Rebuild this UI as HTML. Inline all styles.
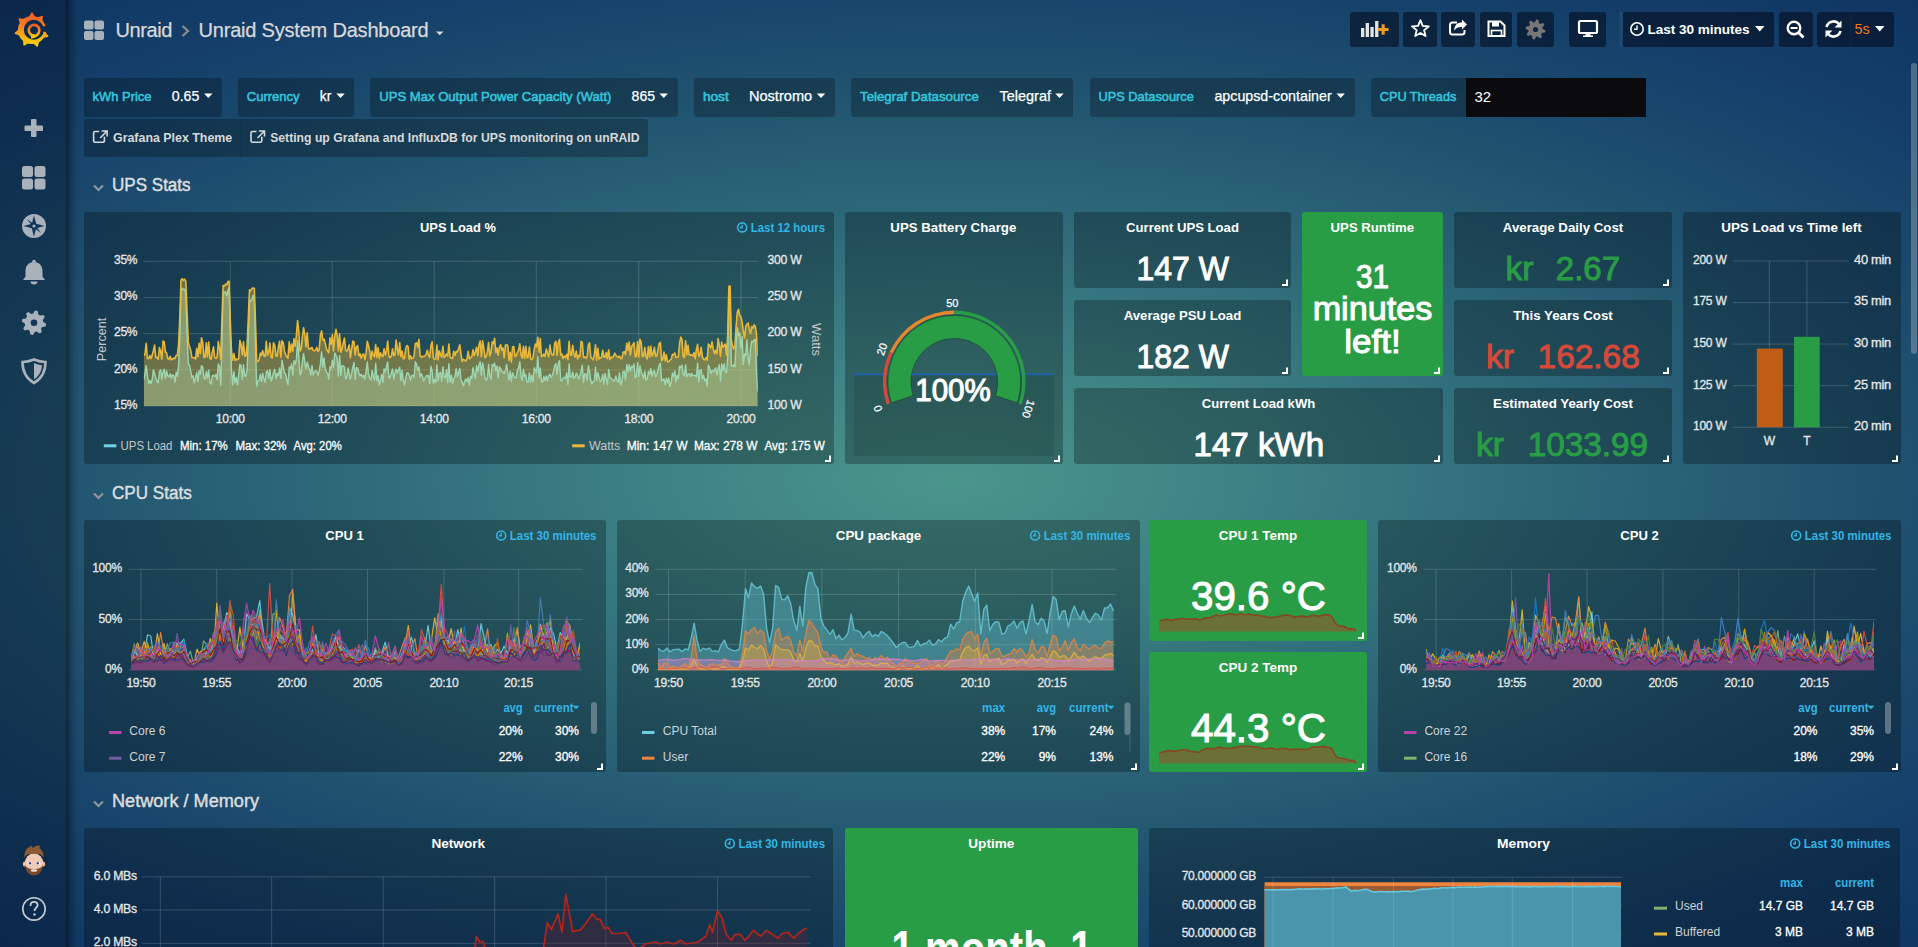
<!DOCTYPE html><html><head><meta charset="utf-8"><style>*{margin:0;padding:0}html,body{width:1918px;height:947px;overflow:hidden}
body{background:radial-gradient(ellipse 1500px 640px at 950px 480px,#4a958c 0%,#3f8485 18%,#2e6a7a 40%,#20526f 62%,#15406a 82%,#0f3563 100%);}
svg{position:absolute;left:0;top:0;font-family:"Liberation Sans",sans-serif}</style></head><body><svg width="1918" height="947" viewBox="0 0 1918 947"><defs><linearGradient id="sbsh" x1="0" x2="1"><stop offset="0" stop-color="#000" stop-opacity="0.5"/><stop offset="0.25" stop-color="#000" stop-opacity="0.28"/><stop offset="0.65" stop-color="#000" stop-opacity="0.07"/><stop offset="1" stop-color="#000" stop-opacity="0"/></linearGradient></defs><rect x="0" y="0" width="66" height="947" rx="0" fill="rgba(0,8,20,0.30)" /><rect x="66" y="0" width="14" height="947" rx="0" fill="url(#sbsh)" /><defs><linearGradient id="glg" x1="0" y1="0" x2="0" y2="1"><stop offset="0" stop-color="#f15a24"/><stop offset="0.5" stop-color="#f7931e"/><stop offset="1" stop-color="#fbd00a"/></linearGradient></defs><g fill="url(#glg)" stroke="url(#glg)" stroke-width="1.6" stroke-linejoin="round"><circle cx="32.0" cy="30.0" r="13.3"/><path d="M29.2,17.8 L32.0,13.2 L34.8,17.8 Z M37.1,18.6 L42.1,16.6 L41.6,22.0 Z M44.3,32.0 L47.6,36.3 L42.2,37.2 Z M38.4,40.7 L37.2,46.0 L33.1,42.5 Z M28.8,42.1 L24.1,44.8 L23.8,39.4 Z M20.6,35.1 L15.5,33.2 L19.5,29.6 Z M21.0,24.1 L19.3,19.0 L24.7,19.9 Z"/></g><circle cx="33.8" cy="29.7" r="10.0" fill="#0c2a4e"/><path d="M41.0,26.5 L47.5,26.0 L46.5,32.0 L41.5,31.5 Z" fill="#0c2a4e" stroke="none" stroke-width="1" /><path d="M35.5,35.3 A5.3,5.3 0 1 1 39.2,31.5 A8.2,8.2 0 0 1 31.0,37.3" fill="none" stroke="url(#glg)" stroke-width="2.6"/><rect x="31" y="119" width="5.5" height="18" rx="1" fill="#a9b1ba" /><rect x="24.5" y="125.5" width="18.5" height="5.5" rx="1" fill="#a9b1ba" /><rect x="22" y="166" width="11" height="11" rx="2.5" fill="#a9b1ba" /><rect x="34.5" y="166" width="11.0" height="11" rx="2.5" fill="#a9b1ba" /><rect x="22" y="178.5" width="11" height="11.0" rx="2.5" fill="#a9b1ba" /><rect x="34.5" y="178.5" width="11.0" height="11.0" rx="2.5" fill="#a9b1ba" /><circle cx="34" cy="226" r="12" fill="#a9b1ba"/><path d="M34,215.5 L36.2,223.8 L44.5,226 L36.2,228.2 L34,236.5 L31.8,228.2 L23.5,226 L31.8,223.8 Z" fill="#12365a" stroke="none" stroke-width="1" /><path d="M27,219 L35,225 L41,233 L33,227 Z" fill="#12365a" stroke="none" stroke-width="1" /><circle cx="34" cy="226" r="1.6" fill="#a9b1ba"/><path d="M34,262 c-5.5,0 -8.5,4 -8.5,9.5 v5 l-2.5,3.5 h22 l-2.5,-3.5 v-5 c0,-5.5 -3,-9.5 -8.5,-9.5 Z" fill="#a9b1ba" stroke="none" stroke-width="1" /><circle cx="34" cy="261.5" r="1.8" fill="#a9b1ba"/><path d="M30.5,281.5 h7 a3.5,3 0 0 1 -7,0 Z" fill="#a9b1ba" stroke="none" stroke-width="1" /><polygon points="46.2,323.8 45.6,326.4 42.2,327.0 41.1,328.6 41.8,332.1 39.6,333.5 36.8,331.5 34.8,331.9 32.9,334.9 30.3,334.3 29.7,330.9 28.1,329.8 24.6,330.5 23.2,328.3 25.2,325.5 24.8,323.5 21.8,321.6 22.4,319.0 25.8,318.4 26.9,316.8 26.2,313.3 28.4,311.9 31.2,313.9 33.2,313.5 35.1,310.5 37.7,311.1 38.3,314.5 39.9,315.6 43.4,314.9 44.8,317.1 42.8,319.9 43.2,321.9" fill="#a9b1ba"/><circle cx="34" cy="322.7" r="3.3" fill="#12375a"/><path d="M34,359.5 C29,361.5 26,362 22.5,362 C22.5,372 27,379 34,383 C41,379 45.5,372 45.5,362 C42,362 39,361.5 34,359.5 Z" fill="none" stroke="#a9b1ba" stroke-width="2.6" /><path d="M34,363 C37,364.5 39.5,365 42,365.2 C41.8,371.5 38.5,376.5 34,379.5 Z" fill="#a9b1ba" stroke="none" stroke-width="1" /><circle cx="33.8" cy="860.5" r="13.5" fill="#0d2542" fill-opacity="0.6"/><ellipse cx="24.6" cy="864" rx="1.8" ry="2.6" fill="#e9bda3"/><ellipse cx="43.4" cy="864" rx="1.8" ry="2.6" fill="#e9bda3"/><ellipse cx="34" cy="863.5" rx="9.2" ry="10.2" fill="#f0cbb4"/><path d="M24.5,858 C24,852 26,848.5 29,847.5 L31,845.5 L33,848 C35,846 37.5,845 40,846 L39.5,848.5 C42.5,850 44,853.5 43.5,858 C42,854.5 39,853.5 34,853.5 C29,853.5 26,854.5 24.5,858 Z" fill="#8e5a34" stroke="none" stroke-width="1" /><path d="M25,864 C25.5,872 29.5,875.5 34,875.5 C38.5,875.5 42.5,872 43,864 C42,867.5 40,869 34,869 C28,869 26,867.5 25,864 Z" fill="#7b4a2b" stroke="none" stroke-width="1" /><ellipse cx="34" cy="870.5" rx="3.2" ry="1.2" fill="#f5e6dc"/><ellipse cx="29.8" cy="863.3" rx="2.2" ry="1.5" fill="#fff"/><ellipse cx="38" cy="863.3" rx="2.2" ry="1.5" fill="#fff"/><circle cx="30" cy="863.3" r="1.2" fill="#3b3f8a"/><circle cx="37.8" cy="863.3" r="1.2" fill="#3b3f8a"/><circle cx="34" cy="908.9" r="11.2" fill="none" stroke="#c8ccd0" stroke-width="1.6"/><path d="M30.5,906 C30.5,902.8 32,901.8 34,901.8 C36.2,901.8 37.6,903.2 37.6,905.2 C37.6,907.5 34.5,908 34.5,911" fill="none" stroke="#c8ccd0" stroke-width="1.8" /><circle cx="34.5" cy="914.5" r="1.2" fill="#c8ccd0"/><rect x="84" y="20.5" width="9.5" height="9.0" rx="2" fill="#a9b1ba" /><rect x="94.5" y="20.5" width="9.5" height="9.0" rx="2" fill="#a9b1ba" /><rect x="84" y="31" width="9.5" height="9" rx="2" fill="#a9b1ba" /><rect x="94.5" y="31" width="9.5" height="9" rx="2" fill="#a9b1ba" /><text x="115.5" y="36.8" font-size="20" fill="#d8d9da" font-weight="normal" text-anchor="start" letter-spacing="-0.4" stroke="#d8d9da" stroke-width="0.25" >Unraid</text><path d="M182.5,26 L188,31 L182.5,36" fill="none" stroke="#8e8e8e" stroke-width="2.2" /><text x="198.5" y="36.8" font-size="20" fill="#d8d9da" font-weight="normal" text-anchor="start" letter-spacing="-0.2" stroke="#d8d9da" stroke-width="0.25" >Unraid System Dashboard</text><path d="M436,31.5 h7.5 l-3.75,3.8 Z" fill="#d8d9da" stroke="none" stroke-width="1" /><rect x="1350" y="12" width="49" height="35" rx="3" fill="rgba(3,12,30,0.58)" /><rect x="1403" y="12" width="34" height="35" rx="3" fill="rgba(3,12,30,0.58)" /><rect x="1441" y="12" width="34" height="35" rx="3" fill="rgba(3,12,30,0.58)" /><rect x="1480" y="12" width="32" height="35" rx="3" fill="rgba(3,12,30,0.58)" /><rect x="1517" y="12" width="37" height="35" rx="3" fill="rgba(3,12,30,0.58)" /><rect x="1569" y="12" width="37" height="35" rx="3" fill="rgba(3,12,30,0.58)" /><rect x="1623" y="12" width="151" height="35" rx="3" fill="rgba(3,12,30,0.58)" /><rect x="1779" y="12" width="34" height="35" rx="3" fill="rgba(3,12,30,0.58)" /><rect x="1817" y="12" width="77" height="35" rx="3" fill="rgba(3,12,30,0.58)" /><rect x="1619.5" y="12" width="3.0" height="35" rx="0" fill="rgba(255,255,255,0.06)" /><rect x="1850" y="12" width="1" height="35" rx="0" fill="rgba(255,255,255,0.04)" /><rect x="1361.0" y="28" width="3.2999999999999545" height="9" rx="0" fill="#e4e4e4" /><rect x="1365.7" y="23" width="3.2999999999999545" height="14" rx="0" fill="#e4e4e4" /><rect x="1370.4" y="27" width="3.2999999999999545" height="10" rx="0" fill="#e4e4e4" /><rect x="1375.1" y="21" width="3.2999999999999545" height="16" rx="0" fill="#e4e4e4" /><rect x="1377.8" y="28" width="10.700000000000045" height="3" rx="0" fill="#f39c1a" /><rect x="1381.6" y="24.3" width="3.1000000000001364" height="10.400000000000002" rx="0" fill="#f39c1a" /><polygon points="1420.4,20.2 1422.7,25.8 1428.8,26.3 1424.1,30.2 1425.6,36.1 1420.4,32.9 1415.2,36.1 1416.7,30.2 1412.0,26.3 1418.1,25.8" fill="none" stroke="#fff" stroke-width="1.8" stroke-linejoin="round"/><path d="M1457,22.5 h-4.5 a2.5,2.5 0 0 0 -2.5,2.5 v7 a2.5,2.5 0 0 0 2.5,2.5 h9.5 a2.5,2.5 0 0 0 2.5,-2.5 v-2" fill="none" stroke="#fff" stroke-width="2" /><path d="M1467,24.5 L1462,19.5 V22.5 C1457,22.5 1454.5,25 1454,31 C1456,27.5 1458.5,27 1462,27 V29.5 Z" fill="#fff" stroke="none" stroke-width="1" /><path d="M1488.5,21.5 h12 l4,4 v10.5 h-16 Z" fill="none" stroke="#fff" stroke-width="2" /><rect x="1492" y="22" width="7" height="4.5" rx="0" fill="#fff" /><rect x="1491.5" y="30.5" width="10.0" height="5.5" rx="0" fill="none" stroke="#fff" stroke-width="1.6"/><polygon points="1545.5,30.3 1545.0,32.6 1542.0,32.8 1541.1,34.2 1542.0,37.1 1540.0,38.4 1537.8,36.4 1536.1,36.8 1534.7,39.5 1532.4,39.0 1532.2,36.0 1530.8,35.1 1527.9,36.0 1526.6,34.0 1528.6,31.8 1528.2,30.1 1525.5,28.7 1526.0,26.4 1529.0,26.2 1529.9,24.8 1529.0,21.9 1531.0,20.6 1533.2,22.6 1534.9,22.2 1536.3,19.5 1538.6,20.0 1538.8,23.0 1540.2,23.9 1543.1,23.0 1544.4,25.0 1542.4,27.2 1542.8,28.9" fill="#777"/><circle cx="1535.5" cy="29.5" r="2.6" fill="#0e2340"/><rect x="1579" y="21" width="18" height="12" rx="1.5" fill="none" stroke="#fff" stroke-width="2.2"/><rect x="1585.5" y="33" width="5.0" height="3" rx="0" fill="#fff" /><rect x="1583" y="35.5" width="10" height="1.5" rx="0" fill="#fff" /><circle cx="1637" cy="29" r="6.2" fill="none" stroke="#fff" stroke-width="1.6"/><path d="M1637,25.5 V29.3 H1634.06" fill="none" stroke="#fff" stroke-width="1.4" /><text x="1647.5" y="33.9" font-size="13.6" fill="#fff" font-weight="bold" text-anchor="start" letter-spacing="-0.05" >Last 30 minutes</text><path d="M1755,26 h9.5 l-4.75,5.5 Z" fill="#fff" stroke="none" stroke-width="1" /><circle cx="1794" cy="28" r="6.3" fill="none" stroke="#fff" stroke-width="2.4"/><rect x="1790.5" y="27" width="7.0" height="2" rx="0" fill="#fff" /><path d="M1798.5,32.5 L1803.5,37.5" fill="none" stroke="#fff" stroke-width="2.8" /><path d="M1826.5,27 A7.2,7.2 0 0 1 1839,24" fill="none" stroke="#fff" stroke-width="2.6" /><path d="M1841.5,20.5 V27.5 H1834.5 Z" fill="#fff" stroke="none" stroke-width="1" /><path d="M1840.5,31 A7.2,7.2 0 0 1 1828,34" fill="none" stroke="#fff" stroke-width="2.6" /><path d="M1825.5,37.5 V30.5 H1832.5 Z" fill="#fff" stroke="none" stroke-width="1" /><text x="1854.5" y="34.0" font-size="14.5" fill="#eb7b18" font-weight="normal" text-anchor="start" >5s</text><path d="M1875,26 h9.5 l-4.75,5.5 Z" fill="#fff" stroke="none" stroke-width="1" /><rect x="84" y="78" width="138" height="39" rx="3" fill="rgba(0,0,0,0.25)" /><text x="92.5" y="100.9" font-size="13.6" fill="#35c6dc" stroke="#35c6dc" stroke-width="0.55" textLength="59" lengthAdjust="spacingAndGlyphs">kWh Price</text><text x="171.8" y="100.9" font-size="15" fill="#fff" font-weight="normal" text-anchor="start" stroke="#fff" stroke-width="0.25" textLength="27.5" lengthAdjust="spacingAndGlyphs" >0.65</text><rect x="238" y="78" width="116" height="39" rx="3" fill="rgba(0,0,0,0.25)" /><text x="246.8" y="100.9" font-size="13.6" fill="#35c6dc" stroke="#35c6dc" stroke-width="0.55" textLength="52.8" lengthAdjust="spacingAndGlyphs">Currency</text><text x="319.8" y="100.9" font-size="15" fill="#fff" font-weight="normal" text-anchor="start" stroke="#fff" stroke-width="0.25" textLength="11.5" lengthAdjust="spacingAndGlyphs" >kr</text><rect x="370" y="78" width="308" height="39" rx="3" fill="rgba(0,0,0,0.25)" /><text x="379.3" y="100.9" font-size="13.6" fill="#35c6dc" stroke="#35c6dc" stroke-width="0.55" textLength="232.1" lengthAdjust="spacingAndGlyphs">UPS Max Output Power Capacity (Watt)</text><text x="631.6" y="100.9" font-size="15" fill="#fff" font-weight="normal" text-anchor="start" stroke="#fff" stroke-width="0.25" textLength="23.4" lengthAdjust="spacingAndGlyphs" >865</text><rect x="694" y="78" width="141" height="39" rx="3" fill="rgba(0,0,0,0.25)" /><text x="702.9" y="100.9" font-size="13.6" fill="#35c6dc" stroke="#35c6dc" stroke-width="0.55" textLength="25.8" lengthAdjust="spacingAndGlyphs">host</text><text x="748.9" y="100.9" font-size="15" fill="#fff" font-weight="normal" text-anchor="start" stroke="#fff" stroke-width="0.25" textLength="63.3" lengthAdjust="spacingAndGlyphs" >Nostromo</text><rect x="851" y="78" width="222" height="39" rx="3" fill="rgba(0,0,0,0.25)" /><text x="860" y="100.9" font-size="13.6" fill="#35c6dc" stroke="#35c6dc" stroke-width="0.55" textLength="118.8" lengthAdjust="spacingAndGlyphs">Telegraf Datasource</text><text x="999.5" y="100.9" font-size="15" fill="#fff" font-weight="normal" text-anchor="start" stroke="#fff" stroke-width="0.25" textLength="51.5" lengthAdjust="spacingAndGlyphs" >Telegraf</text><rect x="1090" y="78" width="265" height="39" rx="3" fill="rgba(0,0,0,0.25)" /><text x="1098.5" y="100.9" font-size="13.6" fill="#35c6dc" stroke="#35c6dc" stroke-width="0.55" textLength="95.3" lengthAdjust="spacingAndGlyphs">UPS Datasource</text><text x="1214.4" y="100.9" font-size="15" fill="#fff" font-weight="normal" text-anchor="start" stroke="#fff" stroke-width="0.25" textLength="117.3" lengthAdjust="spacingAndGlyphs" >apcupsd-container</text><path d="M204.10000000000002,93.6 h8.4 l-4.2,4.4 Z" fill="#fff" stroke="none" stroke-width="1" /><path d="M336.3,93.6 h8.4 l-4.2,4.4 Z" fill="#fff" stroke="none" stroke-width="1" /><path d="M659.5,93.6 h8.4 l-4.2,4.4 Z" fill="#fff" stroke="none" stroke-width="1" /><path d="M816.8,93.6 h8.4 l-4.2,4.4 Z" fill="#fff" stroke="none" stroke-width="1" /><path d="M1055.3,93.6 h8.4 l-4.2,4.4 Z" fill="#fff" stroke="none" stroke-width="1" /><path d="M1336.5,93.6 h8.4 l-4.2,4.4 Z" fill="#fff" stroke="none" stroke-width="1" /><rect x="1371" y="78" width="275" height="39" rx="3" fill="rgba(0,0,0,0.25)" /><text x="1379.8" y="100.9" font-size="13.6" fill="#35c6dc" stroke="#35c6dc" stroke-width="0.55" textLength="76.5" lengthAdjust="spacingAndGlyphs">CPU Threads</text><rect x="1466" y="78" width="180" height="39" rx="0" fill="#0b0b0f" /><rect x="1640" y="78" width="6" height="39" rx="3" fill="#0b0b0f" /><text x="1474.5" y="102.2" font-size="15" fill="#fff" font-weight="normal" text-anchor="start" textLength="16.6" lengthAdjust="spacingAndGlyphs" >32</text><rect x="84" y="119" width="564" height="38" rx="3" fill="rgba(0,0,0,0.25)" /><rect x="240.5" y="119" width="1.0" height="38" rx="0" fill="rgba(0,0,0,0.12)" /><path d="M99.1,131.5 h-4 a1.5,1.5 0 0 0 -1.5,1.5 v7.8 a1.5,1.5 0 0 0 1.5,1.5 h7.8 a1.5,1.5 0 0 0 1.5,-1.5 v-4" fill="none" stroke="#d8d9da" stroke-width="1.6" /><path d="M101.6,131 h5.5 v5.5 M106.8,131.3 L100.1,138" fill="none" stroke="#d8d9da" stroke-width="1.6" /><text x="113" y="142.3" font-size="12.4" fill="#d8d9da" font-weight="bold" textLength="119.2" lengthAdjust="spacingAndGlyphs">Grafana Plex Theme</text><path d="M256.5,131.5 h-4 a1.5,1.5 0 0 0 -1.5,1.5 v7.8 a1.5,1.5 0 0 0 1.5,1.5 h7.8 a1.5,1.5 0 0 0 1.5,-1.5 v-4" fill="none" stroke="#d8d9da" stroke-width="1.6" /><path d="M259,131 h5.5 v5.5 M264.2,131.3 L257.5,138" fill="none" stroke="#d8d9da" stroke-width="1.6" /><text x="270.2" y="142.3" font-size="12.4" fill="#d8d9da" font-weight="bold" textLength="369.3" lengthAdjust="spacingAndGlyphs">Setting up Grafana and InfluxDB for UPS monitoring on unRAID</text><path d="M94,185.5 L98.5,190 L103,185.5" fill="none" stroke="#8f959b" stroke-width="2.2" /><text x="112" y="191.3" font-size="18" fill="#dcdddf" stroke="#dcdddf" stroke-width="0.45" textLength="78.6" lengthAdjust="spacingAndGlyphs">UPS Stats</text><path d="M94,493.5 L98.5,498 L103,493.5" fill="none" stroke="#8f959b" stroke-width="2.2" /><text x="112" y="499.3" font-size="18" fill="#dcdddf" stroke="#dcdddf" stroke-width="0.45" textLength="79.7" lengthAdjust="spacingAndGlyphs">CPU Stats</text><path d="M94,801.5 L98.5,806 L103,801.5" fill="none" stroke="#8f959b" stroke-width="2.2" /><text x="112" y="807.3" font-size="18" fill="#dcdddf" stroke="#dcdddf" stroke-width="0.45" textLength="147" lengthAdjust="spacingAndGlyphs">Network / Memory</text><rect x="84" y="212" width="750" height="252" rx="3" fill="rgba(0,0,0,0.27)" /><text x="458" y="231.9" font-size="13.3" fill="#fff" font-weight="bold" text-anchor="middle" textLength="76" lengthAdjust="spacingAndGlyphs">UPS Load %</text><text x="825" y="231.8" font-size="12.2" fill="#33b5e5" font-weight="bold" text-anchor="end" textLength="74.2" lengthAdjust="spacingAndGlyphs">Last 12 hours</text><circle cx="742.1999999999999" cy="227.4" r="4.5" fill="none" stroke="#33b5e5" stroke-width="1.6"/><path d="M742.1999999999999,224.75 V227.70000000000002 H739.9739999999999" fill="none" stroke="#33b5e5" stroke-width="1.4" /><line x1="143.8" y1="261.3" x2="757.7" y2="261.3" stroke="rgba(255,255,255,0.16)" stroke-width="1" /><line x1="143.8" y1="297.475" x2="757.7" y2="297.475" stroke="rgba(255,255,255,0.16)" stroke-width="1" /><line x1="143.8" y1="333.65" x2="757.7" y2="333.65" stroke="rgba(255,255,255,0.16)" stroke-width="1" /><line x1="143.8" y1="369.825" x2="757.7" y2="369.825" stroke="rgba(255,255,255,0.16)" stroke-width="1" /><line x1="143.8" y1="406.0" x2="757.7" y2="406.0" stroke="rgba(255,255,255,0.16)" stroke-width="1" /><line x1="230.3" y1="261.3" x2="230.3" y2="406.0" stroke="rgba(255,255,255,0.16)" stroke-width="1" /><line x1="332.2" y1="261.3" x2="332.2" y2="406.0" stroke="rgba(255,255,255,0.16)" stroke-width="1" /><line x1="434.2" y1="261.3" x2="434.2" y2="406.0" stroke="rgba(255,255,255,0.16)" stroke-width="1" /><line x1="536.3" y1="261.3" x2="536.3" y2="406.0" stroke="rgba(255,255,255,0.16)" stroke-width="1" /><line x1="638.8" y1="261.3" x2="638.8" y2="406.0" stroke="rgba(255,255,255,0.16)" stroke-width="1" /><line x1="741.0" y1="261.3" x2="741.0" y2="406.0" stroke="rgba(255,255,255,0.16)" stroke-width="1" /><text x="137.3" y="264.1" font-size="12" fill="#e6e7e8" font-weight="normal" text-anchor="end" letter-spacing="-0.25" stroke="#e6e7e8" stroke-width="0.3" >35%</text><text x="137.3" y="300.3" font-size="12" fill="#e6e7e8" font-weight="normal" text-anchor="end" letter-spacing="-0.25" stroke="#e6e7e8" stroke-width="0.3" >30%</text><text x="137.3" y="336.4" font-size="12" fill="#e6e7e8" font-weight="normal" text-anchor="end" letter-spacing="-0.25" stroke="#e6e7e8" stroke-width="0.3" >25%</text><text x="137.3" y="372.6" font-size="12" fill="#e6e7e8" font-weight="normal" text-anchor="end" letter-spacing="-0.25" stroke="#e6e7e8" stroke-width="0.3" >20%</text><text x="137.3" y="408.8" font-size="12" fill="#e6e7e8" font-weight="normal" text-anchor="end" letter-spacing="-0.25" stroke="#e6e7e8" stroke-width="0.3" >15%</text><text x="767.5" y="264.1" font-size="12" fill="#e6e7e8" font-weight="normal" text-anchor="start" letter-spacing="-0.25" stroke="#e6e7e8" stroke-width="0.3" textLength="34" lengthAdjust="spacingAndGlyphs" >300 W</text><text x="767.5" y="300.3" font-size="12" fill="#e6e7e8" font-weight="normal" text-anchor="start" letter-spacing="-0.25" stroke="#e6e7e8" stroke-width="0.3" textLength="34" lengthAdjust="spacingAndGlyphs" >250 W</text><text x="767.5" y="336.4" font-size="12" fill="#e6e7e8" font-weight="normal" text-anchor="start" letter-spacing="-0.25" stroke="#e6e7e8" stroke-width="0.3" textLength="34" lengthAdjust="spacingAndGlyphs" >200 W</text><text x="767.5" y="372.6" font-size="12" fill="#e6e7e8" font-weight="normal" text-anchor="start" letter-spacing="-0.25" stroke="#e6e7e8" stroke-width="0.3" textLength="34" lengthAdjust="spacingAndGlyphs" >150 W</text><text x="767.5" y="408.8" font-size="12" fill="#e6e7e8" font-weight="normal" text-anchor="start" letter-spacing="-0.25" stroke="#e6e7e8" stroke-width="0.3" textLength="34" lengthAdjust="spacingAndGlyphs" >100 W</text><text x="230.3" y="423.0" font-size="12" fill="#e6e7e8" font-weight="normal" text-anchor="middle" letter-spacing="-0.25" stroke="#e6e7e8" stroke-width="0.3" textLength="29" lengthAdjust="spacingAndGlyphs" >10:00</text><text x="332.2" y="423.0" font-size="12" fill="#e6e7e8" font-weight="normal" text-anchor="middle" letter-spacing="-0.25" stroke="#e6e7e8" stroke-width="0.3" textLength="29" lengthAdjust="spacingAndGlyphs" >12:00</text><text x="434.2" y="423.0" font-size="12" fill="#e6e7e8" font-weight="normal" text-anchor="middle" letter-spacing="-0.25" stroke="#e6e7e8" stroke-width="0.3" textLength="29" lengthAdjust="spacingAndGlyphs" >14:00</text><text x="536.3" y="423.0" font-size="12" fill="#e6e7e8" font-weight="normal" text-anchor="middle" letter-spacing="-0.25" stroke="#e6e7e8" stroke-width="0.3" textLength="29" lengthAdjust="spacingAndGlyphs" >16:00</text><text x="638.8" y="423.0" font-size="12" fill="#e6e7e8" font-weight="normal" text-anchor="middle" letter-spacing="-0.25" stroke="#e6e7e8" stroke-width="0.3" textLength="29" lengthAdjust="spacingAndGlyphs" >18:00</text><text x="741.0" y="423.0" font-size="12" fill="#e6e7e8" font-weight="normal" text-anchor="middle" letter-spacing="-0.25" stroke="#e6e7e8" stroke-width="0.3" textLength="29" lengthAdjust="spacingAndGlyphs" >20:00</text><text x="0.0" y="0.0" font-size="12.5" fill="#c4c7ca" font-weight="normal" text-anchor="middle" textLength="43.4" lengthAdjust="spacingAndGlyphs" transform="translate(105.5,339.5) rotate(-90)">Percent</text><text x="0.0" y="0.0" font-size="12.5" fill="#c4c7ca" font-weight="normal" text-anchor="middle" textLength="33" lengthAdjust="spacingAndGlyphs" transform="translate(811.8,339.5) rotate(90)">Watts</text><clipPath id="c_ups"><rect x="143.8" y="250" width="614" height="156"/></clipPath><g clip-path="url(#c_ups)"><path d="M143.8,355.7 L145.0,354.0 L146.2,343.2 L147.4,358.5 L148.6,358.7 L149.8,355.6 L151.0,358.5 L152.2,355.1 L153.4,350.4 L154.6,345.1 L155.8,357.4 L157.0,357.3 L158.2,359.3 L159.4,347.5 L160.6,351.0 L161.8,359.3 L163.0,341.1 L164.2,341.7 L165.4,351.9 L166.6,353.1 L167.8,358.5 L169.0,359.3 L170.2,356.3 L171.4,359.9 L172.6,359.0 L173.8,358.1 L175.0,358.4 L176.2,355.4 L177.4,355.1 L178.6,344.1 L179.8,317.3 L181.0,280.3 L182.2,278.7 L183.4,280.5 L184.6,279.2 L185.8,281.2 L187.0,310.2 L188.3,341.9 L189.5,346.6 L190.7,350.2 L191.9,357.4 L193.1,357.7 L194.3,357.6 L195.5,359.1 L196.7,348.4 L197.9,356.8 L199.1,343.3 L200.3,353.7 L201.5,337.9 L202.7,342.5 L203.9,357.6 L205.1,357.2 L206.3,342.8 L207.5,357.0 L208.7,342.0 L209.9,358.4 L211.1,359.5 L212.3,352.2 L213.5,346.9 L214.7,357.3 L215.9,358.5 L217.1,357.3 L218.3,341.5 L219.5,348.5 L220.7,359.2 L221.9,319.7 L223.1,285.5 L224.3,285.9 L225.5,284.3 L226.7,284.6 L227.9,281.5 L229.1,281.4 L230.3,320.5 L231.5,351.0 L232.7,360.2 L233.9,353.6 L235.1,360.4 L236.3,359.0 L237.5,359.7 L238.7,358.4 L239.9,340.5 L241.1,344.7 L242.3,355.0 L243.5,341.7 L244.7,356.3 L245.9,356.0 L247.1,344.3 L248.3,318.2 L249.5,289.8 L250.7,290.8 L251.9,288.5 L253.1,288.0 L254.3,288.3 L255.5,322.2 L256.7,360.3 L257.9,361.6 L259.1,360.2 L260.3,353.1 L261.5,355.3 L262.7,350.6 L263.9,355.9 L265.1,356.6 L266.3,341.3 L267.5,355.4 L268.7,352.3 L269.9,343.1 L271.1,357.4 L272.3,358.0 L273.5,342.8 L274.7,345.2 L276.0,356.1 L277.2,356.1 L278.4,347.1 L279.6,341.2 L280.8,357.4 L282.0,340.9 L283.2,342.4 L284.4,350.9 L285.6,354.6 L286.8,356.8 L288.0,358.2 L289.2,341.9 L290.4,352.3 L291.6,344.0 L292.8,351.2 L294.0,338.9 L295.2,346.2 L296.4,335.6 L297.6,320.6 L298.8,331.5 L300.0,351.0 L301.2,349.2 L302.4,336.4 L303.6,327.9 L304.8,334.9 L306.0,346.8 L307.2,332.7 L308.4,348.4 L309.6,349.5 L310.8,348.1 L312.0,347.6 L313.2,350.5 L314.4,350.8 L315.6,350.2 L316.8,347.4 L318.0,351.6 L319.2,349.9 L320.4,335.3 L321.6,330.9 L322.8,340.3 L324.0,339.0 L325.2,343.0 L326.4,348.8 L327.6,351.0 L328.8,352.7 L330.0,337.8 L331.2,344.4 L332.4,334.7 L333.6,350.9 L334.8,336.4 L336.0,329.3 L337.2,335.6 L338.4,350.9 L339.6,333.8 L340.8,352.3 L342.0,349.0 L343.2,343.2 L344.4,338.1 L345.6,350.0 L346.8,351.4 L348.0,349.0 L349.2,344.9 L350.4,358.0 L351.6,349.5 L352.8,341.1 L354.0,341.8 L355.2,355.2 L356.4,346.8 L357.6,345.7 L358.8,355.7 L360.0,353.8 L361.2,358.2 L362.4,354.8 L363.7,354.0 L364.9,359.6 L366.1,352.8 L367.3,341.3 L368.5,345.6 L369.7,351.2 L370.9,359.5 L372.1,351.0 L373.3,355.1 L374.5,356.9 L375.7,344.6 L376.9,357.5 L378.1,347.7 L379.3,358.6 L380.5,352.8 L381.7,355.7 L382.9,356.7 L384.1,348.7 L385.3,354.9 L386.5,350.9 L387.7,341.0 L388.9,356.3 L390.1,357.7 L391.3,356.1 L392.5,348.9 L393.7,355.6 L394.9,355.1 L396.1,340.1 L397.3,348.6 L398.5,354.8 L399.7,342.6 L400.9,356.8 L402.1,351.1 L403.3,358.8 L404.5,358.4 L405.7,348.8 L406.9,345.6 L408.1,346.6 L409.3,359.4 L410.5,355.7 L411.7,358.6 L412.9,358.5 L414.1,355.5 L415.3,343.6 L416.5,342.8 L417.7,347.1 L418.9,339.4 L420.1,355.8 L421.3,357.3 L422.5,356.2 L423.7,356.5 L424.9,355.9 L426.1,354.4 L427.3,350.3 L428.5,355.3 L429.7,357.2 L430.9,346.0 L432.1,341.8 L433.3,357.7 L434.5,359.3 L435.7,359.3 L436.9,345.0 L438.1,359.9 L439.3,350.8 L440.5,354.7 L441.7,357.2 L442.9,346.2 L444.1,357.6 L445.3,356.2 L446.5,353.9 L447.7,356.2 L448.9,344.0 L450.1,357.1 L451.4,358.1 L452.6,358.4 L453.8,351.2 L455.0,355.4 L456.2,351.4 L457.4,351.9 L458.6,348.5 L459.8,344.8 L461.0,354.3 L462.2,361.5 L463.4,359.3 L464.6,360.1 L465.8,361.0 L467.0,358.8 L468.2,351.3 L469.4,358.9 L470.6,357.5 L471.8,356.8 L473.0,349.7 L474.2,355.5 L475.4,352.2 L476.6,347.2 L477.8,355.6 L479.0,345.0 L480.2,341.1 L481.4,356.6 L482.6,340.9 L483.8,348.2 L485.0,357.7 L486.2,356.4 L487.4,352.1 L488.6,342.5 L489.8,356.0 L491.0,352.6 L492.2,341.8 L493.4,343.8 L494.6,338.4 L495.8,352.8 L497.0,348.0 L498.2,355.3 L499.4,347.6 L500.6,344.7 L501.8,350.3 L503.0,347.9 L504.2,357.6 L505.4,345.1 L506.6,344.5 L507.8,345.8 L509.0,360.7 L510.2,352.4 L511.4,362.2 L512.6,346.7 L513.8,346.6 L515.0,356.7 L516.2,355.8 L517.4,352.4 L518.6,350.1 L519.8,343.9 L521.0,354.4 L522.2,358.2 L523.4,346.3 L524.6,358.5 L525.8,346.3 L527.0,357.7 L528.2,357.0 L529.4,347.1 L530.6,358.9 L531.8,359.7 L533.0,357.6 L534.2,349.9 L535.4,344.0 L536.6,346.8 L537.8,337.3 L539.1,352.1 L540.3,338.5 L541.5,356.4 L542.7,356.2 L543.9,354.0 L545.1,356.4 L546.3,349.0 L547.5,353.0 L548.7,356.7 L549.9,345.1 L551.1,352.8 L552.3,355.0 L553.5,354.9 L554.7,343.4 L555.9,341.4 L557.1,355.5 L558.3,342.6 L559.5,339.6 L560.7,355.1 L561.9,354.1 L563.1,358.5 L564.3,356.2 L565.5,357.6 L566.7,354.2 L567.9,359.6 L569.1,341.2 L570.3,354.9 L571.5,355.3 L572.7,345.3 L573.9,354.2 L575.1,357.2 L576.3,351.0 L577.5,359.0 L578.7,355.2 L579.9,356.8 L581.1,341.4 L582.3,342.4 L583.5,357.5 L584.7,356.8 L585.9,358.5 L587.1,356.5 L588.3,345.4 L589.5,342.8 L590.7,356.7 L591.9,358.5 L593.1,359.8 L594.3,354.9 L595.5,344.9 L596.7,360.2 L597.9,348.4 L599.1,359.0 L600.3,357.7 L601.5,357.5 L602.7,350.2 L603.9,357.2 L605.1,357.0 L606.3,352.5 L607.5,358.8 L608.7,349.9 L609.9,359.7 L611.1,357.1 L612.3,357.6 L613.5,356.4 L614.7,353.2 L615.9,355.2 L617.1,356.8 L618.3,357.3 L619.5,356.0 L620.7,358.7 L621.9,358.5 L623.1,352.5 L624.3,351.6 L625.5,354.4 L626.8,343.2 L628.0,350.5 L629.2,342.1 L630.4,355.2 L631.6,346.5 L632.8,345.0 L634.0,342.6 L635.2,356.6 L636.4,356.4 L637.6,341.6 L638.8,356.9 L640.0,339.2 L641.2,342.5 L642.4,356.6 L643.6,355.9 L644.8,347.5 L646.0,356.9 L647.2,358.8 L648.4,346.5 L649.6,357.2 L650.8,346.0 L652.0,356.1 L653.2,353.9 L654.4,347.3 L655.6,356.3 L656.8,356.2 L658.0,349.7 L659.2,343.3 L660.4,342.5 L661.6,360.7 L662.8,359.5 L664.0,352.1 L665.2,360.9 L666.4,354.8 L667.6,361.9 L668.8,361.6 L670.0,360.2 L671.2,359.4 L672.4,354.4 L673.6,355.0 L674.8,353.0 L676.0,357.3 L677.2,357.4 L678.4,356.8 L679.6,342.9 L680.8,337.1 L682.0,339.4 L683.2,356.5 L684.4,357.7 L685.6,340.8 L686.8,354.9 L688.0,345.4 L689.2,355.0 L690.4,354.9 L691.6,354.7 L692.8,355.9 L694.0,352.6 L695.2,358.7 L696.4,349.7 L697.6,344.4 L698.8,356.3 L700.0,354.6 L701.2,347.4 L702.4,357.1 L703.6,359.3 L704.8,359.9 L706.0,357.7 L707.2,360.1 L708.4,344.0 L709.6,345.8 L710.8,347.9 L712.0,341.9 L713.2,349.0 L714.5,353.6 L715.7,350.2 L716.9,353.8 L718.1,338.6 L719.3,344.9 L720.5,356.5 L721.7,342.1 L722.9,347.3 L724.1,345.6 L725.3,344.1 L726.5,355.1 L727.7,334.7 L728.9,286.2 L730.1,286.1 L731.3,339.9 L732.5,345.4 L733.7,349.1 L734.9,345.9 L736.1,326.5 L737.3,312.4 L738.5,309.4 L739.7,315.7 L740.9,316.6 L742.1,322.0 L743.3,330.8 L744.5,338.2 L745.7,326.7 L746.9,324.2 L748.1,323.0 L749.3,329.7 L750.5,333.5 L751.7,326.5 L752.9,328.4 L754.1,324.8 L755.3,326.2 L756.5,333.9 L757.7,356.3 L757.7,406.0 L143.8,406.0 Z" fill="rgba(234,184,57,0.40)" stroke="none" stroke-width="1" /><path d="M143.8,379.5 L145.0,373.4 L146.2,365.7 L147.4,375.4 L148.6,383.4 L149.8,380.4 L151.0,383.6 L152.2,379.3 L153.4,369.8 L154.6,372.9 L155.8,378.0 L157.0,381.6 L158.2,382.6 L159.4,371.9 L160.6,369.8 L161.8,379.0 L163.0,371.9 L164.2,369.3 L165.4,378.3 L166.6,370.8 L167.8,375.9 L169.0,376.7 L170.2,373.8 L171.4,378.0 L172.6,374.8 L173.8,375.7 L175.0,382.2 L176.2,372.3 L177.4,376.2 L178.6,365.1 L179.8,337.7 L181.0,289.5 L182.2,288.3 L183.4,289.7 L184.6,289.2 L185.8,292.7 L187.0,331.8 L188.3,363.8 L189.5,364.9 L190.7,370.8 L191.9,377.7 L193.1,375.8 L194.3,382.8 L195.5,378.0 L196.7,372.4 L197.9,381.5 L199.1,370.8 L200.3,374.4 L201.5,365.7 L202.7,366.9 L203.9,377.3 L205.1,379.4 L206.3,371.7 L207.5,378.1 L208.7,370.2 L209.9,382.5 L211.1,384.0 L212.3,375.9 L213.5,375.3 L214.7,376.6 L215.9,374.2 L217.1,379.6 L218.3,363.9 L219.5,366.7 L220.7,385.5 L221.9,344.8 L223.1,291.9 L224.3,292.2 L225.5,291.9 L226.7,295.7 L227.9,290.8 L229.1,287.5 L230.3,337.0 L231.5,370.5 L232.7,384.7 L233.9,371.7 L235.1,382.8 L236.3,377.5 L237.5,384.9 L238.7,374.0 L239.9,364.4 L241.1,365.7 L242.3,379.3 L243.5,364.7 L244.7,376.3 L245.9,375.9 L247.1,370.0 L248.3,337.8 L249.5,299.6 L250.7,301.0 L251.9,299.6 L253.1,295.3 L254.3,299.8 L255.5,346.3 L256.7,386.2 L257.9,380.9 L259.1,380.6 L260.3,374.3 L261.5,381.6 L262.7,373.2 L263.9,378.7 L265.1,382.3 L266.3,372.0 L267.5,370.6 L268.7,378.3 L269.9,369.6 L271.1,381.1 L272.3,377.8 L273.5,372.2 L274.7,369.3 L276.0,378.7 L277.2,373.2 L278.4,375.8 L279.6,367.9 L280.8,378.4 L282.0,360.3 L283.2,366.5 L284.4,373.1 L285.6,373.6 L286.8,380.1 L288.0,384.6 L289.2,366.9 L290.4,368.6 L291.6,364.0 L292.8,375.0 L294.0,360.6 L295.2,364.0 L296.4,359.4 L297.6,340.6 L298.8,356.1 L300.0,375.0 L301.2,372.6 L302.4,361.3 L303.6,353.6 L304.8,362.2 L306.0,369.0 L307.2,362.1 L308.4,366.4 L309.6,369.3 L310.8,374.9 L312.0,365.4 L313.2,375.0 L314.4,372.0 L315.6,370.6 L316.8,370.9 L318.0,375.0 L319.2,371.7 L320.4,363.9 L321.6,351.8 L322.8,367.1 L324.0,357.9 L325.2,368.0 L326.4,372.1 L327.6,373.2 L328.8,379.1 L330.0,366.7 L331.2,368.7 L332.4,360.3 L333.6,367.5 L334.8,352.9 L336.0,355.6 L337.2,358.2 L338.4,376.1 L339.6,355.6 L340.8,375.3 L342.0,365.8 L343.2,365.8 L344.4,366.9 L345.6,378.8 L346.8,377.1 L348.0,368.2 L349.2,373.5 L350.4,379.2 L351.6,373.6 L352.8,367.4 L354.0,362.5 L355.2,379.5 L356.4,367.8 L357.6,367.9 L358.8,372.2 L360.0,375.7 L361.2,374.3 L362.4,377.2 L363.7,375.1 L364.9,379.2 L366.1,371.0 L367.3,362.0 L368.5,374.3 L369.7,378.3 L370.9,380.1 L372.1,370.4 L373.3,376.4 L374.5,380.2 L375.7,363.2 L376.9,380.8 L378.1,375.6 L379.3,384.8 L380.5,380.1 L381.7,374.1 L382.9,382.2 L384.1,368.9 L385.3,371.7 L386.5,367.0 L387.7,362.0 L388.9,378.1 L390.1,377.3 L391.3,373.2 L392.5,368.9 L393.7,379.0 L394.9,373.1 L396.1,369.1 L397.3,373.1 L398.5,370.1 L399.7,367.3 L400.9,380.5 L402.1,370.3 L403.3,380.3 L404.5,385.1 L405.7,377.9 L406.9,373.0 L408.1,372.9 L409.3,375.3 L410.5,380.3 L411.7,375.6 L412.9,375.3 L414.1,377.4 L415.3,361.8 L416.5,363.8 L417.7,370.1 L418.9,367.0 L420.1,377.2 L421.3,373.6 L422.5,376.7 L423.7,381.0 L424.9,378.3 L426.1,375.7 L427.3,376.0 L428.5,375.4 L429.7,383.6 L430.9,366.2 L432.1,370.7 L433.3,383.3 L434.5,379.3 L435.7,382.5 L436.9,364.7 L438.1,380.9 L439.3,373.4 L440.5,372.4 L441.7,381.5 L442.9,366.9 L444.1,376.9 L445.3,378.0 L446.5,369.6 L447.7,382.7 L448.9,363.6 L450.1,382.2 L451.4,375.2 L452.6,383.4 L453.8,378.5 L455.0,376.3 L456.2,368.6 L457.4,377.0 L458.6,372.3 L459.8,368.5 L461.0,379.9 L462.2,382.1 L463.4,385.9 L464.6,381.7 L465.8,378.9 L467.0,381.6 L468.2,377.4 L469.4,385.1 L470.6,376.1 L471.8,378.6 L473.0,367.6 L474.2,373.9 L475.4,378.8 L476.6,365.6 L477.8,371.6 L479.0,364.9 L480.2,361.8 L481.4,375.5 L482.6,363.0 L483.8,369.2 L485.0,377.7 L486.2,380.2 L487.4,378.4 L488.6,364.4 L489.8,375.9 L491.0,379.3 L492.2,364.4 L493.4,366.1 L494.6,363.1 L495.8,370.6 L497.0,365.9 L498.2,377.7 L499.4,366.8 L500.6,368.5 L501.8,371.7 L503.0,371.8 L504.2,373.6 L505.4,370.2 L506.6,364.4 L507.8,372.8 L509.0,380.0 L510.2,371.1 L511.4,381.1 L512.6,372.7 L513.8,375.6 L515.0,377.9 L516.2,377.8 L517.4,369.8 L518.6,368.2 L519.8,361.6 L521.0,375.9 L522.2,380.2 L523.4,369.2 L524.6,376.6 L525.8,374.8 L527.0,382.0 L528.2,382.1 L529.4,372.6 L530.6,382.2 L531.8,375.2 L533.0,382.1 L534.2,367.8 L535.4,370.3 L536.6,372.9 L537.8,356.7 L539.1,377.8 L540.3,367.9 L541.5,381.7 L542.7,382.2 L543.9,376.5 L545.1,380.7 L546.3,375.9 L547.5,380.8 L548.7,375.6 L549.9,374.3 L551.1,377.5 L552.3,375.3 L553.5,371.4 L554.7,365.5 L555.9,363.5 L557.1,374.1 L558.3,363.2 L559.5,360.6 L560.7,380.3 L561.9,380.9 L563.1,378.0 L564.3,377.3 L565.5,378.3 L566.7,372.9 L567.9,384.4 L569.1,363.8 L570.3,376.8 L571.5,377.2 L572.7,371.9 L573.9,378.3 L575.1,377.2 L576.3,373.0 L577.5,375.2 L578.7,379.1 L579.9,375.3 L581.1,371.0 L582.3,365.3 L583.5,382.4 L584.7,373.6 L585.9,374.1 L587.1,380.3 L588.3,365.6 L589.5,370.5 L590.7,380.0 L591.9,384.0 L593.1,381.5 L594.3,381.5 L595.5,367.2 L596.7,380.3 L597.9,372.7 L599.1,377.6 L600.3,381.8 L601.5,380.5 L602.7,374.4 L603.9,384.0 L605.1,373.5 L606.3,379.3 L607.5,384.5 L608.7,369.4 L609.9,377.0 L611.1,378.8 L612.3,379.4 L613.5,381.5 L614.7,380.3 L615.9,376.0 L617.1,380.7 L618.3,382.3 L619.5,372.6 L620.7,385.2 L621.9,381.1 L623.1,371.7 L624.3,371.0 L625.5,380.1 L626.8,364.4 L628.0,371.7 L629.2,364.7 L630.4,371.0 L631.6,366.1 L632.8,367.6 L634.0,363.9 L635.2,377.7 L636.4,376.8 L637.6,362.6 L638.8,376.5 L640.0,365.9 L641.2,372.4 L642.4,374.2 L643.6,378.7 L644.8,371.3 L646.0,380.3 L647.2,379.1 L648.4,371.5 L649.6,374.3 L650.8,368.4 L652.0,376.4 L653.2,371.6 L654.4,370.6 L655.6,376.8 L656.8,374.3 L658.0,369.7 L659.2,365.0 L660.4,363.0 L661.6,381.0 L662.8,379.9 L664.0,378.9 L665.2,384.9 L666.4,378.2 L667.6,382.9 L668.8,378.0 L670.0,386.5 L671.2,382.1 L672.4,373.0 L673.6,376.5 L674.8,370.6 L676.0,382.2 L677.2,375.2 L678.4,378.6 L679.6,366.1 L680.8,367.4 L682.0,365.2 L683.2,374.0 L684.4,376.0 L685.6,364.9 L686.8,376.8 L688.0,374.1 L689.2,373.7 L690.4,376.5 L691.6,373.2 L692.8,375.6 L694.0,375.6 L695.2,375.3 L696.4,376.7 L697.6,363.1 L698.8,382.1 L700.0,370.2 L701.2,369.5 L702.4,378.7 L703.6,375.3 L704.8,380.8 L706.0,378.7 L707.2,386.2 L708.4,364.9 L709.6,367.8 L710.8,373.7 L712.0,370.5 L713.2,372.0 L714.5,369.5 L715.7,367.8 L716.9,375.2 L718.1,369.2 L719.3,364.7 L720.5,380.9 L721.7,364.0 L722.9,370.4 L724.1,363.7 L725.3,371.9 L726.5,372.7 L727.7,356.6 L728.9,298.4 L730.1,294.3 L731.3,365.5 L732.5,366.5 L733.7,364.7 L734.9,366.9 L736.1,342.7 L737.3,327.7 L738.5,335.5 L739.7,333.0 L740.9,348.1 L742.1,336.6 L743.3,364.4 L744.5,354.0 L745.7,355.6 L746.9,339.7 L748.1,356.9 L749.3,364.8 L750.5,348.7 L751.7,341.2 L752.9,342.0 L754.1,339.7 L755.3,339.3 L756.5,373.4 L757.7,391.5 L757.7,406.0 L143.8,406.0 Z" fill="rgba(183,219,171,0.40)" stroke="none" stroke-width="1" /><path d="M143.8,379.5 L145.0,373.4 L146.2,365.7 L147.4,375.4 L148.6,383.4 L149.8,380.4 L151.0,383.6 L152.2,379.3 L153.4,369.8 L154.6,372.9 L155.8,378.0 L157.0,381.6 L158.2,382.6 L159.4,371.9 L160.6,369.8 L161.8,379.0 L163.0,371.9 L164.2,369.3 L165.4,378.3 L166.6,370.8 L167.8,375.9 L169.0,376.7 L170.2,373.8 L171.4,378.0 L172.6,374.8 L173.8,375.7 L175.0,382.2 L176.2,372.3 L177.4,376.2 L178.6,365.1 L179.8,337.7 L181.0,289.5 L182.2,288.3 L183.4,289.7 L184.6,289.2 L185.8,292.7 L187.0,331.8 L188.3,363.8 L189.5,364.9 L190.7,370.8 L191.9,377.7 L193.1,375.8 L194.3,382.8 L195.5,378.0 L196.7,372.4 L197.9,381.5 L199.1,370.8 L200.3,374.4 L201.5,365.7 L202.7,366.9 L203.9,377.3 L205.1,379.4 L206.3,371.7 L207.5,378.1 L208.7,370.2 L209.9,382.5 L211.1,384.0 L212.3,375.9 L213.5,375.3 L214.7,376.6 L215.9,374.2 L217.1,379.6 L218.3,363.9 L219.5,366.7 L220.7,385.5 L221.9,344.8 L223.1,291.9 L224.3,292.2 L225.5,291.9 L226.7,295.7 L227.9,290.8 L229.1,287.5 L230.3,337.0 L231.5,370.5 L232.7,384.7 L233.9,371.7 L235.1,382.8 L236.3,377.5 L237.5,384.9 L238.7,374.0 L239.9,364.4 L241.1,365.7 L242.3,379.3 L243.5,364.7 L244.7,376.3 L245.9,375.9 L247.1,370.0 L248.3,337.8 L249.5,299.6 L250.7,301.0 L251.9,299.6 L253.1,295.3 L254.3,299.8 L255.5,346.3 L256.7,386.2 L257.9,380.9 L259.1,380.6 L260.3,374.3 L261.5,381.6 L262.7,373.2 L263.9,378.7 L265.1,382.3 L266.3,372.0 L267.5,370.6 L268.7,378.3 L269.9,369.6 L271.1,381.1 L272.3,377.8 L273.5,372.2 L274.7,369.3 L276.0,378.7 L277.2,373.2 L278.4,375.8 L279.6,367.9 L280.8,378.4 L282.0,360.3 L283.2,366.5 L284.4,373.1 L285.6,373.6 L286.8,380.1 L288.0,384.6 L289.2,366.9 L290.4,368.6 L291.6,364.0 L292.8,375.0 L294.0,360.6 L295.2,364.0 L296.4,359.4 L297.6,340.6 L298.8,356.1 L300.0,375.0 L301.2,372.6 L302.4,361.3 L303.6,353.6 L304.8,362.2 L306.0,369.0 L307.2,362.1 L308.4,366.4 L309.6,369.3 L310.8,374.9 L312.0,365.4 L313.2,375.0 L314.4,372.0 L315.6,370.6 L316.8,370.9 L318.0,375.0 L319.2,371.7 L320.4,363.9 L321.6,351.8 L322.8,367.1 L324.0,357.9 L325.2,368.0 L326.4,372.1 L327.6,373.2 L328.8,379.1 L330.0,366.7 L331.2,368.7 L332.4,360.3 L333.6,367.5 L334.8,352.9 L336.0,355.6 L337.2,358.2 L338.4,376.1 L339.6,355.6 L340.8,375.3 L342.0,365.8 L343.2,365.8 L344.4,366.9 L345.6,378.8 L346.8,377.1 L348.0,368.2 L349.2,373.5 L350.4,379.2 L351.6,373.6 L352.8,367.4 L354.0,362.5 L355.2,379.5 L356.4,367.8 L357.6,367.9 L358.8,372.2 L360.0,375.7 L361.2,374.3 L362.4,377.2 L363.7,375.1 L364.9,379.2 L366.1,371.0 L367.3,362.0 L368.5,374.3 L369.7,378.3 L370.9,380.1 L372.1,370.4 L373.3,376.4 L374.5,380.2 L375.7,363.2 L376.9,380.8 L378.1,375.6 L379.3,384.8 L380.5,380.1 L381.7,374.1 L382.9,382.2 L384.1,368.9 L385.3,371.7 L386.5,367.0 L387.7,362.0 L388.9,378.1 L390.1,377.3 L391.3,373.2 L392.5,368.9 L393.7,379.0 L394.9,373.1 L396.1,369.1 L397.3,373.1 L398.5,370.1 L399.7,367.3 L400.9,380.5 L402.1,370.3 L403.3,380.3 L404.5,385.1 L405.7,377.9 L406.9,373.0 L408.1,372.9 L409.3,375.3 L410.5,380.3 L411.7,375.6 L412.9,375.3 L414.1,377.4 L415.3,361.8 L416.5,363.8 L417.7,370.1 L418.9,367.0 L420.1,377.2 L421.3,373.6 L422.5,376.7 L423.7,381.0 L424.9,378.3 L426.1,375.7 L427.3,376.0 L428.5,375.4 L429.7,383.6 L430.9,366.2 L432.1,370.7 L433.3,383.3 L434.5,379.3 L435.7,382.5 L436.9,364.7 L438.1,380.9 L439.3,373.4 L440.5,372.4 L441.7,381.5 L442.9,366.9 L444.1,376.9 L445.3,378.0 L446.5,369.6 L447.7,382.7 L448.9,363.6 L450.1,382.2 L451.4,375.2 L452.6,383.4 L453.8,378.5 L455.0,376.3 L456.2,368.6 L457.4,377.0 L458.6,372.3 L459.8,368.5 L461.0,379.9 L462.2,382.1 L463.4,385.9 L464.6,381.7 L465.8,378.9 L467.0,381.6 L468.2,377.4 L469.4,385.1 L470.6,376.1 L471.8,378.6 L473.0,367.6 L474.2,373.9 L475.4,378.8 L476.6,365.6 L477.8,371.6 L479.0,364.9 L480.2,361.8 L481.4,375.5 L482.6,363.0 L483.8,369.2 L485.0,377.7 L486.2,380.2 L487.4,378.4 L488.6,364.4 L489.8,375.9 L491.0,379.3 L492.2,364.4 L493.4,366.1 L494.6,363.1 L495.8,370.6 L497.0,365.9 L498.2,377.7 L499.4,366.8 L500.6,368.5 L501.8,371.7 L503.0,371.8 L504.2,373.6 L505.4,370.2 L506.6,364.4 L507.8,372.8 L509.0,380.0 L510.2,371.1 L511.4,381.1 L512.6,372.7 L513.8,375.6 L515.0,377.9 L516.2,377.8 L517.4,369.8 L518.6,368.2 L519.8,361.6 L521.0,375.9 L522.2,380.2 L523.4,369.2 L524.6,376.6 L525.8,374.8 L527.0,382.0 L528.2,382.1 L529.4,372.6 L530.6,382.2 L531.8,375.2 L533.0,382.1 L534.2,367.8 L535.4,370.3 L536.6,372.9 L537.8,356.7 L539.1,377.8 L540.3,367.9 L541.5,381.7 L542.7,382.2 L543.9,376.5 L545.1,380.7 L546.3,375.9 L547.5,380.8 L548.7,375.6 L549.9,374.3 L551.1,377.5 L552.3,375.3 L553.5,371.4 L554.7,365.5 L555.9,363.5 L557.1,374.1 L558.3,363.2 L559.5,360.6 L560.7,380.3 L561.9,380.9 L563.1,378.0 L564.3,377.3 L565.5,378.3 L566.7,372.9 L567.9,384.4 L569.1,363.8 L570.3,376.8 L571.5,377.2 L572.7,371.9 L573.9,378.3 L575.1,377.2 L576.3,373.0 L577.5,375.2 L578.7,379.1 L579.9,375.3 L581.1,371.0 L582.3,365.3 L583.5,382.4 L584.7,373.6 L585.9,374.1 L587.1,380.3 L588.3,365.6 L589.5,370.5 L590.7,380.0 L591.9,384.0 L593.1,381.5 L594.3,381.5 L595.5,367.2 L596.7,380.3 L597.9,372.7 L599.1,377.6 L600.3,381.8 L601.5,380.5 L602.7,374.4 L603.9,384.0 L605.1,373.5 L606.3,379.3 L607.5,384.5 L608.7,369.4 L609.9,377.0 L611.1,378.8 L612.3,379.4 L613.5,381.5 L614.7,380.3 L615.9,376.0 L617.1,380.7 L618.3,382.3 L619.5,372.6 L620.7,385.2 L621.9,381.1 L623.1,371.7 L624.3,371.0 L625.5,380.1 L626.8,364.4 L628.0,371.7 L629.2,364.7 L630.4,371.0 L631.6,366.1 L632.8,367.6 L634.0,363.9 L635.2,377.7 L636.4,376.8 L637.6,362.6 L638.8,376.5 L640.0,365.9 L641.2,372.4 L642.4,374.2 L643.6,378.7 L644.8,371.3 L646.0,380.3 L647.2,379.1 L648.4,371.5 L649.6,374.3 L650.8,368.4 L652.0,376.4 L653.2,371.6 L654.4,370.6 L655.6,376.8 L656.8,374.3 L658.0,369.7 L659.2,365.0 L660.4,363.0 L661.6,381.0 L662.8,379.9 L664.0,378.9 L665.2,384.9 L666.4,378.2 L667.6,382.9 L668.8,378.0 L670.0,386.5 L671.2,382.1 L672.4,373.0 L673.6,376.5 L674.8,370.6 L676.0,382.2 L677.2,375.2 L678.4,378.6 L679.6,366.1 L680.8,367.4 L682.0,365.2 L683.2,374.0 L684.4,376.0 L685.6,364.9 L686.8,376.8 L688.0,374.1 L689.2,373.7 L690.4,376.5 L691.6,373.2 L692.8,375.6 L694.0,375.6 L695.2,375.3 L696.4,376.7 L697.6,363.1 L698.8,382.1 L700.0,370.2 L701.2,369.5 L702.4,378.7 L703.6,375.3 L704.8,380.8 L706.0,378.7 L707.2,386.2 L708.4,364.9 L709.6,367.8 L710.8,373.7 L712.0,370.5 L713.2,372.0 L714.5,369.5 L715.7,367.8 L716.9,375.2 L718.1,369.2 L719.3,364.7 L720.5,380.9 L721.7,364.0 L722.9,370.4 L724.1,363.7 L725.3,371.9 L726.5,372.7 L727.7,356.6 L728.9,298.4 L730.1,294.3 L731.3,365.5 L732.5,366.5 L733.7,364.7 L734.9,366.9 L736.1,342.7 L737.3,327.7 L738.5,335.5 L739.7,333.0 L740.9,348.1 L742.1,336.6 L743.3,364.4 L744.5,354.0 L745.7,355.6 L746.9,339.7 L748.1,356.9 L749.3,364.8 L750.5,348.7 L751.7,341.2 L752.9,342.0 L754.1,339.7 L755.3,339.3 L756.5,373.4 L757.7,391.5" fill="none" stroke="#9fd6b2" stroke-width="1.4" stroke-linejoin="round"/><path d="M143.8,355.7 L145.0,354.0 L146.2,343.2 L147.4,358.5 L148.6,358.7 L149.8,355.6 L151.0,358.5 L152.2,355.1 L153.4,350.4 L154.6,345.1 L155.8,357.4 L157.0,357.3 L158.2,359.3 L159.4,347.5 L160.6,351.0 L161.8,359.3 L163.0,341.1 L164.2,341.7 L165.4,351.9 L166.6,353.1 L167.8,358.5 L169.0,359.3 L170.2,356.3 L171.4,359.9 L172.6,359.0 L173.8,358.1 L175.0,358.4 L176.2,355.4 L177.4,355.1 L178.6,344.1 L179.8,317.3 L181.0,280.3 L182.2,278.7 L183.4,280.5 L184.6,279.2 L185.8,281.2 L187.0,310.2 L188.3,341.9 L189.5,346.6 L190.7,350.2 L191.9,357.4 L193.1,357.7 L194.3,357.6 L195.5,359.1 L196.7,348.4 L197.9,356.8 L199.1,343.3 L200.3,353.7 L201.5,337.9 L202.7,342.5 L203.9,357.6 L205.1,357.2 L206.3,342.8 L207.5,357.0 L208.7,342.0 L209.9,358.4 L211.1,359.5 L212.3,352.2 L213.5,346.9 L214.7,357.3 L215.9,358.5 L217.1,357.3 L218.3,341.5 L219.5,348.5 L220.7,359.2 L221.9,319.7 L223.1,285.5 L224.3,285.9 L225.5,284.3 L226.7,284.6 L227.9,281.5 L229.1,281.4 L230.3,320.5 L231.5,351.0 L232.7,360.2 L233.9,353.6 L235.1,360.4 L236.3,359.0 L237.5,359.7 L238.7,358.4 L239.9,340.5 L241.1,344.7 L242.3,355.0 L243.5,341.7 L244.7,356.3 L245.9,356.0 L247.1,344.3 L248.3,318.2 L249.5,289.8 L250.7,290.8 L251.9,288.5 L253.1,288.0 L254.3,288.3 L255.5,322.2 L256.7,360.3 L257.9,361.6 L259.1,360.2 L260.3,353.1 L261.5,355.3 L262.7,350.6 L263.9,355.9 L265.1,356.6 L266.3,341.3 L267.5,355.4 L268.7,352.3 L269.9,343.1 L271.1,357.4 L272.3,358.0 L273.5,342.8 L274.7,345.2 L276.0,356.1 L277.2,356.1 L278.4,347.1 L279.6,341.2 L280.8,357.4 L282.0,340.9 L283.2,342.4 L284.4,350.9 L285.6,354.6 L286.8,356.8 L288.0,358.2 L289.2,341.9 L290.4,352.3 L291.6,344.0 L292.8,351.2 L294.0,338.9 L295.2,346.2 L296.4,335.6 L297.6,320.6 L298.8,331.5 L300.0,351.0 L301.2,349.2 L302.4,336.4 L303.6,327.9 L304.8,334.9 L306.0,346.8 L307.2,332.7 L308.4,348.4 L309.6,349.5 L310.8,348.1 L312.0,347.6 L313.2,350.5 L314.4,350.8 L315.6,350.2 L316.8,347.4 L318.0,351.6 L319.2,349.9 L320.4,335.3 L321.6,330.9 L322.8,340.3 L324.0,339.0 L325.2,343.0 L326.4,348.8 L327.6,351.0 L328.8,352.7 L330.0,337.8 L331.2,344.4 L332.4,334.7 L333.6,350.9 L334.8,336.4 L336.0,329.3 L337.2,335.6 L338.4,350.9 L339.6,333.8 L340.8,352.3 L342.0,349.0 L343.2,343.2 L344.4,338.1 L345.6,350.0 L346.8,351.4 L348.0,349.0 L349.2,344.9 L350.4,358.0 L351.6,349.5 L352.8,341.1 L354.0,341.8 L355.2,355.2 L356.4,346.8 L357.6,345.7 L358.8,355.7 L360.0,353.8 L361.2,358.2 L362.4,354.8 L363.7,354.0 L364.9,359.6 L366.1,352.8 L367.3,341.3 L368.5,345.6 L369.7,351.2 L370.9,359.5 L372.1,351.0 L373.3,355.1 L374.5,356.9 L375.7,344.6 L376.9,357.5 L378.1,347.7 L379.3,358.6 L380.5,352.8 L381.7,355.7 L382.9,356.7 L384.1,348.7 L385.3,354.9 L386.5,350.9 L387.7,341.0 L388.9,356.3 L390.1,357.7 L391.3,356.1 L392.5,348.9 L393.7,355.6 L394.9,355.1 L396.1,340.1 L397.3,348.6 L398.5,354.8 L399.7,342.6 L400.9,356.8 L402.1,351.1 L403.3,358.8 L404.5,358.4 L405.7,348.8 L406.9,345.6 L408.1,346.6 L409.3,359.4 L410.5,355.7 L411.7,358.6 L412.9,358.5 L414.1,355.5 L415.3,343.6 L416.5,342.8 L417.7,347.1 L418.9,339.4 L420.1,355.8 L421.3,357.3 L422.5,356.2 L423.7,356.5 L424.9,355.9 L426.1,354.4 L427.3,350.3 L428.5,355.3 L429.7,357.2 L430.9,346.0 L432.1,341.8 L433.3,357.7 L434.5,359.3 L435.7,359.3 L436.9,345.0 L438.1,359.9 L439.3,350.8 L440.5,354.7 L441.7,357.2 L442.9,346.2 L444.1,357.6 L445.3,356.2 L446.5,353.9 L447.7,356.2 L448.9,344.0 L450.1,357.1 L451.4,358.1 L452.6,358.4 L453.8,351.2 L455.0,355.4 L456.2,351.4 L457.4,351.9 L458.6,348.5 L459.8,344.8 L461.0,354.3 L462.2,361.5 L463.4,359.3 L464.6,360.1 L465.8,361.0 L467.0,358.8 L468.2,351.3 L469.4,358.9 L470.6,357.5 L471.8,356.8 L473.0,349.7 L474.2,355.5 L475.4,352.2 L476.6,347.2 L477.8,355.6 L479.0,345.0 L480.2,341.1 L481.4,356.6 L482.6,340.9 L483.8,348.2 L485.0,357.7 L486.2,356.4 L487.4,352.1 L488.6,342.5 L489.8,356.0 L491.0,352.6 L492.2,341.8 L493.4,343.8 L494.6,338.4 L495.8,352.8 L497.0,348.0 L498.2,355.3 L499.4,347.6 L500.6,344.7 L501.8,350.3 L503.0,347.9 L504.2,357.6 L505.4,345.1 L506.6,344.5 L507.8,345.8 L509.0,360.7 L510.2,352.4 L511.4,362.2 L512.6,346.7 L513.8,346.6 L515.0,356.7 L516.2,355.8 L517.4,352.4 L518.6,350.1 L519.8,343.9 L521.0,354.4 L522.2,358.2 L523.4,346.3 L524.6,358.5 L525.8,346.3 L527.0,357.7 L528.2,357.0 L529.4,347.1 L530.6,358.9 L531.8,359.7 L533.0,357.6 L534.2,349.9 L535.4,344.0 L536.6,346.8 L537.8,337.3 L539.1,352.1 L540.3,338.5 L541.5,356.4 L542.7,356.2 L543.9,354.0 L545.1,356.4 L546.3,349.0 L547.5,353.0 L548.7,356.7 L549.9,345.1 L551.1,352.8 L552.3,355.0 L553.5,354.9 L554.7,343.4 L555.9,341.4 L557.1,355.5 L558.3,342.6 L559.5,339.6 L560.7,355.1 L561.9,354.1 L563.1,358.5 L564.3,356.2 L565.5,357.6 L566.7,354.2 L567.9,359.6 L569.1,341.2 L570.3,354.9 L571.5,355.3 L572.7,345.3 L573.9,354.2 L575.1,357.2 L576.3,351.0 L577.5,359.0 L578.7,355.2 L579.9,356.8 L581.1,341.4 L582.3,342.4 L583.5,357.5 L584.7,356.8 L585.9,358.5 L587.1,356.5 L588.3,345.4 L589.5,342.8 L590.7,356.7 L591.9,358.5 L593.1,359.8 L594.3,354.9 L595.5,344.9 L596.7,360.2 L597.9,348.4 L599.1,359.0 L600.3,357.7 L601.5,357.5 L602.7,350.2 L603.9,357.2 L605.1,357.0 L606.3,352.5 L607.5,358.8 L608.7,349.9 L609.9,359.7 L611.1,357.1 L612.3,357.6 L613.5,356.4 L614.7,353.2 L615.9,355.2 L617.1,356.8 L618.3,357.3 L619.5,356.0 L620.7,358.7 L621.9,358.5 L623.1,352.5 L624.3,351.6 L625.5,354.4 L626.8,343.2 L628.0,350.5 L629.2,342.1 L630.4,355.2 L631.6,346.5 L632.8,345.0 L634.0,342.6 L635.2,356.6 L636.4,356.4 L637.6,341.6 L638.8,356.9 L640.0,339.2 L641.2,342.5 L642.4,356.6 L643.6,355.9 L644.8,347.5 L646.0,356.9 L647.2,358.8 L648.4,346.5 L649.6,357.2 L650.8,346.0 L652.0,356.1 L653.2,353.9 L654.4,347.3 L655.6,356.3 L656.8,356.2 L658.0,349.7 L659.2,343.3 L660.4,342.5 L661.6,360.7 L662.8,359.5 L664.0,352.1 L665.2,360.9 L666.4,354.8 L667.6,361.9 L668.8,361.6 L670.0,360.2 L671.2,359.4 L672.4,354.4 L673.6,355.0 L674.8,353.0 L676.0,357.3 L677.2,357.4 L678.4,356.8 L679.6,342.9 L680.8,337.1 L682.0,339.4 L683.2,356.5 L684.4,357.7 L685.6,340.8 L686.8,354.9 L688.0,345.4 L689.2,355.0 L690.4,354.9 L691.6,354.7 L692.8,355.9 L694.0,352.6 L695.2,358.7 L696.4,349.7 L697.6,344.4 L698.8,356.3 L700.0,354.6 L701.2,347.4 L702.4,357.1 L703.6,359.3 L704.8,359.9 L706.0,357.7 L707.2,360.1 L708.4,344.0 L709.6,345.8 L710.8,347.9 L712.0,341.9 L713.2,349.0 L714.5,353.6 L715.7,350.2 L716.9,353.8 L718.1,338.6 L719.3,344.9 L720.5,356.5 L721.7,342.1 L722.9,347.3 L724.1,345.6 L725.3,344.1 L726.5,355.1 L727.7,334.7 L728.9,286.2 L730.1,286.1 L731.3,339.9 L732.5,345.4 L733.7,349.1 L734.9,345.9 L736.1,326.5 L737.3,312.4 L738.5,309.4 L739.7,315.7 L740.9,316.6 L742.1,322.0 L743.3,330.8 L744.5,338.2 L745.7,326.7 L746.9,324.2 L748.1,323.0 L749.3,329.7 L750.5,333.5 L751.7,326.5 L752.9,328.4 L754.1,324.8 L755.3,326.2 L756.5,333.9 L757.7,356.3" fill="none" stroke="#eab839" stroke-width="1.6" stroke-linejoin="round"/></g><rect x="103.8" y="444.3" width="12.600000000000009" height="3.0" rx="0" fill="#6ed0e0" /><text x="120.6" y="450.2" font-size="12" fill="#c4c7ca" font-weight="normal" text-anchor="start" textLength="51.8" lengthAdjust="spacingAndGlyphs" >UPS Load</text><text x="180.0" y="450.2" font-size="12" fill="#fff" font-weight="normal" text-anchor="start" stroke="#fff" stroke-width="0.3" textLength="47.8" lengthAdjust="spacingAndGlyphs" >Min: 17%</text><text x="235.4" y="450.2" font-size="12" fill="#fff" font-weight="normal" text-anchor="start" stroke="#fff" stroke-width="0.3" textLength="51.2" lengthAdjust="spacingAndGlyphs" >Max: 32%</text><text x="293.6" y="450.2" font-size="12" fill="#fff" font-weight="normal" text-anchor="start" stroke="#fff" stroke-width="0.3" textLength="48.1" lengthAdjust="spacingAndGlyphs" >Avg: 20%</text><rect x="572.2" y="444.3" width="12.5" height="3.0" rx="0" fill="#eab839" /><text x="589.0" y="450.2" font-size="12" fill="#c4c7ca" font-weight="normal" text-anchor="start" textLength="31.3" lengthAdjust="spacingAndGlyphs" >Watts</text><text x="626.7" y="450.2" font-size="12" fill="#fff" font-weight="normal" text-anchor="start" stroke="#fff" stroke-width="0.3" textLength="60.8" lengthAdjust="spacingAndGlyphs" >Min: 147 W</text><text x="693.9" y="450.2" font-size="12" fill="#fff" font-weight="normal" text-anchor="start" stroke="#fff" stroke-width="0.3" textLength="63.5" lengthAdjust="spacingAndGlyphs" >Max: 278 W</text><text x="764.4" y="450.2" font-size="12" fill="#fff" font-weight="normal" text-anchor="start" stroke="#fff" stroke-width="0.3" textLength="60.5" lengthAdjust="spacingAndGlyphs" >Avg: 175 W</text><path d="M825,461 H830 V455.5" fill="none" stroke="#fff" stroke-width="2" /><rect x="845" y="212" width="218" height="252" rx="3" fill="rgba(0,0,0,0.27)" /><text x="953.3" y="231.9" font-size="13.3" fill="#fff" font-weight="bold" text-anchor="middle" textLength="125.9" lengthAdjust="spacingAndGlyphs">UPS Battery Charge</text><rect x="854" y="374.3" width="200" height="81.69999999999999" rx="0" fill="rgba(0,0,0,0.10)" /><line x1="854" y1="374.3" x2="1054" y2="374.3" stroke="#1f62a8" stroke-width="2" /><path d="M891.43,402.84 A66.3,66.3 0 1 1 1017.17,402.84 L995.46,395.57 A43.4,43.4 0 1 0 913.14,395.57 Z" fill="#299c46" stroke="rgba(0,0,0,0.25)" stroke-width="1" /><path d="M886.78,404.39 A71.2,71.2 0 0 1 889.72,351.82 L892.80,353.25 A67.8,67.8 0 0 0 890.00,403.31 Z" fill="#d44a3a" stroke="none" stroke-width="1" /><path d="M889.72,351.82 A71.2,71.2 0 0 1 954.30,310.60 L954.30,314.00 A67.8,67.8 0 0 0 892.80,353.25 Z" fill="#e5862d" stroke="none" stroke-width="1" /><path d="M954.30,310.60 A71.2,71.2 0 0 1 1021.82,404.39 L1018.60,403.31 A67.8,67.8 0 0 0 954.30,314.00 Z" fill="#299c46" stroke="none" stroke-width="1" /><text x="952.3" y="307.2" font-size="11" fill="#fff" font-weight="normal" text-anchor="middle" stroke="#fff" stroke-width="0.25" >50</text><text x="0.0" y="0.0" font-size="11" fill="#fff" font-weight="normal" text-anchor="middle" stroke="#fff" stroke-width="0.25" transform="translate(885.5,350.5) rotate(-70)">20</text><text x="0.0" y="0.0" font-size="11" fill="#fff" font-weight="normal" text-anchor="middle" stroke="#fff" stroke-width="0.25" transform="translate(881.5,407.3) rotate(-108)">0</text><text x="0.0" y="0.0" font-size="11" fill="#fff" font-weight="normal" text-anchor="middle" stroke="#fff" stroke-width="0.25" transform="translate(1024.8,407.8) rotate(108)">100</text><text x="953.0" y="400.5" font-size="31" fill="#fff" font-weight="normal" text-anchor="middle" stroke="#fff" stroke-width="1.1" textLength="75.5" lengthAdjust="spacingAndGlyphs" >100%</text><path d="M1054,461 H1059 V455.5" fill="none" stroke="#fff" stroke-width="2" /><rect x="1074" y="212" width="217" height="76" rx="3" fill="rgba(0,0,0,0.27)" /><text x="1182.5" y="231.9" font-size="13.3" fill="#fff" font-weight="bold" text-anchor="middle" textLength="112.8" lengthAdjust="spacingAndGlyphs">Current UPS Load</text><path d="M1282,285 H1287 V279.5" fill="none" stroke="#fff" stroke-width="2" /><text x="1136.6" y="280.0" font-size="33" fill="#fff" font-weight="normal" text-anchor="start" stroke="#fff" stroke-width="1.0" textLength="92.3" lengthAdjust="spacingAndGlyphs" >147 W</text><rect x="1074" y="300" width="217" height="76" rx="3" fill="rgba(0,0,0,0.27)" /><text x="1182.5" y="319.9" font-size="13.3" fill="#fff" font-weight="bold" text-anchor="middle" textLength="117.5" lengthAdjust="spacingAndGlyphs">Average PSU Load</text><path d="M1282,373 H1287 V367.5" fill="none" stroke="#fff" stroke-width="2" /><text x="1136.6" y="368.0" font-size="33" fill="#fff" font-weight="normal" text-anchor="start" stroke="#fff" stroke-width="1.0" textLength="92.3" lengthAdjust="spacingAndGlyphs" >182 W</text><rect x="1074" y="388" width="369" height="76" rx="3" fill="rgba(0,0,0,0.27)" /><text x="1258.5" y="407.9" font-size="13.3" fill="#fff" font-weight="bold" text-anchor="middle" textLength="113.5" lengthAdjust="spacingAndGlyphs">Current Load kWh</text><path d="M1434,461 H1439 V455.5" fill="none" stroke="#fff" stroke-width="2" /><text x="1193.6" y="456.0" font-size="33" fill="#fff" font-weight="normal" text-anchor="start" stroke="#fff" stroke-width="1.0" textLength="130.5" lengthAdjust="spacingAndGlyphs" >147 kWh</text><rect x="1302" y="212" width="141" height="164" rx="3" fill="#299c46" /><text x="1372.3" y="231.9" font-size="13.3" fill="#fff" font-weight="bold" text-anchor="middle" textLength="83.4" lengthAdjust="spacingAndGlyphs">UPS Runtime</text><text x="1372.5" y="287.5" font-size="33" fill="#fff" font-weight="normal" text-anchor="middle" stroke="#fff" stroke-width="1.0" textLength="33" lengthAdjust="spacingAndGlyphs" >31</text><text x="1372.5" y="320.3" font-size="33" fill="#fff" font-weight="normal" text-anchor="middle" stroke="#fff" stroke-width="1.0" textLength="119.7" lengthAdjust="spacingAndGlyphs" >minutes</text><text x="1372.5" y="353.2" font-size="33" fill="#fff" font-weight="normal" text-anchor="middle" stroke="#fff" stroke-width="1.0" textLength="56.5" lengthAdjust="spacingAndGlyphs" >left!</text><path d="M1434,373 H1439 V367.5" fill="none" stroke="#fff" stroke-width="2" /><rect x="1454" y="212" width="218" height="76" rx="3" fill="rgba(0,0,0,0.27)" /><text x="1563.0" y="231.9" font-size="13.3" fill="#fff" font-weight="bold" text-anchor="middle" textLength="120.4" lengthAdjust="spacingAndGlyphs">Average Daily Cost</text><path d="M1663,285 H1668 V279.5" fill="none" stroke="#fff" stroke-width="2" /><text x="1505.4" y="280.0" font-size="33" fill="#299c46" font-weight="normal" text-anchor="start" stroke="#299c46" stroke-width="1.0" textLength="28" lengthAdjust="spacingAndGlyphs" >kr</text><text x="1555.8" y="280.0" font-size="33" fill="#299c46" font-weight="normal" text-anchor="start" stroke="#299c46" stroke-width="1.0" textLength="64.2" lengthAdjust="spacingAndGlyphs" >2.67</text><rect x="1454" y="300" width="218" height="76" rx="3" fill="rgba(0,0,0,0.27)" /><text x="1563.0" y="319.9" font-size="13.3" fill="#fff" font-weight="bold" text-anchor="middle" textLength="99.6" lengthAdjust="spacingAndGlyphs">This Years Cost</text><path d="M1663,373 H1668 V367.5" fill="none" stroke="#fff" stroke-width="2" /><text x="1485.9" y="368.0" font-size="33" fill="#d44a3a" font-weight="normal" text-anchor="start" stroke="#d44a3a" stroke-width="1.0" textLength="28" lengthAdjust="spacingAndGlyphs" >kr</text><text x="1537.6" y="368.0" font-size="33" fill="#d44a3a" font-weight="normal" text-anchor="start" stroke="#d44a3a" stroke-width="1.0" textLength="102.1" lengthAdjust="spacingAndGlyphs" >162.68</text><rect x="1454" y="388" width="218" height="76" rx="3" fill="rgba(0,0,0,0.27)" /><text x="1563.0" y="407.9" font-size="13.3" fill="#fff" font-weight="bold" text-anchor="middle" textLength="139.9" lengthAdjust="spacingAndGlyphs">Estimated Yearly Cost</text><path d="M1663,461 H1668 V455.5" fill="none" stroke="#fff" stroke-width="2" /><text x="1476.0" y="456.0" font-size="33" fill="#299c46" font-weight="normal" text-anchor="start" stroke="#299c46" stroke-width="1.0" textLength="28" lengthAdjust="spacingAndGlyphs" >kr</text><text x="1527.8" y="456.0" font-size="33" fill="#299c46" font-weight="normal" text-anchor="start" stroke="#299c46" stroke-width="1.0" textLength="120.2" lengthAdjust="spacingAndGlyphs" >1033.99</text><rect x="1683" y="212" width="218" height="252" rx="3" fill="rgba(0,0,0,0.27)" /><text x="1791.5" y="231.9" font-size="13.3" fill="#fff" font-weight="bold" text-anchor="middle" textLength="140.5" lengthAdjust="spacingAndGlyphs">UPS Load vs Time left</text><line x1="1733" y1="261" x2="1848.6" y2="261" stroke="rgba(255,255,255,0.16)" stroke-width="1" /><line x1="1733" y1="302.6" x2="1848.6" y2="302.6" stroke="rgba(255,255,255,0.16)" stroke-width="1" /><line x1="1733" y1="344.1" x2="1848.6" y2="344.1" stroke="rgba(255,255,255,0.16)" stroke-width="1" /><line x1="1733" y1="385.7" x2="1848.6" y2="385.7" stroke="rgba(255,255,255,0.16)" stroke-width="1" /><line x1="1733" y1="427.3" x2="1848.6" y2="427.3" stroke="rgba(255,255,255,0.16)" stroke-width="1" /><line x1="1769.4" y1="261" x2="1769.4" y2="427.3" stroke="rgba(255,255,255,0.16)" stroke-width="1" /><line x1="1806.9" y1="261" x2="1806.9" y2="427.3" stroke="rgba(255,255,255,0.16)" stroke-width="1" /><text x="1726.5" y="263.8" font-size="12" fill="#e6e7e8" font-weight="normal" text-anchor="end" letter-spacing="-0.25" stroke="#e6e7e8" stroke-width="0.3" textLength="33.5" lengthAdjust="spacingAndGlyphs" >200 W</text><text x="1726.5" y="305.4" font-size="12" fill="#e6e7e8" font-weight="normal" text-anchor="end" letter-spacing="-0.25" stroke="#e6e7e8" stroke-width="0.3" textLength="33.5" lengthAdjust="spacingAndGlyphs" >175 W</text><text x="1726.5" y="346.9" font-size="12" fill="#e6e7e8" font-weight="normal" text-anchor="end" letter-spacing="-0.25" stroke="#e6e7e8" stroke-width="0.3" textLength="33.5" lengthAdjust="spacingAndGlyphs" >150 W</text><text x="1726.5" y="388.5" font-size="12" fill="#e6e7e8" font-weight="normal" text-anchor="end" letter-spacing="-0.25" stroke="#e6e7e8" stroke-width="0.3" textLength="33.5" lengthAdjust="spacingAndGlyphs" >125 W</text><text x="1726.5" y="430.1" font-size="12" fill="#e6e7e8" font-weight="normal" text-anchor="end" letter-spacing="-0.25" stroke="#e6e7e8" stroke-width="0.3" textLength="33.5" lengthAdjust="spacingAndGlyphs" >100 W</text><text x="1854.0" y="263.8" font-size="12" fill="#e6e7e8" font-weight="normal" text-anchor="start" letter-spacing="-0.25" stroke="#e6e7e8" stroke-width="0.3" textLength="37" lengthAdjust="spacingAndGlyphs" >40 min</text><text x="1854.0" y="305.4" font-size="12" fill="#e6e7e8" font-weight="normal" text-anchor="start" letter-spacing="-0.25" stroke="#e6e7e8" stroke-width="0.3" textLength="37" lengthAdjust="spacingAndGlyphs" >35 min</text><text x="1854.0" y="346.9" font-size="12" fill="#e6e7e8" font-weight="normal" text-anchor="start" letter-spacing="-0.25" stroke="#e6e7e8" stroke-width="0.3" textLength="37" lengthAdjust="spacingAndGlyphs" >30 min</text><text x="1854.0" y="388.5" font-size="12" fill="#e6e7e8" font-weight="normal" text-anchor="start" letter-spacing="-0.25" stroke="#e6e7e8" stroke-width="0.3" textLength="37" lengthAdjust="spacingAndGlyphs" >25 min</text><text x="1854.0" y="430.1" font-size="12" fill="#e6e7e8" font-weight="normal" text-anchor="start" letter-spacing="-0.25" stroke="#e6e7e8" stroke-width="0.3" textLength="37" lengthAdjust="spacingAndGlyphs" >20 min</text><rect x="1756.8" y="348.6" width="26.0" height="78.69999999999999" rx="0" fill="#c15c17" /><rect x="1794" y="336.8" width="25.700000000000045" height="90.5" rx="0" fill="#299c46" /><text x="1769.4" y="444.8" font-size="12" fill="#e6e7e8" font-weight="normal" text-anchor="middle" stroke="#e6e7e8" stroke-width="0.3" >W</text><text x="1806.9" y="444.8" font-size="12" fill="#e6e7e8" font-weight="normal" text-anchor="middle" stroke="#e6e7e8" stroke-width="0.3" >T</text><path d="M1892,461 H1897 V455.5" fill="none" stroke="#fff" stroke-width="2" /><rect x="84" y="520" width="522" height="252" rx="3" fill="rgba(0,0,0,0.27)" /><text x="344.5" y="539.9" font-size="13.3" fill="#fff" font-weight="bold" text-anchor="middle" textLength="38.5" lengthAdjust="spacingAndGlyphs">CPU 1</text><text x="596.5" y="539.9" font-size="12.2" fill="#33b5e5" font-weight="bold" text-anchor="end" textLength="86.7" lengthAdjust="spacingAndGlyphs">Last 30 minutes</text><circle cx="501.2" cy="535.5" r="4.5" fill="none" stroke="#33b5e5" stroke-width="1.6"/><path d="M501.2,532.85 V535.8 H498.974" fill="none" stroke="#33b5e5" stroke-width="1.4" /><line x1="128.5" y1="569.3" x2="582.5" y2="569.3" stroke="rgba(255,255,255,0.16)" stroke-width="1" /><line x1="128.5" y1="619.6" x2="582.5" y2="619.6" stroke="rgba(255,255,255,0.16)" stroke-width="1" /><line x1="128.5" y1="669.8" x2="582.5" y2="669.8" stroke="rgba(255,255,255,0.16)" stroke-width="1" /><line x1="140.9" y1="569.3" x2="140.9" y2="669.8" stroke="rgba(255,255,255,0.16)" stroke-width="1" /><line x1="216.8" y1="569.3" x2="216.8" y2="669.8" stroke="rgba(255,255,255,0.16)" stroke-width="1" /><line x1="291.9" y1="569.3" x2="291.9" y2="669.8" stroke="rgba(255,255,255,0.16)" stroke-width="1" /><line x1="367.5" y1="569.3" x2="367.5" y2="669.8" stroke="rgba(255,255,255,0.16)" stroke-width="1" /><line x1="443.9" y1="569.3" x2="443.9" y2="669.8" stroke="rgba(255,255,255,0.16)" stroke-width="1" /><line x1="518.6" y1="569.3" x2="518.6" y2="669.8" stroke="rgba(255,255,255,0.16)" stroke-width="1" /><text x="121.9" y="572.3" font-size="12" fill="#e6e7e8" font-weight="normal" text-anchor="end" letter-spacing="-0.25" stroke="#e6e7e8" stroke-width="0.3" >100%</text><text x="121.9" y="622.6" font-size="12" fill="#e6e7e8" font-weight="normal" text-anchor="end" letter-spacing="-0.25" stroke="#e6e7e8" stroke-width="0.3" >50%</text><text x="121.9" y="672.8" font-size="12" fill="#e6e7e8" font-weight="normal" text-anchor="end" letter-spacing="-0.25" stroke="#e6e7e8" stroke-width="0.3" >0%</text><text x="140.9" y="687.0" font-size="12" fill="#e6e7e8" font-weight="normal" text-anchor="middle" letter-spacing="-0.25" stroke="#e6e7e8" stroke-width="0.3" textLength="29" lengthAdjust="spacingAndGlyphs" >19:50</text><text x="216.8" y="687.0" font-size="12" fill="#e6e7e8" font-weight="normal" text-anchor="middle" letter-spacing="-0.25" stroke="#e6e7e8" stroke-width="0.3" textLength="29" lengthAdjust="spacingAndGlyphs" >19:55</text><text x="291.9" y="687.0" font-size="12" fill="#e6e7e8" font-weight="normal" text-anchor="middle" letter-spacing="-0.25" stroke="#e6e7e8" stroke-width="0.3" textLength="29" lengthAdjust="spacingAndGlyphs" >20:00</text><text x="367.5" y="687.0" font-size="12" fill="#e6e7e8" font-weight="normal" text-anchor="middle" letter-spacing="-0.25" stroke="#e6e7e8" stroke-width="0.3" textLength="29" lengthAdjust="spacingAndGlyphs" >20:05</text><text x="443.9" y="687.0" font-size="12" fill="#e6e7e8" font-weight="normal" text-anchor="middle" letter-spacing="-0.25" stroke="#e6e7e8" stroke-width="0.3" textLength="29" lengthAdjust="spacingAndGlyphs" >20:10</text><text x="518.6" y="687.0" font-size="12" fill="#e6e7e8" font-weight="normal" text-anchor="middle" letter-spacing="-0.25" stroke="#e6e7e8" stroke-width="0.3" textLength="29" lengthAdjust="spacingAndGlyphs" >20:15</text><clipPath id="cc5"><rect x="131" y="560" width="449" height="110.5"/></clipPath><g clip-path="url(#cc5)"><path d="M131.0,662.7l3.3-1.7l3.3-0.6l3.3-0.1l3.3-1.1l3.3-2.6l3.3,0.9l3.3,2.6l3.3-2.1l3.3-0.9l3.3,2.4l3.3-0.9l3.3-0.4l3.3,0l3.3-3.3l3.3,0.6l3.3,2.8l3.3,5l3.3,2.8l3.3-0.1l3.3-2.3l3.3-2.5l3.3-3l3.3,1l3.3-1l3.3-4.4l3.3-9.2l3.3-1.6l3.3,2.8l3.3-4l3.3,2.9l3.3,8.6l3.3,2.7l3.3,2.2l3.3,0.2l3.4-11.4l3.3-9.9l3.3-2.9l3.3,13.1l3.3-6.4l3.3,9.9l3.3,2.6l3.3,6.1l3.3-5l3.3-9l3.3,0.2l3.3,1.6l3.3,1.1l3.3-4.8l3.3-5.6l3.3,7.7l3.3,6.2l3.3,8.2l3.3,0.7l3.3-1.4l3.3-4.2l3.3,2.3l3.3,3.3l3.3,0.8l3.3-0.7l3.3-1.3l3.3-2.6l3.3-6.2l3.3,1.3l3.3,6.3l3.3,3.1l3.3-2.3l3.3,0.3l3.3,3.9l3.3,1l3.3-3.6l3.3,1.4l3.3,0.1l3.3,0.1l3.3-4.1l3.3,1.1l3.3,0.5l3.3,1.3l3.3,0.6l3.3-0.3l3.3,0.1l3.3,2.1l3.3-0.9l3.3-6.7l3.3-0.4l3.3,0.8l3.3,4.3l3.3-0.7l3.3-1.7l3.3-3.8l3.3,3.1l3.3,1.8l3.3-5.7l3.3-9.2l3.3-4.9l3.3,8.6l3.3,5.3l3.3-0.2l3.3-2.6l3.3,0l3.3,2.5l3.3-0.7l3.4,7.5l3.3-2l3.3-3.6l3.3,2.4l3.3-2.2l3.3,0.1l3.3,3.6l3.3,0.3l3.3,2.5l3.3,1.9l3.3-0.6l3.3-0.8l3.3-0.8l3.3-6.6l3.3-2.5l3.3,2.9l3.3,3l3.3-5l3.3-3.6l3.3,0.7l3.3,6.6l3.3-4.7l3.3-6.4l3.3,2.7l3.3,1l3.3,0.1l3.3,7.2l3.3,2l3.3,0.7l3.3-5.2l3.3-9.5l3.3,0.2l3.3,12.4l3.3,3.2l3.3-0.2V670.5H131.0Z" fill="#623a62" stroke="none" stroke-width="1" fill-opacity="0.95"/><path d="M131.0,658.9l3.3-6.6l3.3-9.4l3.3,9.3l3.3-10.6l3.3,13.1l3.3-7.9l3.3,11.4l3.3-24.5l3.3,20.6l3.3-10.8l3.3,14.2l3.3-9.5l3.3,5.8l3.3-4.1l3.3,2.8l3.3-2.4l3.3,7.3l3.3,2.6l3.3,4.7l3.3-15.7l3.3,8l3.3-7.4l3.3,4.2l3.3-15.7l3.3,15.3l3.3-50.6l3.3,33.2l3.3-3.5l3.3-15.6l3.3,7.5l3.3,12.2l3.3,16.4l3.3-25.8l3.3,21.5l3.4-2.9l3.3-10.3l3.3-11.7l3.3,9.9l3.3-1.1l3.3,3.9l3.3,16.2l3.3-12.6l3.3,0.5l3.3-0.4l3.3-6.1l3.3,5.5l3.3,8.8l3.3-7.7l3.3-47.7l3.3,36.7l3.3-0.1l3.3,28.1l3.3,2.5l3.3-9.5l3.3-7.4l3.3,9.9l3.3,5.2l3.3-8.7l3.3,3.9l3.3-0.8l3.3-8.9l3.3-3.5l3.3,6.2l3.3,3.4l3.3,7.1l3.3-0.2l3.3-0.2l3.3,1.2l3.3,4.1l3.3-6l3.3,3.6l3.3,1.2l3.3-2.2l3.3-5.7l3.3,2.6l3.3-1.9l3.3,5.5l3.3-2.4l3.3-1.4l3.3,2.4l3.3,4.2l3.3-7.2l3.3-8.4l3.3-21l3.3,26.1l3.3,6l3.3-2.1l3.3-9l3.3,3.6l3.3,3.6l3.3-13.9l3.3-21.9l3.3,18.6l3.3-17.7l3.3,22.2l3.3,2.8l3.3-15.3l3.3,20.7l3.3,1.1l3.3-22.3l3.3,24.6l3.4,3.9l3.3-9.7l3.3,1.9l3.3,0.8l3.3,3.8l3.3-6.3l3.3,1l3.3,8.1l3.3-9.9l3.3-3.4l3.3,12.3l3.3,4.6l3.3-1.4l3.3-8.7l3.3-10.5l3.3,13.2l3.3-0.5l3.3-2.8l3.3-10.8l3.3-13.3l3.3,25.2l3.3-9.3l3.3,5.1l3.3-5.2l3.3-7.9l3.3-14.1l3.3,32.4l3.3,3.3l3.3-0.2l3.3-2.8l3.3-13.8l3.3,2.7l3.3,11l3.3,6.6l3.3-13V670.5H131.0Z" fill="#eab839" stroke="none" stroke-width="1" fill-opacity="0.05"/><path d="M131.0,658.7l3.3-15.1l3.3,13.5l3.3-1.9l3.3,0.9l3.3-1.7l3.3-2.5l3.3,7l3.3-2.2l3.3-7.3l3.3,8.3l3.3-14l3.3,10l3.3-9.3l3.3-1.6l3.3,4.2l3.3-6.6l3.3,17.6l3.3-6.9l3.3,13.6l3.3-6.2l3.3,1.1l3.3-18.7l3.3,4.1l3.3,7l3.3-9.3l3.3-11.9l3.3,12.2l3.3-2.3l3.3-9.6l3.3-22.3l3.3,41.5l3.3,2.6l3.3,2.9l3.3-0.3l3.4-11.6l3.3-28.4l3.3,17.1l3.3,7.1l3.3-30l3.3,18.7l3.3,24.6l3.3,1.9l3.3-40.8l3.3-1l3.3,22l3.3,12.3l3.3-6.7l3.3-0.1l3.3-6.4l3.3,8.9l3.3,6.7l3.3,9l3.3,0.1l3.3-2.1l3.3-6.4l3.3,3.3l3.3,2.2l3.3-12.1l3.3,14.6l3.3,1.2l3.3-11.9l3.3-0.3l3.3-1.5l3.3,9.4l3.3-5.4l3.3,1.7l3.3,6.6l3.3,4.9l3.3-0.7l3.3-5.6l3.3,0.2l3.3,5.4l3.3-1.8l3.3-12.8l3.3,11.6l3.3,0.6l3.3-4l3.3,5.1l3.3-0.3l3.3-10.1l3.3,9.2l3.3-2l3.3-17.6l3.3,3.8l3.3,13.8l3.3-3.4l3.3-0.4l3.3-0.8l3.3-16l3.3,19.3l3.3,2.9l3.3-9.8l3.3-36.2l3.3,26l3.3,3.1l3.3,9.7l3.3,1.1l3.3-11l3.3-0.8l3.3,9.9l3.3-2.5l3.4,8.1l3.3-6.4l3.3,0.8l3.3-2.5l3.3,5.7l3.3-0.5l3.3-3.3l3.3-1.7l3.3,12.5l3.3-2.1l3.3,2l3.3,1.1l3.3-3.5l3.3-4.9l3.3-5.1l3.3,1l3.3,1.3l3.3-4.3l3.3-12.4l3.3,1.5l3.3,12.3l3.3-6.3l3.3-5l3.3,5.6l3.3-20.4l3.3,14.1l3.3,17.7l3.3-2.1l3.3,3l3.3-6.5l3.3-28.7l3.3,13.8l3.3,23.1l3.3,3.2l3.3-1.4V670.5H131.0Z" fill="#7eb26d" stroke="none" stroke-width="1" fill-opacity="0.05"/><path d="M131.0,661.9l3.3-10.6l3.3,3.8l3.3-2.6l3.3,1l3.3-18.7l3.3,1.2l3.3,23.5l3.3-9.7l3.3,0.2l3.3,6l3.3-2.4l3.3-4.5l3.3,3l3.3-9l3.3,0.1l3.3-3.9l3.3,15.3l3.3,10.6l3.3-4.3l3.3-3.2l3.3-4.5l3.3-2.8l3.3-6.2l3.3,6.8l3.3-3.7l3.3-6.1l3.3-7.7l3.3-5.5l3.3-15.3l3.3,4.7l3.3,21.5l3.3,8.1l3.3,6.3l3.3-2.8l3.4-36.7l3.3,6.2l3.3-1.9l3.3-1l3.3-16.5l3.3,35.9l3.3,5.3l3.3,7.2l3.3-5l3.3-7.8l3.3,2.9l3.3-3.1l3.3,12l3.3-40.2l3.3,7.2l3.3,18.7l3.3,16.6l3.3,2.9l3.3,6l3.3-2.4l3.3-6.1l3.3-16l3.3,21l3.3,5.4l3.3-7.2l3.3-3.1l3.3-0.8l3.3-13.3l3.3,9.7l3.3,0.4l3.3,2.8l3.3,4.4l3.3,2.8l3.3,1.2l3.3-8.1l3.3,3.8l3.3,2.7l3.3,1.3l3.3,1.9l3.3-9.5l3.3,7l3.3-4.8l3.3-10.1l3.3,14.7l3.3-1.2l3.3-1.7l3.3,4.7l3.3-2.9l3.3-4.6l3.3-6.2l3.3-7.7l3.3,18.5l3.3,3.8l3.3-4l3.3-7.6l3.3-22.6l3.3,26.3l3.3-0.9l3.3-17.5l3.3-16.4l3.3,23.8l3.3-0.4l3.3,4l3.3,2.5l3.3-17.1l3.3,15.3l3.3,6.7l3.4,6.1l3.3-13l3.3,2.9l3.3,6.8l3.3-30.9l3.3,14.9l3.3,13.4l3.3-7.5l3.3,9.4l3.3-4.4l3.3,4.1l3.3-7.3l3.3,7.2l3.3-8.1l3.3-4.3l3.3-11.3l3.3,21.7l3.3-11.2l3.3-2l3.3-3.4l3.3,17.6l3.3-8.1l3.3-20.1l3.3,11.4l3.3,0.7l3.3-8.2l3.3,6l3.3,15.1l3.3-16.6l3.3,5.1l3.3,1.3l3.3-12.5l3.3,29.2l3.3,0.7l3.3-1.8V670.5H131.0Z" fill="#6ed0e0" stroke="none" stroke-width="1" fill-opacity="0.05"/><path d="M131.0,661.8l3.3-10.9l3.3-4.1l3.3,9.2l3.3-1.9l3.3-8.3l3.3,6.4l3.3,3.1l3.3-1.3l3.3-21.3l3.3,22l3.3-1.4l3.3,3.2l3.3-0.7l3.3-11.3l3.3,4l3.3-2l3.3,12.6l3.3,2.9l3.3-1.5l3.3,1.2l3.3-3.1l3.3-9.2l3.3,2.8l3.3,1.9l3.3-21l3.3-2.2l3.3,6.8l3.3-12.5l3.3,9.3l3.3-0.9l3.3,3.7l3.3,15.9l3.3-0.1l3.3-3.7l3.4-9.3l3.3-15.9l3.3,0.5l3.3-2.7l3.3-7.4l3.3,25.2l3.3,13.5l3.3,3.1l3.3-12.2l3.3-2.1l3.3-24.7l3.3,9.7l3.3,9.8l3.3-41.2l3.3-6.3l3.3,51.4l3.3,11.2l3.3,1.7l3.3-1.6l3.3,4.4l3.3-13.6l3.3,13.6l3.3,0.3l3.3-7.8l3.3,6.1l3.3-2.6l3.3,1l3.3-10.2l3.3-6.2l3.3,13.1l3.3,5.4l3.3-5.4l3.3,5.2l3.3,5.2l3.3-0.8l3.3-0.3l3.3-14.1l3.3,11.1l3.3,4.5l3.3-6.4l3.3-3.4l3.3,4.5l3.3-9l3.3,12.5l3.3,1.8l3.3-1.3l3.3-2l3.3-10.2l3.3-9.2l3.3-3.4l3.3,11.7l3.3-8l3.3,21.1l3.3-1.4l3.3-10.7l3.3,4.5l3.3-2.7l3.3,0.2l3.3-28.9l3.3,3.5l3.3,16.1l3.3-3.4l3.3,2.4l3.3,6.2l3.3-3.5l3.3,2.4l3.3,4.9l3.4,2.4l3.3,2.9l3.3-11l3.3,10.9l3.3-8.4l3.3,1l3.3-18.3l3.3,28.7l3.3,1.8l3.3,2.3l3.3-1.7l3.3-0.2l3.3-5l3.3-13l3.3,5.1l3.3-19.1l3.3,23.8l3.3-1.1l3.3-19.3l3.3,17.2l3.3,2.2l3.3-9.7l3.3-13.1l3.3,9.8l3.3-1.6l3.3,1.9l3.3,13.9l3.3,6.4l3.3-6.4l3.3-0.4l3.3-29.8l3.3,4.3l3.3,27.6l3.3,1.3l3.3,0.9V670.5H131.0Z" fill="#ef843c" stroke="none" stroke-width="1" fill-opacity="0.05"/><path d="M131.0,664.1l3.3-6.7l3.3,0.2l3.3,1.7l3.3-1.3l3.3-5.7l3.3-4.6l3.3,4.4l3.3,6.2l3.3-1.4l3.3,0.7l3.3-0.1l3.3,1.9l3.3-7.5l3.3-2l3.3-0l3.3-9.6l3.3,18.6l3.3,7.4l3.3-0.7l3.3-1.9l3.3-2.3l3.3-4.3l3.3-14.2l3.3,9.3l3.3,1.6l3.3-14.6l3.3,7.9l3.3-11.9l3.3-8.7l3.3,4.4l3.3,10.9l3.3,13.3l3.3,1l3.3-3.4l3.4-5.7l3.3-9.9l3.3-10l3.3,8.1l3.3-15.8l3.3,14.8l3.3,4l3.3-3.4l3.3,10.5l3.3,0.5l3.3-4.1l3.3,8.4l3.3-8.4l3.3-11.7l3.3-4.6l3.3,1l3.3,23.9l3.3,8.7l3.3-11.4l3.3,11.8l3.3-22.8l3.3,19.8l3.3,1.6l3.3,3.5l3.3,0.1l3.3-1.8l3.3-10.6l3.3,4.9l3.3-5.3l3.3,9.6l3.3-11l3.3,12.4l3.3,0.4l3.3-1.2l3.3,5.3l3.3-15.4l3.3,11l3.3-12.4l3.3,13.7l3.3-4.1l3.3,2.9l3.3-0.6l3.3-1.4l3.3,3.7l3.3-3.4l3.3,1.8l3.3,0.9l3.3-10.9l3.3-2.2l3.3,3.2l3.3-8.9l3.3,9.2l3.3,6.3l3.3-12.6l3.3,9.5l3.3,3.3l3.3,1.7l3.3-11.5l3.3-16.7l3.3,1.9l3.3,15l3.3,2.5l3.3,3.9l3.3-3.6l3.3-8.3l3.3,5.1l3.3-21.8l3.4,29.4l3.3-11.2l3.3,1.8l3.3,10l3.3-3.5l3.3-1.1l3.3,7.7l3.3-3.5l3.3,4.2l3.3,1l3.3-3l3.3,3.8l3.3-0.8l3.3-4.7l3.3-4.8l3.3,5.6l3.3-7.1l3.3,3.2l3.3-11.8l3.3-2.7l3.3,9.6l3.3-6l3.3-7.7l3.3,1.9l3.3,11.4l3.3-16.8l3.3,8.9l3.3,13.8l3.3,1.8l3.3-10.8l3.3-4l3.3-6.9l3.3,13.4l3.3,13.2l3.3-4V670.5H131.0Z" fill="#1f78c1" stroke="none" stroke-width="1" fill-opacity="0.05"/><path d="M131.0,657.9l3.3-1.6l3.3-0.3l3.3-4.6l3.3,0.8l3.3-2.7l3.3,8l3.3,0.1l3.3-10.3l3.3,3.8l3.3,5.3l3.3,1.1l3.3-8.3l3.3,1.1l3.3-3.2l3.3,5.7l3.3-1.7l3.3,10.6l3.3,2.4l3.3-1.7l3.3-1.8l3.3-7l3.3-0.2l3.3-2.5l3.3-8l3.3,1.6l3.3-5.5l3.3,2.1l3.3-19.5l3.3,11.6l3.3-33.1l3.3,37.9l3.3,17.6l3.3,0.3l3.3-4.8l3.4-16.1l3.3-3.9l3.3-14l3.3,8.8l3.3-5.5l3.3,26.7l3.3-2.6l3.3-61l3.3,60l3.3-10.8l3.3-3.9l3.3,3.5l3.3,4.4l3.3,1l3.3-6.1l3.3,3.3l3.3,5.3l3.3,9l3.3,8.4l3.3-2l3.3-29.5l3.3,24.1l3.3,5.1l3.3,5l3.3-4.9l3.3-7.2l3.3-14.3l3.3,2.1l3.3,2.6l3.3,10l3.3,7.6l3.3-4.8l3.3-2.2l3.3,9.6l3.3-14.4l3.3,13.2l3.3,1l3.3-3l3.3,3.4l3.3-3.4l3.3-3.4l3.3,2.5l3.3,4.3l3.3-2.7l3.3,2.7l3.3-5.4l3.3,7.3l3.3-4.9l3.3-4l3.3-22l3.3,25.2l3.3-1.5l3.3-0.2l3.3-24l3.3,10.1l3.3,3.3l3.3,8.3l3.3,0.9l3.3-22l3.3-45.7l3.3,50.7l3.3,14.3l3.3-4.7l3.3,2.2l3.3-4l3.3-7.5l3.3,2.1l3.4,11.6l3.3,0.6l3.3-6.4l3.3,2.7l3.3,6.1l3.3,0.6l3.3,0.2l3.3,2.3l3.3,4.1l3.3-6.5l3.3,0.9l3.3,6l3.3-0.4l3.3-19.1l3.3,9.6l3.3-6.5l3.3,10.2l3.3-2.6l3.3-9.3l3.3-9.8l3.3,15.9l3.3,0.7l3.3-22.2l3.3-0.9l3.3,0.3l3.3,6l3.3,9.2l3.3,16.3l3.3-4.8l3.3-24.3l3.3-4.9l3.3,11l3.3,18.6l3.3-0.8l3.3,2.5V670.5H131.0Z" fill="#e24d42" stroke="none" stroke-width="1" fill-opacity="0.05"/><path d="M131.0,655.8l3.3,2.1l3.3,0.5l3.3-0.5l3.3,2.7l3.3-18l3.3,12l3.3,5.7l3.3-7.1l3.3,4.6l3.3-11.2l3.3,14.1l3.3-2.5l3.3-0.4l3.3-2.7l3.3-2.6l3.3,0.6l3.3,8l3.3,4.2l3.3-1.3l3.3-0l3.3-13l3.3,7.4l3.3-7.9l3.3,7.8l3.3-7.2l3.3-12.4l3.3-4.3l3.3,7.6l3.3-0l3.3-4l3.3,16.1l3.3,3.8l3.3-0.6l3.3,1l3.4-19.9l3.3-1.8l3.3-2.4l3.3-10l3.3,16.7l3.3,5.9l3.3,2.4l3.3,9l3.3-4.2l3.3-44l3.3,33.9l3.3,1.9l3.3-8.6l3.3-1.4l3.3,9.1l3.3-2.6l3.3-7.9l3.3,26l3.3,0.4l3.3,1.3l3.3-10.5l3.3,2.1l3.3,6.4l3.3,1.1l3.3,0.8l3.3-4.7l3.3-3l3.3-5.1l3.3,2.7l3.3,3.8l3.3-0.5l3.3,3l3.3,0.5l3.3,4.4l3.3-0.8l3.3-1.5l3.3,1.5l3.3-1.9l3.3,2.5l3.3-4.9l3.3,1.3l3.3-0.9l3.3,3.6l3.3,1.7l3.3,0l3.3-0.8l3.3-2.3l3.3-1l3.3-3.2l3.3-9.7l3.3,6.8l3.3,5.7l3.3,0.1l3.3-0.9l3.3-5l3.3-6.9l3.3,6.7l3.3,0.6l3.3-32.2l3.3,14.9l3.3,8.8l3.3,2.6l3.3,3.2l3.3-9.5l3.3,5.2l3.3,8.3l3.3-3.4l3.4,5.7l3.3,1.8l3.3-8.2l3.3,6.6l3.3-7.6l3.3,6l3.3-11.4l3.3,12.3l3.3,4.3l3.3,1.9l3.3-0.6l3.3-0.8l3.3-28.5l3.3,22.5l3.3-0.3l3.3-5.3l3.3,3.4l3.3-3.3l3.3-13.4l3.3-4.5l3.3,21.9l3.3-7.5l3.3-16.8l3.3,18.1l3.3,1l3.3-6.1l3.3,13.4l3.3,2l3.3,0.7l3.3-4.6l3.3-10.1l3.3-2.1l3.3,17.7l3.3,0.6l3.3-17.7V670.5H131.0Z" fill="#cca300" stroke="none" stroke-width="1" fill-opacity="0.05"/><path d="M131.0,656.3l3.3-3.7l3.3-3.3l3.3,5.3l3.3-5.7l3.3,0l3.3,1.5l3.3,0.7l3.3-8.4l3.3,3.3l3.3,4.1l3.3-0.5l3.3-7l3.3,0l3.3,10.2l3.3-8l3.3,2.9l3.3,12.7l3.3,3.5l3.3-3.4l3.3-3.3l3.3,0.9l3.3-7.9l3.3,3l3.3-0.7l3.3-6.5l3.3-19.5l3.3,6.5l3.3,5.6l3.3-3.6l3.3-18.1l3.3,22.1l3.3,10l3.3,7.6l3.3-6.6l3.4-15l3.3-18.6l3.3,12.8l3.3-4.6l3.3,5.9l3.3,5.5l3.3,11.9l3.3,3.2l3.3-2.7l3.3-48.6l3.3,37.7l3.3-1l3.3,7.5l3.3-36.2l3.3,19.2l3.3,2l3.3,19l3.3,6.1l3.3,3l3.3-15.1l3.3-2.6l3.3,6.7l3.3-4.6l3.3,12.5l3.3,0.2l3.3-3.1l3.3-8.9l3.3-7.5l3.3-4.9l3.3,19.3l3.3,8.3l3.3-5.4l3.3-0.9l3.3,7.5l3.3,1.7l3.3-4.2l3.3-16.1l3.3,16.1l3.3-1.8l3.3,2.7l3.3-3.2l3.3-0.1l3.3,2.2l3.3,3.9l3.3-1.6l3.3-3.9l3.3,6.5l3.3-4.1l3.3-16.8l3.3,2.8l3.3,10.2l3.3-1.2l3.3,6.3l3.3-5.3l3.3-7.8l3.3,0l3.3,5.1l3.3-0.7l3.3-12l3.3-24.3l3.3,27.6l3.3-3.9l3.3,10.6l3.3,1.8l3.3-12.9l3.3,1.5l3.3,1.1l3.4,13l3.3-5.3l3.3-6.6l3.3,6.7l3.3-2.8l3.3-8.2l3.3-0.4l3.3,19.7l3.3-7.3l3.3,13.9l3.3-6.8l3.3,2.3l3.3-0.6l3.3-4.3l3.3-24l3.3,15.3l3.3,3.4l3.3,2.4l3.3-28.8l3.3,12l3.3,16.2l3.3-3.2l3.3-47.3l3.3,26.3l3.3,15.3l3.3-25.4l3.3,30.9l3.3,7.3l3.3-13.8l3.3-0.6l3.3-15.2l3.3,5.1l3.3,18.6l3.3,11.1l3.3-5.1V670.5H131.0Z" fill="#447ebc" stroke="none" stroke-width="1" fill-opacity="0.05"/><path d="M131.0,662.1l3.3-3.5l3.3,0.8l3.3-0.8l3.3-2.7l3.3-1.7l3.3,2.1l3.3,3.6l3.3-1.9l3.3-0.7l3.3-0.9l3.3-5.9l3.3,5l3.3-11.3l3.3,8.5l3.3,0.9l3.3,6.9l3.3-1.2l3.3,5l3.3,0.4l3.3-3.7l3.3-1.2l3.3-6.3l3.3,5.7l3.3-3.1l3.3-5.2l3.3-12.9l3.3-26.8l3.3,25.1l3.3,5.5l3.3,4.7l3.3,5.2l3.3-11.5l3.3,5.8l3.3-17.1l3.4,22.7l3.3-31.7l3.3-4.8l3.3,33.2l3.3-9.2l3.3,13.3l3.3-2.9l3.3,10.9l3.3-11.4l3.3-5l3.3-1.6l3.3,4.3l3.3,1.7l3.3-16.8l3.3,6.4l3.3,7.7l3.3,4.5l3.3,10.2l3.3-7.2l3.3,2.6l3.3-0.4l3.3,0.5l3.3,5.9l3.3,0.9l3.3-1.8l3.3-1.8l3.3-1.3l3.3-12.7l3.3,6.2l3.3,3.5l3.3,4.9l3.3-3.4l3.3,0.4l3.3-8.7l3.3,16.5l3.3-4.6l3.3,2.3l3.3-0.3l3.3-0.6l3.3-5.3l3.3-6.6l3.3,12.9l3.3-1.1l3.3-0.9l3.3,0.2l3.3-0.7l3.3,4.1l3.3-2.8l3.3-4.3l3.3-4.7l3.3,1.9l3.3,5.7l3.3,2.4l3.3-10.5l3.3-9.2l3.3,14.2l3.3,0.1l3.3-8.4l3.3-4.8l3.3-8.7l3.3,15.8l3.3-0.3l3.3,0.7l3.3-2.6l3.3,2.4l3.3-4.4l3.3,9.5l3.4,4.2l3.3-2l3.3-6.5l3.3,3.3l3.3-20.7l3.3,14.2l3.3,6l3.3,2.5l3.3,2.5l3.3,4.9l3.3-2.2l3.3,2.1l3.3-3.3l3.3-7.8l3.3-25.5l3.3,28.7l3.3,1.4l3.3-10l3.3,3.7l3.3-5.7l3.3,10.7l3.3-0.7l3.3-15.8l3.3-14.9l3.3,21.8l3.3-1.8l3.3,12.7l3.3-14.2l3.3,12.7l3.3-15.3l3.3-0.1l3.3,2l3.3,0.3l3.3,10.2l3.3,5V670.5H131.0Z" fill="#508642" stroke="none" stroke-width="1" fill-opacity="0.05"/><path d="M131.0,664.2l3.3-3.2l3.3-0.6l3.3,1.4l3.3-15.8l3.3,12.7l3.3-4.6l3.3-8.5l3.3,13l3.3-2.6l3.3,3.5l3.3-1.3l3.3-1.8l3.3,1.9l3.3-4.3l3.3,0.9l3.3,3.4l3.3,5l3.3,2.9l3.3-0.2l3.3-3.9l3.3-0.9l3.3-3.3l3.3-1.3l3.3-2.1l3.3-3.1l3.3-31.5l3.3,15.1l3.3,1.5l3.3-6l3.3-27.3l3.3,11.8l3.3,39.4l3.3,1.4l3.3-1.2l3.4-8l3.3-13.9l3.3-1.3l3.3,1.3l3.3,7l3.3,3.6l3.3,8.9l3.3,6l3.3-10.7l3.3-4.3l3.3,6.6l3.3-8.9l3.3,7.2l3.3-1.5l3.3-13.6l3.3,12.2l3.3,2.2l3.3,12.7l3.3-0.7l3.3-1.5l3.3-2.7l3.3,3.1l3.3-15.6l3.3,16.3l3.3-4.2l3.3-0.7l3.3-1.7l3.3-2.6l3.3-5.2l3.3,0.6l3.3,16.6l3.3-2.6l3.3-0.1l3.3,4.3l3.3,1.5l3.3-7.6l3.3,1.5l3.3,1.6l3.3-0.7l3.3-1.4l3.3,1.5l3.3,0.6l3.3-1.8l3.3-15.1l3.3,17.7l3.3,1.5l3.3-2l3.3,2.1l3.3-12.4l3.3,5.3l3.3-3.2l3.3,9.7l3.3-4l3.3-1.1l3.3-6.8l3.3,2.1l3.3,3.5l3.3-3.2l3.3-21.2l3.3,6.3l3.3,1.9l3.3,14.6l3.3,1.2l3.3-5.3l3.3-2.1l3.3-5.8l3.3,4.8l3.4,12.1l3.3-7.9l3.3-2.2l3.3,7.4l3.3-14.6l3.3,6.5l3.3,8.4l3.3-10.4l3.3,12.7l3.3-20.2l3.3,23.8l3.3-2.7l3.3-1.8l3.3-8.2l3.3-0.9l3.3,3.9l3.3,4.5l3.3-20.8l3.3,14.4l3.3,0l3.3,4.7l3.3-7.3l3.3-5.9l3.3,5.9l3.3-4.7l3.3-2.6l3.3,16.2l3.3-0.6l3.3-21.2l3.3,13.4l3.3-24.2l3.3,22.1l3.3-16.8l3.3,26.4l3.3,3.1V670.5H131.0Z" fill="#c15c17" stroke="none" stroke-width="1" fill-opacity="0.05"/><path d="M131.0,662.7l3.3-2.4l3.3-3.3l3.3,0.7l3.3-1.9l3.3,0.8l3.3-4.7l3.3,5.7l3.3-3.7l3.3-4.4l3.3,10.6l3.3-6.7l3.3-1.8l3.3,4.3l3.3-3.1l3.3,3.4l3.3-4.9l3.3,7.1l3.3,6l3.3-2.3l3.3-0.7l3.3-6.9l3.3-3l3.3-1.6l3.3,5.2l3.3-5.6l3.3-3.9l3.3-17.1l3.3,17.3l3.3-15.4l3.3,1.8l3.3,18.4l3.3,4.4l3.3,3.2l3.3,0.2l3.4-16.1l3.3-9.9l3.3-6.3l3.3,4l3.3-1.1l3.3,9.8l3.3,14.6l3.3,0.9l3.3-7.1l3.3-10.1l3.3,8.6l3.3-1l3.3-2.3l3.3-4.4l3.3-14.7l3.3,19.4l3.3,3.3l3.3,13.8l3.3-1.9l3.3-4.9l3.3-6.8l3.3,10.1l3.3,1.3l3.3-0.5l3.3,4.2l3.3-2l3.3-8.6l3.3-9.9l3.3,12.6l3.3-1.8l3.3,7l3.3-1.1l3.3,1.8l3.3,1.4l3.3,1.4l3.3-1.5l3.3-6.4l3.3,5l3.3,2.5l3.3-6.7l3.3,0.1l3.3-1.2l3.3,2.5l3.3,1.7l3.3,4.4l3.3-2.7l3.3,3.2l3.3-5.4l3.3-2.1l3.3-11.2l3.3,8.8l3.3,4.3l3.3-1.5l3.3-1.8l3.3-5.1l3.3,2.2l3.3,4.8l3.3-6.9l3.3-3.8l3.3-5.1l3.3-1.3l3.3,9.7l3.3,1.2l3.3-5.6l3.3,4.6l3.3-6.8l3.3,4l3.4,8l3.3,2l3.3-7.4l3.3,4.7l3.3-3.3l3.3,4.8l3.3,2.4l3.3,1.1l3.3-0.7l3.3,1.2l3.3,1l3.3-0.1l3.3-1.3l3.3-8.6l3.3,0.7l3.3,2.6l3.3-3.9l3.3-5.1l3.3,3.4l3.3,2.3l3.3-2.3l3.3,0.6l3.3-10.6l3.3,0.4l3.3,1.5l3.3-1l3.3,16.2l3.3-1.8l3.3,5.7l3.3-4.7l3.3-12.9l3.3-0.7l3.3,10.3l3.3,7.1l3.3-2V670.5H131.0Z" fill="#890f02" stroke="none" stroke-width="1" fill-opacity="0.05"/><path d="M131.0,664.5l3.3-3.5l3.3-0.3l3.3-0.4l3.3,0.4l3.3,0.8l3.3-3l3.3,1.8l3.3,0.9l3.3-5.7l3.3,8l3.3-3.6l3.3-1.2l3.3,1.4l3.3,0.7l3.3-1.9l3.3-0.6l3.3,5.5l3.3,2l3.3,0.9l3.3-3.1l3.3-1.3l3.3,0l3.3-1.3l3.3,1l3.3-3.2l3.3-5.6l3.3-12.1l3.3,8.8l3.3-9.9l3.3,6.5l3.3,7l3.3,6.9l3.3-1.9l3.3,2.3l3.4-16.4l3.3-6.7l3.3-0.2l3.3,13.5l3.3-9.8l3.3,9.6l3.3,5.3l3.3,3.4l3.3-3.2l3.3-10.8l3.3-2.4l3.3,2.6l3.3,10.2l3.3-11l3.3-3.9l3.3,12.8l3.3-1.9l3.3,7.3l3.3,5.7l3.3-2.9l3.3-6.2l3.3,1.6l3.3,3.4l3.3,3.3l3.3-3.3l3.3-1l3.3-0.9l3.3-2.2l3.3,1.3l3.3,4.4l3.3,0.8l3.3,0.1l3.3-0.9l3.3,2l3.3,1.4l3.3-2.2l3.3-1.1l3.3-0.8l3.3,1.6l3.3-3.5l3.3,0.3l3.3-1.2l3.3,2.5l3.3,0.4l3.3-0.3l3.3,0.1l3.3,1.1l3.3,0.7l3.3-7.3l3.3,0.5l3.3-0.2l3.3,6.8l3.3-3.1l3.3,2.4l3.3-4l3.3-2.2l3.3,4l3.3-2.2l3.3-6.4l3.3-12l3.3,14.3l3.3,0.5l3.3-1.5l3.3,2.4l3.3-0.8l3.3,1.7l3.3-3.9l3.4,7.9l3.3-2.7l3.3-0.5l3.3-0.2l3.3,1l3.3,1l3.3,1.4l3.3-1.1l3.3,2l3.3,2.3l3.3-1.6l3.3-0.2l3.3-0.6l3.3-8.4l3.3,4.1l3.3-2.3l3.3,2.6l3.3-2.2l3.3-5.8l3.3,6.6l3.3,5.2l3.3-2.2l3.3-14.1l3.3,5.7l3.3-1.3l3.3,4l3.3,0.8l3.3,5.1l3.3,2.6l3.3-7.5l3.3-3l3.3-6.5l3.3,16.4l3.3-1l3.3,2.3V670.5H131.0Z" fill="#0a437c" stroke="none" stroke-width="1" fill-opacity="0.05"/><path d="M131.0,662.6l3.3,0.5l3.3-2.6l3.3,2.3l3.3,0.1l3.3-5.5l3.3,0.8l3.3,1.9l3.3-2.7l3.3-0.3l3.3,5.7l3.3-4.2l3.3,2.2l3.3-2.6l3.3,3.3l3.3-2.7l3.3,0.5l3.3,4.9l3.3,2.6l3.3-0.5l3.3-0.4l3.3-5.1l3.3-0.1l3.3,1l3.3-1l3.3-5.7l3.3-10.4l3.3,4.4l3.3,4.5l3.3-10.7l3.3,1.9l3.3,9.5l3.3,1.8l3.3,5.9l3.3-2.8l3.4-3.4l3.3-7l3.3-0.3l3.3,1.9l3.3,1.9l3.3,4.5l3.3-2.7l3.3,5.7l3.3-3.3l3.3-5.9l3.3,1.6l3.3-4.8l3.3,3l3.3-3.3l3.3,4.6l3.3,4.7l3.3,3.3l3.3,0.1l3.3,5.7l3.3-3.9l3.3-4.1l3.3,3.4l3.3,3.2l3.3-2.4l3.3-1.1l3.3-1.4l3.3-1.1l3.3-7.2l3.3,2.3l3.3,8.3l3.3,3.2l3.3-1.2l3.3-0.2l3.3,1.1l3.3,0.1l3.3-0.6l3.3-0.2l3.3,0.8l3.3-1l3.3-4.8l3.3-0.1l3.3,1.4l3.3,4.1l3.3-1.6l3.3,1.8l3.3-1.7l3.3,1.6l3.3-0.1l3.3-7l3.3,0.6l3.3,0l3.3,5.9l3.3-2.2l3.3,1.6l3.3-1.7l3.3-2.4l3.3,0.1l3.3-3.8l3.3-4.5l3.3-4.9l3.3,7.4l3.3,0.5l3.3,4.3l3.3,0.5l3.3-8l3.3,7.5l3.3,1.4l3.4,2.8l3.3-2l3.3-3.9l3.3,2.5l3.3,1.2l3.3-5.8l3.3,4.3l3.3,4.2l3.3,1.8l3.3,0.8l3.3-2.5l3.3,0.4l3.3-2.1l3.3-2.2l3.3-7l3.3,2.9l3.3,4.5l3.3-0.2l3.3-4.6l3.3-3.9l3.3,10.3l3.3-7l3.3-6.5l3.3,8l3.3-0.7l3.3,0.9l3.3,2.1l3.3,1l3.3,0.9l3.3-2.9l3.3-2.5l3.3-4.3l3.3,11.2l3.3,2.1l3.3-2.5V670.5H131.0Z" fill="#584477" stroke="none" stroke-width="1" fill-opacity="0.2"/><path d="M131.0,662.2l3.3-17.9l3.3,7.8l3.3,6.9l3.3-3.5l3.3-2.5l3.3-0.9l3.3,6.7l3.3-17.6l3.3,9.5l3.3,5.7l3.3-0.1l3.3-4.3l3.3,2.6l3.3-21.2l3.3,22.1l3.3-2l3.3,8.7l3.3-0.3l3.3,3.4l3.3-3.9l3.3-7.1l3.3,3.8l3.3-0l3.3-10.8l3.3-14.2l3.3,0.5l3.3-28.4l3.3,33.7l3.3-11.7l3.3,17.5l3.3,8.6l3.3,3.5l3.3,1l3.3-4.6l3.4-7l3.3-5.2l3.3-13.3l3.3-7.3l3.3,13.2l3.3,4.9l3.3,13.8l3.3-13.6l3.3,17l3.3-13.2l3.3-3.7l3.3,1.3l3.3,0.8l3.3,2.7l3.3-13.2l3.3,14.1l3.3-2l3.3,15l3.3,0.4l3.3-3.6l3.3-2.4l3.3,7.6l3.3-1.4l3.3-16.8l3.3,18.3l3.3-1l3.3-9.9l3.3-0.8l3.3-2.2l3.3-4.4l3.3,3.7l3.3,6.5l3.3,2.1l3.3,7.7l3.3-8l3.3-8.8l3.3,11.3l3.3,6.5l3.3-0.5l3.3-5.6l3.3-0.1l3.3-1.5l3.3,6.4l3.3-18.8l3.3,16.5l3.3-12.9l3.3,17.9l3.3-5.8l3.3-2.1l3.3-20l3.3,22.2l3.3-2.4l3.3,4.2l3.3-3.3l3.3-6.2l3.3,7.4l3.3-21l3.3,16.1l3.3-26.5l3.3,4.8l3.3,6.6l3.3,7.7l3.3,1.6l3.3-16.2l3.3,21.5l3.3-12.1l3.3,4.1l3.4,10.2l3.3,1.9l3.3-0.9l3.3-20.2l3.3,2.7l3.3,14.3l3.3,3.1l3.3,3.3l3.3-1.6l3.3,4.2l3.3-1.4l3.3,0.1l3.3,0.9l3.3-36.2l3.3,25.4l3.3-0.2l3.3,8.3l3.3-14.2l3.3-8.5l3.3,7.2l3.3,6.8l3.3-3.6l3.3-0.6l3.3-6.2l3.3,1.2l3.3,8.8l3.3,5.5l3.3,1.1l3.3,4.5l3.3-30.5l3.3-12.8l3.3,25.8l3.3-2.7l3.3,15.8l3.3,4.1V670.5H131.0Z" fill="#705da0" stroke="none" stroke-width="1" fill-opacity="0.2"/><path d="M131.0,662.7l3.3,0.4l3.3-1.1l3.3,0.8l3.3-3.6l3.3-2.9l3.3,3.9l3.3,2.2l3.3-7.4l3.3,5.4l3.3-1.3l3.3,2.6l3.3-5l3.3,3.4l3.3-5.2l3.3-0.8l3.3,6l3.3,4.8l3.3,1.2l3.3,0.8l3.3-3.2l3.3-1.6l3.3-3.9l3.3,3.2l3.3-3.2l3.3-0.5l3.3-12.1l3.3-1.8l3.3,8.2l3.3-6l3.3-4.2l3.3,9.6l3.3,4.4l3.3,7.5l3.3-3.9l3.4-8.3l3.3-15.7l3.3,7.1l3.3,4.8l3.3,4.2l3.3,1l3.3,5.3l3.3,4.8l3.3-8.1l3.3-8.8l3.3,4l3.3,1.2l3.3-3.1l3.3-9.6l3.3-1.8l3.3,10.5l3.3,10.9l3.3,3.4l3.3,2.7l3.3-4.8l3.3-4.4l3.3,2.8l3.3,6.8l3.3-0.1l3.3-4.4l3.3,1.2l3.3-4l3.3-2.3l3.3-2.6l3.3,10.3l3.3-0.9l3.3-2.4l3.3,0.4l3.3,4.7l3.3-0.3l3.3-0.5l3.3-3.7l3.3,2.6l3.3,0.1l3.3-3.6l3.3,0.2l3.3,0.7l3.3,1.2l3.3,1.4l3.3-1.1l3.3,0.4l3.3,3.8l3.3-1.5l3.3-10.5l3.3,5.1l3.3-2l3.3,4.3l3.3,3.1l3.3-5.1l3.3-3.4l3.3,4.4l3.3,1.6l3.3-7.4l3.3-9.4l3.3-1.2l3.3,2.9l3.3,9.6l3.3-3.5l3.3-1.6l3.3-0l3.3,2.5l3.3,4.5l3.4,2.8l3.3-1.5l3.3-4.6l3.3,6.5l3.3-2.7l3.3,1l3.3,2.2l3.3,0l3.3,1l3.3-0.3l3.3,0.8l3.3-1.3l3.3,0l3.3-9.2l3.3,3.2l3.3,2.7l3.3,2.4l3.3-8.1l3.3-4l3.3-1.6l3.3,9.9l3.3-5.3l3.3,1.3l3.3-9.6l3.3,11.3l3.3,0.6l3.3-2.7l3.3,10l3.3-4.5l3.3-7.5l3.3,2l3.3-2.4l3.3,6.2l3.3,3l3.3,2.6V670.5H131.0Z" fill="#6d1f62" stroke="none" stroke-width="1" fill-opacity="0.2"/><path d="M131.0,659.6l3.3-1.4l3.3-1.6l3.3-9.6l3.3,8.7l3.3,0l3.3-0.8l3.3-1l3.3-5l3.3,1.6l3.3,0.3l3.3,6.3l3.3-3.6l3.3-11.7l3.3,0.8l3.3,2.1l3.3-0.1l3.3,11.7l3.3,5.4l3.3-1.4l3.3-3.3l3.3-4.5l3.3,2.7l3.3-0.4l3.3-7.1l3.3-6.5l3.3-14.8l3.3-6l3.3,12.4l3.3-17.1l3.3,13.4l3.3-3.6l3.3,28.2l3.3,3.5l3.3-32l3.4-22.2l3.3,17.9l3.3-10.6l3.3,7.9l3.3,5.9l3.3,9.5l3.3,16.1l3.3,5.5l3.3-13.3l3.3-12.5l3.3,0.5l3.3-10.2l3.3,21.7l3.3-20.3l3.3,10l3.3,1.7l3.3-14.9l3.3,26.6l3.3,12.6l3.3,0.8l3.3-21.4l3.3,17.6l3.3-0l3.3,1.5l3.3-12.5l3.3,9.3l3.3-8.8l3.3-1.5l3.3-11.3l3.3,16.2l3.3,10.9l3.3-3.9l3.3,1.4l3.3-7.8l3.3,12.4l3.3-2.7l3.3-4.4l3.3,3.7l3.3-2.9l3.3-17.9l3.3,11.7l3.3,6.7l3.3-0l3.3,7.3l3.3-7.3l3.3-7.8l3.3,13l3.3-1.8l3.3-16.1l3.3,5.6l3.3,8.4l3.3,4.1l3.3-2.6l3.3-21.3l3.3,12.8l3.3-3.1l3.3-3.3l3.3,8.5l3.3-21.9l3.3-30.7l3.3,30l3.3,6.3l3.3,9.8l3.3-3.8l3.3-3.2l3.3-4.3l3.3,7.6l3.4,0.2l3.3,2.2l3.3-3.9l3.3-14.1l3.3,22.4l3.3,0.8l3.3-1.4l3.3,10.8l3.3-2.4l3.3-0.2l3.3-1.5l3.3,4.5l3.3-20.3l3.3,8.6l3.3-3.8l3.3,3.3l3.3,8.1l3.3-13.7l3.3-12.3l3.3,13.4l3.3,0.4l3.3-6.2l3.3-5.3l3.3,12.1l3.3-17.4l3.3,22.3l3.3-2.5l3.3,12.1l3.3-4.1l3.3-26.3l3.3-2.3l3.3,18.1l3.3-5.9l3.3,16.4l3.3,2.8V670.5H131.0Z" fill="#ba43a9" stroke="none" stroke-width="1" fill-opacity="0.2"/><path d="M131.0,658.9l3.3-6.6l3.3-9.4l3.3,9.3l3.3-10.6l3.3,13.1l3.3-7.9l3.3,11.4l3.3-24.5l3.3,20.6l3.3-10.8l3.3,14.2l3.3-9.5l3.3,5.8l3.3-4.1l3.3,2.8l3.3-2.4l3.3,7.3l3.3,2.6l3.3,4.7l3.3-15.7l3.3,8l3.3-7.4l3.3,4.2l3.3-15.7l3.3,15.3l3.3-50.6l3.3,33.2l3.3-3.5l3.3-15.6l3.3,7.5l3.3,12.2l3.3,16.4l3.3-25.8l3.3,21.5l3.4-2.9l3.3-10.3l3.3-11.7l3.3,9.9l3.3-1.1l3.3,3.9l3.3,16.2l3.3-12.6l3.3,0.5l3.3-0.4l3.3-6.1l3.3,5.5l3.3,8.8l3.3-7.7l3.3-47.7l3.3,36.7l3.3-0.1l3.3,28.1l3.3,2.5l3.3-9.5l3.3-7.4l3.3,9.9l3.3,5.2l3.3-8.7l3.3,3.9l3.3-0.8l3.3-8.9l3.3-3.5l3.3,6.2l3.3,3.4l3.3,7.1l3.3-0.2l3.3-0.2l3.3,1.2l3.3,4.1l3.3-6l3.3,3.6l3.3,1.2l3.3-2.2l3.3-5.7l3.3,2.6l3.3-1.9l3.3,5.5l3.3-2.4l3.3-1.4l3.3,2.4l3.3,4.2l3.3-7.2l3.3-8.4l3.3-21l3.3,26.1l3.3,6l3.3-2.1l3.3-9l3.3,3.6l3.3,3.6l3.3-13.9l3.3-21.9l3.3,18.6l3.3-17.7l3.3,22.2l3.3,2.8l3.3-15.3l3.3,20.7l3.3,1.1l3.3-22.3l3.3,24.6l3.4,3.9l3.3-9.7l3.3,1.9l3.3,0.8l3.3,3.8l3.3-6.3l3.3,1l3.3,8.1l3.3-9.9l3.3-3.4l3.3,12.3l3.3,4.6l3.3-1.4l3.3-8.7l3.3-10.5l3.3,13.2l3.3-0.5l3.3-2.8l3.3-10.8l3.3-13.3l3.3,25.2l3.3-9.3l3.3,5.1l3.3-5.2l3.3-7.9l3.3-14.1l3.3,32.4l3.3,3.3l3.3-0.2l3.3-2.8l3.3-13.8l3.3,2.7l3.3,11l3.3,6.6l3.3-13" fill="none" stroke="#eab839" stroke-width="1.2" stroke-linejoin="round" stroke-opacity="0.9"/><path d="M131.0,658.7l3.3-15.1l3.3,13.5l3.3-1.9l3.3,0.9l3.3-1.7l3.3-2.5l3.3,7l3.3-2.2l3.3-7.3l3.3,8.3l3.3-14l3.3,10l3.3-9.3l3.3-1.6l3.3,4.2l3.3-6.6l3.3,17.6l3.3-6.9l3.3,13.6l3.3-6.2l3.3,1.1l3.3-18.7l3.3,4.1l3.3,7l3.3-9.3l3.3-11.9l3.3,12.2l3.3-2.3l3.3-9.6l3.3-22.3l3.3,41.5l3.3,2.6l3.3,2.9l3.3-0.3l3.4-11.6l3.3-28.4l3.3,17.1l3.3,7.1l3.3-30l3.3,18.7l3.3,24.6l3.3,1.9l3.3-40.8l3.3-1l3.3,22l3.3,12.3l3.3-6.7l3.3-0.1l3.3-6.4l3.3,8.9l3.3,6.7l3.3,9l3.3,0.1l3.3-2.1l3.3-6.4l3.3,3.3l3.3,2.2l3.3-12.1l3.3,14.6l3.3,1.2l3.3-11.9l3.3-0.3l3.3-1.5l3.3,9.4l3.3-5.4l3.3,1.7l3.3,6.6l3.3,4.9l3.3-0.7l3.3-5.6l3.3,0.2l3.3,5.4l3.3-1.8l3.3-12.8l3.3,11.6l3.3,0.6l3.3-4l3.3,5.1l3.3-0.3l3.3-10.1l3.3,9.2l3.3-2l3.3-17.6l3.3,3.8l3.3,13.8l3.3-3.4l3.3-0.4l3.3-0.8l3.3-16l3.3,19.3l3.3,2.9l3.3-9.8l3.3-36.2l3.3,26l3.3,3.1l3.3,9.7l3.3,1.1l3.3-11l3.3-0.8l3.3,9.9l3.3-2.5l3.4,8.1l3.3-6.4l3.3,0.8l3.3-2.5l3.3,5.7l3.3-0.5l3.3-3.3l3.3-1.7l3.3,12.5l3.3-2.1l3.3,2l3.3,1.1l3.3-3.5l3.3-4.9l3.3-5.1l3.3,1l3.3,1.3l3.3-4.3l3.3-12.4l3.3,1.5l3.3,12.3l3.3-6.3l3.3-5l3.3,5.6l3.3-20.4l3.3,14.1l3.3,17.7l3.3-2.1l3.3,3l3.3-6.5l3.3-28.7l3.3,13.8l3.3,23.1l3.3,3.2l3.3-1.4" fill="none" stroke="#7eb26d" stroke-width="1.2" stroke-linejoin="round" stroke-opacity="0.9"/><path d="M131.0,661.9l3.3-10.6l3.3,3.8l3.3-2.6l3.3,1l3.3-18.7l3.3,1.2l3.3,23.5l3.3-9.7l3.3,0.2l3.3,6l3.3-2.4l3.3-4.5l3.3,3l3.3-9l3.3,0.1l3.3-3.9l3.3,15.3l3.3,10.6l3.3-4.3l3.3-3.2l3.3-4.5l3.3-2.8l3.3-6.2l3.3,6.8l3.3-3.7l3.3-6.1l3.3-7.7l3.3-5.5l3.3-15.3l3.3,4.7l3.3,21.5l3.3,8.1l3.3,6.3l3.3-2.8l3.4-36.7l3.3,6.2l3.3-1.9l3.3-1l3.3-16.5l3.3,35.9l3.3,5.3l3.3,7.2l3.3-5l3.3-7.8l3.3,2.9l3.3-3.1l3.3,12l3.3-40.2l3.3,7.2l3.3,18.7l3.3,16.6l3.3,2.9l3.3,6l3.3-2.4l3.3-6.1l3.3-16l3.3,21l3.3,5.4l3.3-7.2l3.3-3.1l3.3-0.8l3.3-13.3l3.3,9.7l3.3,0.4l3.3,2.8l3.3,4.4l3.3,2.8l3.3,1.2l3.3-8.1l3.3,3.8l3.3,2.7l3.3,1.3l3.3,1.9l3.3-9.5l3.3,7l3.3-4.8l3.3-10.1l3.3,14.7l3.3-1.2l3.3-1.7l3.3,4.7l3.3-2.9l3.3-4.6l3.3-6.2l3.3-7.7l3.3,18.5l3.3,3.8l3.3-4l3.3-7.6l3.3-22.6l3.3,26.3l3.3-0.9l3.3-17.5l3.3-16.4l3.3,23.8l3.3-0.4l3.3,4l3.3,2.5l3.3-17.1l3.3,15.3l3.3,6.7l3.4,6.1l3.3-13l3.3,2.9l3.3,6.8l3.3-30.9l3.3,14.9l3.3,13.4l3.3-7.5l3.3,9.4l3.3-4.4l3.3,4.1l3.3-7.3l3.3,7.2l3.3-8.1l3.3-4.3l3.3-11.3l3.3,21.7l3.3-11.2l3.3-2l3.3-3.4l3.3,17.6l3.3-8.1l3.3-20.1l3.3,11.4l3.3,0.7l3.3-8.2l3.3,6l3.3,15.1l3.3-16.6l3.3,5.1l3.3,1.3l3.3-12.5l3.3,29.2l3.3,0.7l3.3-1.8" fill="none" stroke="#6ed0e0" stroke-width="1.2" stroke-linejoin="round" stroke-opacity="0.9"/><path d="M131.0,661.8l3.3-10.9l3.3-4.1l3.3,9.2l3.3-1.9l3.3-8.3l3.3,6.4l3.3,3.1l3.3-1.3l3.3-21.3l3.3,22l3.3-1.4l3.3,3.2l3.3-0.7l3.3-11.3l3.3,4l3.3-2l3.3,12.6l3.3,2.9l3.3-1.5l3.3,1.2l3.3-3.1l3.3-9.2l3.3,2.8l3.3,1.9l3.3-21l3.3-2.2l3.3,6.8l3.3-12.5l3.3,9.3l3.3-0.9l3.3,3.7l3.3,15.9l3.3-0.1l3.3-3.7l3.4-9.3l3.3-15.9l3.3,0.5l3.3-2.7l3.3-7.4l3.3,25.2l3.3,13.5l3.3,3.1l3.3-12.2l3.3-2.1l3.3-24.7l3.3,9.7l3.3,9.8l3.3-41.2l3.3-6.3l3.3,51.4l3.3,11.2l3.3,1.7l3.3-1.6l3.3,4.4l3.3-13.6l3.3,13.6l3.3,0.3l3.3-7.8l3.3,6.1l3.3-2.6l3.3,1l3.3-10.2l3.3-6.2l3.3,13.1l3.3,5.4l3.3-5.4l3.3,5.2l3.3,5.2l3.3-0.8l3.3-0.3l3.3-14.1l3.3,11.1l3.3,4.5l3.3-6.4l3.3-3.4l3.3,4.5l3.3-9l3.3,12.5l3.3,1.8l3.3-1.3l3.3-2l3.3-10.2l3.3-9.2l3.3-3.4l3.3,11.7l3.3-8l3.3,21.1l3.3-1.4l3.3-10.7l3.3,4.5l3.3-2.7l3.3,0.2l3.3-28.9l3.3,3.5l3.3,16.1l3.3-3.4l3.3,2.4l3.3,6.2l3.3-3.5l3.3,2.4l3.3,4.9l3.4,2.4l3.3,2.9l3.3-11l3.3,10.9l3.3-8.4l3.3,1l3.3-18.3l3.3,28.7l3.3,1.8l3.3,2.3l3.3-1.7l3.3-0.2l3.3-5l3.3-13l3.3,5.1l3.3-19.1l3.3,23.8l3.3-1.1l3.3-19.3l3.3,17.2l3.3,2.2l3.3-9.7l3.3-13.1l3.3,9.8l3.3-1.6l3.3,1.9l3.3,13.9l3.3,6.4l3.3-6.4l3.3-0.4l3.3-29.8l3.3,4.3l3.3,27.6l3.3,1.3l3.3,0.9" fill="none" stroke="#ef843c" stroke-width="1.2" stroke-linejoin="round" stroke-opacity="0.9"/><path d="M131.0,664.1l3.3-6.7l3.3,0.2l3.3,1.7l3.3-1.3l3.3-5.7l3.3-4.6l3.3,4.4l3.3,6.2l3.3-1.4l3.3,0.7l3.3-0.1l3.3,1.9l3.3-7.5l3.3-2l3.3-0l3.3-9.6l3.3,18.6l3.3,7.4l3.3-0.7l3.3-1.9l3.3-2.3l3.3-4.3l3.3-14.2l3.3,9.3l3.3,1.6l3.3-14.6l3.3,7.9l3.3-11.9l3.3-8.7l3.3,4.4l3.3,10.9l3.3,13.3l3.3,1l3.3-3.4l3.4-5.7l3.3-9.9l3.3-10l3.3,8.1l3.3-15.8l3.3,14.8l3.3,4l3.3-3.4l3.3,10.5l3.3,0.5l3.3-4.1l3.3,8.4l3.3-8.4l3.3-11.7l3.3-4.6l3.3,1l3.3,23.9l3.3,8.7l3.3-11.4l3.3,11.8l3.3-22.8l3.3,19.8l3.3,1.6l3.3,3.5l3.3,0.1l3.3-1.8l3.3-10.6l3.3,4.9l3.3-5.3l3.3,9.6l3.3-11l3.3,12.4l3.3,0.4l3.3-1.2l3.3,5.3l3.3-15.4l3.3,11l3.3-12.4l3.3,13.7l3.3-4.1l3.3,2.9l3.3-0.6l3.3-1.4l3.3,3.7l3.3-3.4l3.3,1.8l3.3,0.9l3.3-10.9l3.3-2.2l3.3,3.2l3.3-8.9l3.3,9.2l3.3,6.3l3.3-12.6l3.3,9.5l3.3,3.3l3.3,1.7l3.3-11.5l3.3-16.7l3.3,1.9l3.3,15l3.3,2.5l3.3,3.9l3.3-3.6l3.3-8.3l3.3,5.1l3.3-21.8l3.4,29.4l3.3-11.2l3.3,1.8l3.3,10l3.3-3.5l3.3-1.1l3.3,7.7l3.3-3.5l3.3,4.2l3.3,1l3.3-3l3.3,3.8l3.3-0.8l3.3-4.7l3.3-4.8l3.3,5.6l3.3-7.1l3.3,3.2l3.3-11.8l3.3-2.7l3.3,9.6l3.3-6l3.3-7.7l3.3,1.9l3.3,11.4l3.3-16.8l3.3,8.9l3.3,13.8l3.3,1.8l3.3-10.8l3.3-4l3.3-6.9l3.3,13.4l3.3,13.2l3.3-4" fill="none" stroke="#1f78c1" stroke-width="1.2" stroke-linejoin="round" stroke-opacity="0.9"/><path d="M131.0,657.9l3.3-1.6l3.3-0.3l3.3-4.6l3.3,0.8l3.3-2.7l3.3,8l3.3,0.1l3.3-10.3l3.3,3.8l3.3,5.3l3.3,1.1l3.3-8.3l3.3,1.1l3.3-3.2l3.3,5.7l3.3-1.7l3.3,10.6l3.3,2.4l3.3-1.7l3.3-1.8l3.3-7l3.3-0.2l3.3-2.5l3.3-8l3.3,1.6l3.3-5.5l3.3,2.1l3.3-19.5l3.3,11.6l3.3-33.1l3.3,37.9l3.3,17.6l3.3,0.3l3.3-4.8l3.4-16.1l3.3-3.9l3.3-14l3.3,8.8l3.3-5.5l3.3,26.7l3.3-2.6l3.3-61l3.3,60l3.3-10.8l3.3-3.9l3.3,3.5l3.3,4.4l3.3,1l3.3-6.1l3.3,3.3l3.3,5.3l3.3,9l3.3,8.4l3.3-2l3.3-29.5l3.3,24.1l3.3,5.1l3.3,5l3.3-4.9l3.3-7.2l3.3-14.3l3.3,2.1l3.3,2.6l3.3,10l3.3,7.6l3.3-4.8l3.3-2.2l3.3,9.6l3.3-14.4l3.3,13.2l3.3,1l3.3-3l3.3,3.4l3.3-3.4l3.3-3.4l3.3,2.5l3.3,4.3l3.3-2.7l3.3,2.7l3.3-5.4l3.3,7.3l3.3-4.9l3.3-4l3.3-22l3.3,25.2l3.3-1.5l3.3-0.2l3.3-24l3.3,10.1l3.3,3.3l3.3,8.3l3.3,0.9l3.3-22l3.3-45.7l3.3,50.7l3.3,14.3l3.3-4.7l3.3,2.2l3.3-4l3.3-7.5l3.3,2.1l3.4,11.6l3.3,0.6l3.3-6.4l3.3,2.7l3.3,6.1l3.3,0.6l3.3,0.2l3.3,2.3l3.3,4.1l3.3-6.5l3.3,0.9l3.3,6l3.3-0.4l3.3-19.1l3.3,9.6l3.3-6.5l3.3,10.2l3.3-2.6l3.3-9.3l3.3-9.8l3.3,15.9l3.3,0.7l3.3-22.2l3.3-0.9l3.3,0.3l3.3,6l3.3,9.2l3.3,16.3l3.3-4.8l3.3-24.3l3.3-4.9l3.3,11l3.3,18.6l3.3-0.8l3.3,2.5" fill="none" stroke="#e24d42" stroke-width="1.2" stroke-linejoin="round" stroke-opacity="0.9"/><path d="M131.0,655.8l3.3,2.1l3.3,0.5l3.3-0.5l3.3,2.7l3.3-18l3.3,12l3.3,5.7l3.3-7.1l3.3,4.6l3.3-11.2l3.3,14.1l3.3-2.5l3.3-0.4l3.3-2.7l3.3-2.6l3.3,0.6l3.3,8l3.3,4.2l3.3-1.3l3.3-0l3.3-13l3.3,7.4l3.3-7.9l3.3,7.8l3.3-7.2l3.3-12.4l3.3-4.3l3.3,7.6l3.3-0l3.3-4l3.3,16.1l3.3,3.8l3.3-0.6l3.3,1l3.4-19.9l3.3-1.8l3.3-2.4l3.3-10l3.3,16.7l3.3,5.9l3.3,2.4l3.3,9l3.3-4.2l3.3-44l3.3,33.9l3.3,1.9l3.3-8.6l3.3-1.4l3.3,9.1l3.3-2.6l3.3-7.9l3.3,26l3.3,0.4l3.3,1.3l3.3-10.5l3.3,2.1l3.3,6.4l3.3,1.1l3.3,0.8l3.3-4.7l3.3-3l3.3-5.1l3.3,2.7l3.3,3.8l3.3-0.5l3.3,3l3.3,0.5l3.3,4.4l3.3-0.8l3.3-1.5l3.3,1.5l3.3-1.9l3.3,2.5l3.3-4.9l3.3,1.3l3.3-0.9l3.3,3.6l3.3,1.7l3.3,0l3.3-0.8l3.3-2.3l3.3-1l3.3-3.2l3.3-9.7l3.3,6.8l3.3,5.7l3.3,0.1l3.3-0.9l3.3-5l3.3-6.9l3.3,6.7l3.3,0.6l3.3-32.2l3.3,14.9l3.3,8.8l3.3,2.6l3.3,3.2l3.3-9.5l3.3,5.2l3.3,8.3l3.3-3.4l3.4,5.7l3.3,1.8l3.3-8.2l3.3,6.6l3.3-7.6l3.3,6l3.3-11.4l3.3,12.3l3.3,4.3l3.3,1.9l3.3-0.6l3.3-0.8l3.3-28.5l3.3,22.5l3.3-0.3l3.3-5.3l3.3,3.4l3.3-3.3l3.3-13.4l3.3-4.5l3.3,21.9l3.3-7.5l3.3-16.8l3.3,18.1l3.3,1l3.3-6.1l3.3,13.4l3.3,2l3.3,0.7l3.3-4.6l3.3-10.1l3.3-2.1l3.3,17.7l3.3,0.6l3.3-17.7" fill="none" stroke="#cca300" stroke-width="1.2" stroke-linejoin="round" stroke-opacity="0.9"/><path d="M131.0,656.3l3.3-3.7l3.3-3.3l3.3,5.3l3.3-5.7l3.3,0l3.3,1.5l3.3,0.7l3.3-8.4l3.3,3.3l3.3,4.1l3.3-0.5l3.3-7l3.3,0l3.3,10.2l3.3-8l3.3,2.9l3.3,12.7l3.3,3.5l3.3-3.4l3.3-3.3l3.3,0.9l3.3-7.9l3.3,3l3.3-0.7l3.3-6.5l3.3-19.5l3.3,6.5l3.3,5.6l3.3-3.6l3.3-18.1l3.3,22.1l3.3,10l3.3,7.6l3.3-6.6l3.4-15l3.3-18.6l3.3,12.8l3.3-4.6l3.3,5.9l3.3,5.5l3.3,11.9l3.3,3.2l3.3-2.7l3.3-48.6l3.3,37.7l3.3-1l3.3,7.5l3.3-36.2l3.3,19.2l3.3,2l3.3,19l3.3,6.1l3.3,3l3.3-15.1l3.3-2.6l3.3,6.7l3.3-4.6l3.3,12.5l3.3,0.2l3.3-3.1l3.3-8.9l3.3-7.5l3.3-4.9l3.3,19.3l3.3,8.3l3.3-5.4l3.3-0.9l3.3,7.5l3.3,1.7l3.3-4.2l3.3-16.1l3.3,16.1l3.3-1.8l3.3,2.7l3.3-3.2l3.3-0.1l3.3,2.2l3.3,3.9l3.3-1.6l3.3-3.9l3.3,6.5l3.3-4.1l3.3-16.8l3.3,2.8l3.3,10.2l3.3-1.2l3.3,6.3l3.3-5.3l3.3-7.8l3.3,0l3.3,5.1l3.3-0.7l3.3-12l3.3-24.3l3.3,27.6l3.3-3.9l3.3,10.6l3.3,1.8l3.3-12.9l3.3,1.5l3.3,1.1l3.4,13l3.3-5.3l3.3-6.6l3.3,6.7l3.3-2.8l3.3-8.2l3.3-0.4l3.3,19.7l3.3-7.3l3.3,13.9l3.3-6.8l3.3,2.3l3.3-0.6l3.3-4.3l3.3-24l3.3,15.3l3.3,3.4l3.3,2.4l3.3-28.8l3.3,12l3.3,16.2l3.3-3.2l3.3-47.3l3.3,26.3l3.3,15.3l3.3-25.4l3.3,30.9l3.3,7.3l3.3-13.8l3.3-0.6l3.3-15.2l3.3,5.1l3.3,18.6l3.3,11.1l3.3-5.1" fill="none" stroke="#447ebc" stroke-width="1.2" stroke-linejoin="round" stroke-opacity="0.9"/><path d="M131.0,662.1l3.3-3.5l3.3,0.8l3.3-0.8l3.3-2.7l3.3-1.7l3.3,2.1l3.3,3.6l3.3-1.9l3.3-0.7l3.3-0.9l3.3-5.9l3.3,5l3.3-11.3l3.3,8.5l3.3,0.9l3.3,6.9l3.3-1.2l3.3,5l3.3,0.4l3.3-3.7l3.3-1.2l3.3-6.3l3.3,5.7l3.3-3.1l3.3-5.2l3.3-12.9l3.3-26.8l3.3,25.1l3.3,5.5l3.3,4.7l3.3,5.2l3.3-11.5l3.3,5.8l3.3-17.1l3.4,22.7l3.3-31.7l3.3-4.8l3.3,33.2l3.3-9.2l3.3,13.3l3.3-2.9l3.3,10.9l3.3-11.4l3.3-5l3.3-1.6l3.3,4.3l3.3,1.7l3.3-16.8l3.3,6.4l3.3,7.7l3.3,4.5l3.3,10.2l3.3-7.2l3.3,2.6l3.3-0.4l3.3,0.5l3.3,5.9l3.3,0.9l3.3-1.8l3.3-1.8l3.3-1.3l3.3-12.7l3.3,6.2l3.3,3.5l3.3,4.9l3.3-3.4l3.3,0.4l3.3-8.7l3.3,16.5l3.3-4.6l3.3,2.3l3.3-0.3l3.3-0.6l3.3-5.3l3.3-6.6l3.3,12.9l3.3-1.1l3.3-0.9l3.3,0.2l3.3-0.7l3.3,4.1l3.3-2.8l3.3-4.3l3.3-4.7l3.3,1.9l3.3,5.7l3.3,2.4l3.3-10.5l3.3-9.2l3.3,14.2l3.3,0.1l3.3-8.4l3.3-4.8l3.3-8.7l3.3,15.8l3.3-0.3l3.3,0.7l3.3-2.6l3.3,2.4l3.3-4.4l3.3,9.5l3.4,4.2l3.3-2l3.3-6.5l3.3,3.3l3.3-20.7l3.3,14.2l3.3,6l3.3,2.5l3.3,2.5l3.3,4.9l3.3-2.2l3.3,2.1l3.3-3.3l3.3-7.8l3.3-25.5l3.3,28.7l3.3,1.4l3.3-10l3.3,3.7l3.3-5.7l3.3,10.7l3.3-0.7l3.3-15.8l3.3-14.9l3.3,21.8l3.3-1.8l3.3,12.7l3.3-14.2l3.3,12.7l3.3-15.3l3.3-0.1l3.3,2l3.3,0.3l3.3,10.2l3.3,5" fill="none" stroke="#508642" stroke-width="1.2" stroke-linejoin="round" stroke-opacity="0.9"/><path d="M131.0,664.2l3.3-3.2l3.3-0.6l3.3,1.4l3.3-15.8l3.3,12.7l3.3-4.6l3.3-8.5l3.3,13l3.3-2.6l3.3,3.5l3.3-1.3l3.3-1.8l3.3,1.9l3.3-4.3l3.3,0.9l3.3,3.4l3.3,5l3.3,2.9l3.3-0.2l3.3-3.9l3.3-0.9l3.3-3.3l3.3-1.3l3.3-2.1l3.3-3.1l3.3-31.5l3.3,15.1l3.3,1.5l3.3-6l3.3-27.3l3.3,11.8l3.3,39.4l3.3,1.4l3.3-1.2l3.4-8l3.3-13.9l3.3-1.3l3.3,1.3l3.3,7l3.3,3.6l3.3,8.9l3.3,6l3.3-10.7l3.3-4.3l3.3,6.6l3.3-8.9l3.3,7.2l3.3-1.5l3.3-13.6l3.3,12.2l3.3,2.2l3.3,12.7l3.3-0.7l3.3-1.5l3.3-2.7l3.3,3.1l3.3-15.6l3.3,16.3l3.3-4.2l3.3-0.7l3.3-1.7l3.3-2.6l3.3-5.2l3.3,0.6l3.3,16.6l3.3-2.6l3.3-0.1l3.3,4.3l3.3,1.5l3.3-7.6l3.3,1.5l3.3,1.6l3.3-0.7l3.3-1.4l3.3,1.5l3.3,0.6l3.3-1.8l3.3-15.1l3.3,17.7l3.3,1.5l3.3-2l3.3,2.1l3.3-12.4l3.3,5.3l3.3-3.2l3.3,9.7l3.3-4l3.3-1.1l3.3-6.8l3.3,2.1l3.3,3.5l3.3-3.2l3.3-21.2l3.3,6.3l3.3,1.9l3.3,14.6l3.3,1.2l3.3-5.3l3.3-2.1l3.3-5.8l3.3,4.8l3.4,12.1l3.3-7.9l3.3-2.2l3.3,7.4l3.3-14.6l3.3,6.5l3.3,8.4l3.3-10.4l3.3,12.7l3.3-20.2l3.3,23.8l3.3-2.7l3.3-1.8l3.3-8.2l3.3-0.9l3.3,3.9l3.3,4.5l3.3-20.8l3.3,14.4l3.3,0l3.3,4.7l3.3-7.3l3.3-5.9l3.3,5.9l3.3-4.7l3.3-2.6l3.3,16.2l3.3-0.6l3.3-21.2l3.3,13.4l3.3-24.2l3.3,22.1l3.3-16.8l3.3,26.4l3.3,3.1" fill="none" stroke="#c15c17" stroke-width="1.2" stroke-linejoin="round" stroke-opacity="0.9"/><path d="M131.0,662.7l3.3-2.4l3.3-3.3l3.3,0.7l3.3-1.9l3.3,0.8l3.3-4.7l3.3,5.7l3.3-3.7l3.3-4.4l3.3,10.6l3.3-6.7l3.3-1.8l3.3,4.3l3.3-3.1l3.3,3.4l3.3-4.9l3.3,7.1l3.3,6l3.3-2.3l3.3-0.7l3.3-6.9l3.3-3l3.3-1.6l3.3,5.2l3.3-5.6l3.3-3.9l3.3-17.1l3.3,17.3l3.3-15.4l3.3,1.8l3.3,18.4l3.3,4.4l3.3,3.2l3.3,0.2l3.4-16.1l3.3-9.9l3.3-6.3l3.3,4l3.3-1.1l3.3,9.8l3.3,14.6l3.3,0.9l3.3-7.1l3.3-10.1l3.3,8.6l3.3-1l3.3-2.3l3.3-4.4l3.3-14.7l3.3,19.4l3.3,3.3l3.3,13.8l3.3-1.9l3.3-4.9l3.3-6.8l3.3,10.1l3.3,1.3l3.3-0.5l3.3,4.2l3.3-2l3.3-8.6l3.3-9.9l3.3,12.6l3.3-1.8l3.3,7l3.3-1.1l3.3,1.8l3.3,1.4l3.3,1.4l3.3-1.5l3.3-6.4l3.3,5l3.3,2.5l3.3-6.7l3.3,0.1l3.3-1.2l3.3,2.5l3.3,1.7l3.3,4.4l3.3-2.7l3.3,3.2l3.3-5.4l3.3-2.1l3.3-11.2l3.3,8.8l3.3,4.3l3.3-1.5l3.3-1.8l3.3-5.1l3.3,2.2l3.3,4.8l3.3-6.9l3.3-3.8l3.3-5.1l3.3-1.3l3.3,9.7l3.3,1.2l3.3-5.6l3.3,4.6l3.3-6.8l3.3,4l3.4,8l3.3,2l3.3-7.4l3.3,4.7l3.3-3.3l3.3,4.8l3.3,2.4l3.3,1.1l3.3-0.7l3.3,1.2l3.3,1l3.3-0.1l3.3-1.3l3.3-8.6l3.3,0.7l3.3,2.6l3.3-3.9l3.3-5.1l3.3,3.4l3.3,2.3l3.3-2.3l3.3,0.6l3.3-10.6l3.3,0.4l3.3,1.5l3.3-1l3.3,16.2l3.3-1.8l3.3,5.7l3.3-4.7l3.3-12.9l3.3-0.7l3.3,10.3l3.3,7.1l3.3-2" fill="none" stroke="#890f02" stroke-width="1.2" stroke-linejoin="round" stroke-opacity="0.9"/><path d="M131.0,664.5l3.3-3.5l3.3-0.3l3.3-0.4l3.3,0.4l3.3,0.8l3.3-3l3.3,1.8l3.3,0.9l3.3-5.7l3.3,8l3.3-3.6l3.3-1.2l3.3,1.4l3.3,0.7l3.3-1.9l3.3-0.6l3.3,5.5l3.3,2l3.3,0.9l3.3-3.1l3.3-1.3l3.3,0l3.3-1.3l3.3,1l3.3-3.2l3.3-5.6l3.3-12.1l3.3,8.8l3.3-9.9l3.3,6.5l3.3,7l3.3,6.9l3.3-1.9l3.3,2.3l3.4-16.4l3.3-6.7l3.3-0.2l3.3,13.5l3.3-9.8l3.3,9.6l3.3,5.3l3.3,3.4l3.3-3.2l3.3-10.8l3.3-2.4l3.3,2.6l3.3,10.2l3.3-11l3.3-3.9l3.3,12.8l3.3-1.9l3.3,7.3l3.3,5.7l3.3-2.9l3.3-6.2l3.3,1.6l3.3,3.4l3.3,3.3l3.3-3.3l3.3-1l3.3-0.9l3.3-2.2l3.3,1.3l3.3,4.4l3.3,0.8l3.3,0.1l3.3-0.9l3.3,2l3.3,1.4l3.3-2.2l3.3-1.1l3.3-0.8l3.3,1.6l3.3-3.5l3.3,0.3l3.3-1.2l3.3,2.5l3.3,0.4l3.3-0.3l3.3,0.1l3.3,1.1l3.3,0.7l3.3-7.3l3.3,0.5l3.3-0.2l3.3,6.8l3.3-3.1l3.3,2.4l3.3-4l3.3-2.2l3.3,4l3.3-2.2l3.3-6.4l3.3-12l3.3,14.3l3.3,0.5l3.3-1.5l3.3,2.4l3.3-0.8l3.3,1.7l3.3-3.9l3.4,7.9l3.3-2.7l3.3-0.5l3.3-0.2l3.3,1l3.3,1l3.3,1.4l3.3-1.1l3.3,2l3.3,2.3l3.3-1.6l3.3-0.2l3.3-0.6l3.3-8.4l3.3,4.1l3.3-2.3l3.3,2.6l3.3-2.2l3.3-5.8l3.3,6.6l3.3,5.2l3.3-2.2l3.3-14.1l3.3,5.7l3.3-1.3l3.3,4l3.3,0.8l3.3,5.1l3.3,2.6l3.3-7.5l3.3-3l3.3-6.5l3.3,16.4l3.3-1l3.3,2.3" fill="none" stroke="#0a437c" stroke-width="1.2" stroke-linejoin="round" stroke-opacity="0.9"/><path d="M131.0,662.6l3.3,0.5l3.3-2.6l3.3,2.3l3.3,0.1l3.3-5.5l3.3,0.8l3.3,1.9l3.3-2.7l3.3-0.3l3.3,5.7l3.3-4.2l3.3,2.2l3.3-2.6l3.3,3.3l3.3-2.7l3.3,0.5l3.3,4.9l3.3,2.6l3.3-0.5l3.3-0.4l3.3-5.1l3.3-0.1l3.3,1l3.3-1l3.3-5.7l3.3-10.4l3.3,4.4l3.3,4.5l3.3-10.7l3.3,1.9l3.3,9.5l3.3,1.8l3.3,5.9l3.3-2.8l3.4-3.4l3.3-7l3.3-0.3l3.3,1.9l3.3,1.9l3.3,4.5l3.3-2.7l3.3,5.7l3.3-3.3l3.3-5.9l3.3,1.6l3.3-4.8l3.3,3l3.3-3.3l3.3,4.6l3.3,4.7l3.3,3.3l3.3,0.1l3.3,5.7l3.3-3.9l3.3-4.1l3.3,3.4l3.3,3.2l3.3-2.4l3.3-1.1l3.3-1.4l3.3-1.1l3.3-7.2l3.3,2.3l3.3,8.3l3.3,3.2l3.3-1.2l3.3-0.2l3.3,1.1l3.3,0.1l3.3-0.6l3.3-0.2l3.3,0.8l3.3-1l3.3-4.8l3.3-0.1l3.3,1.4l3.3,4.1l3.3-1.6l3.3,1.8l3.3-1.7l3.3,1.6l3.3-0.1l3.3-7l3.3,0.6l3.3,0l3.3,5.9l3.3-2.2l3.3,1.6l3.3-1.7l3.3-2.4l3.3,0.1l3.3-3.8l3.3-4.5l3.3-4.9l3.3,7.4l3.3,0.5l3.3,4.3l3.3,0.5l3.3-8l3.3,7.5l3.3,1.4l3.4,2.8l3.3-2l3.3-3.9l3.3,2.5l3.3,1.2l3.3-5.8l3.3,4.3l3.3,4.2l3.3,1.8l3.3,0.8l3.3-2.5l3.3,0.4l3.3-2.1l3.3-2.2l3.3-7l3.3,2.9l3.3,4.5l3.3-0.2l3.3-4.6l3.3-3.9l3.3,10.3l3.3-7l3.3-6.5l3.3,8l3.3-0.7l3.3,0.9l3.3,2.1l3.3,1l3.3,0.9l3.3-2.9l3.3-2.5l3.3-4.3l3.3,11.2l3.3,2.1l3.3-2.5" fill="none" stroke="#584477" stroke-width="1.2" stroke-linejoin="round" stroke-opacity="0.9"/><path d="M131.0,662.2l3.3-17.9l3.3,7.8l3.3,6.9l3.3-3.5l3.3-2.5l3.3-0.9l3.3,6.7l3.3-17.6l3.3,9.5l3.3,5.7l3.3-0.1l3.3-4.3l3.3,2.6l3.3-21.2l3.3,22.1l3.3-2l3.3,8.7l3.3-0.3l3.3,3.4l3.3-3.9l3.3-7.1l3.3,3.8l3.3-0l3.3-10.8l3.3-14.2l3.3,0.5l3.3-28.4l3.3,33.7l3.3-11.7l3.3,17.5l3.3,8.6l3.3,3.5l3.3,1l3.3-4.6l3.4-7l3.3-5.2l3.3-13.3l3.3-7.3l3.3,13.2l3.3,4.9l3.3,13.8l3.3-13.6l3.3,17l3.3-13.2l3.3-3.7l3.3,1.3l3.3,0.8l3.3,2.7l3.3-13.2l3.3,14.1l3.3-2l3.3,15l3.3,0.4l3.3-3.6l3.3-2.4l3.3,7.6l3.3-1.4l3.3-16.8l3.3,18.3l3.3-1l3.3-9.9l3.3-0.8l3.3-2.2l3.3-4.4l3.3,3.7l3.3,6.5l3.3,2.1l3.3,7.7l3.3-8l3.3-8.8l3.3,11.3l3.3,6.5l3.3-0.5l3.3-5.6l3.3-0.1l3.3-1.5l3.3,6.4l3.3-18.8l3.3,16.5l3.3-12.9l3.3,17.9l3.3-5.8l3.3-2.1l3.3-20l3.3,22.2l3.3-2.4l3.3,4.2l3.3-3.3l3.3-6.2l3.3,7.4l3.3-21l3.3,16.1l3.3-26.5l3.3,4.8l3.3,6.6l3.3,7.7l3.3,1.6l3.3-16.2l3.3,21.5l3.3-12.1l3.3,4.1l3.4,10.2l3.3,1.9l3.3-0.9l3.3-20.2l3.3,2.7l3.3,14.3l3.3,3.1l3.3,3.3l3.3-1.6l3.3,4.2l3.3-1.4l3.3,0.1l3.3,0.9l3.3-36.2l3.3,25.4l3.3-0.2l3.3,8.3l3.3-14.2l3.3-8.5l3.3,7.2l3.3,6.8l3.3-3.6l3.3-0.6l3.3-6.2l3.3,1.2l3.3,8.8l3.3,5.5l3.3,1.1l3.3,4.5l3.3-30.5l3.3-12.8l3.3,25.8l3.3-2.7l3.3,15.8l3.3,4.1" fill="none" stroke="#705da0" stroke-width="1.2" stroke-linejoin="round" stroke-opacity="0.9"/><path d="M131.0,662.7l3.3,0.4l3.3-1.1l3.3,0.8l3.3-3.6l3.3-2.9l3.3,3.9l3.3,2.2l3.3-7.4l3.3,5.4l3.3-1.3l3.3,2.6l3.3-5l3.3,3.4l3.3-5.2l3.3-0.8l3.3,6l3.3,4.8l3.3,1.2l3.3,0.8l3.3-3.2l3.3-1.6l3.3-3.9l3.3,3.2l3.3-3.2l3.3-0.5l3.3-12.1l3.3-1.8l3.3,8.2l3.3-6l3.3-4.2l3.3,9.6l3.3,4.4l3.3,7.5l3.3-3.9l3.4-8.3l3.3-15.7l3.3,7.1l3.3,4.8l3.3,4.2l3.3,1l3.3,5.3l3.3,4.8l3.3-8.1l3.3-8.8l3.3,4l3.3,1.2l3.3-3.1l3.3-9.6l3.3-1.8l3.3,10.5l3.3,10.9l3.3,3.4l3.3,2.7l3.3-4.8l3.3-4.4l3.3,2.8l3.3,6.8l3.3-0.1l3.3-4.4l3.3,1.2l3.3-4l3.3-2.3l3.3-2.6l3.3,10.3l3.3-0.9l3.3-2.4l3.3,0.4l3.3,4.7l3.3-0.3l3.3-0.5l3.3-3.7l3.3,2.6l3.3,0.1l3.3-3.6l3.3,0.2l3.3,0.7l3.3,1.2l3.3,1.4l3.3-1.1l3.3,0.4l3.3,3.8l3.3-1.5l3.3-10.5l3.3,5.1l3.3-2l3.3,4.3l3.3,3.1l3.3-5.1l3.3-3.4l3.3,4.4l3.3,1.6l3.3-7.4l3.3-9.4l3.3-1.2l3.3,2.9l3.3,9.6l3.3-3.5l3.3-1.6l3.3-0l3.3,2.5l3.3,4.5l3.4,2.8l3.3-1.5l3.3-4.6l3.3,6.5l3.3-2.7l3.3,1l3.3,2.2l3.3,0l3.3,1l3.3-0.3l3.3,0.8l3.3-1.3l3.3,0l3.3-9.2l3.3,3.2l3.3,2.7l3.3,2.4l3.3-8.1l3.3-4l3.3-1.6l3.3,9.9l3.3-5.3l3.3,1.3l3.3-9.6l3.3,11.3l3.3,0.6l3.3-2.7l3.3,10l3.3-4.5l3.3-7.5l3.3,2l3.3-2.4l3.3,6.2l3.3,3l3.3,2.6" fill="none" stroke="#6d1f62" stroke-width="1.2" stroke-linejoin="round" stroke-opacity="0.9"/><path d="M131.0,659.6l3.3-1.4l3.3-1.6l3.3-9.6l3.3,8.7l3.3,0l3.3-0.8l3.3-1l3.3-5l3.3,1.6l3.3,0.3l3.3,6.3l3.3-3.6l3.3-11.7l3.3,0.8l3.3,2.1l3.3-0.1l3.3,11.7l3.3,5.4l3.3-1.4l3.3-3.3l3.3-4.5l3.3,2.7l3.3-0.4l3.3-7.1l3.3-6.5l3.3-14.8l3.3-6l3.3,12.4l3.3-17.1l3.3,13.4l3.3-3.6l3.3,28.2l3.3,3.5l3.3-32l3.4-22.2l3.3,17.9l3.3-10.6l3.3,7.9l3.3,5.9l3.3,9.5l3.3,16.1l3.3,5.5l3.3-13.3l3.3-12.5l3.3,0.5l3.3-10.2l3.3,21.7l3.3-20.3l3.3,10l3.3,1.7l3.3-14.9l3.3,26.6l3.3,12.6l3.3,0.8l3.3-21.4l3.3,17.6l3.3-0l3.3,1.5l3.3-12.5l3.3,9.3l3.3-8.8l3.3-1.5l3.3-11.3l3.3,16.2l3.3,10.9l3.3-3.9l3.3,1.4l3.3-7.8l3.3,12.4l3.3-2.7l3.3-4.4l3.3,3.7l3.3-2.9l3.3-17.9l3.3,11.7l3.3,6.7l3.3-0l3.3,7.3l3.3-7.3l3.3-7.8l3.3,13l3.3-1.8l3.3-16.1l3.3,5.6l3.3,8.4l3.3,4.1l3.3-2.6l3.3-21.3l3.3,12.8l3.3-3.1l3.3-3.3l3.3,8.5l3.3-21.9l3.3-30.7l3.3,30l3.3,6.3l3.3,9.8l3.3-3.8l3.3-3.2l3.3-4.3l3.3,7.6l3.4,0.2l3.3,2.2l3.3-3.9l3.3-14.1l3.3,22.4l3.3,0.8l3.3-1.4l3.3,10.8l3.3-2.4l3.3-0.2l3.3-1.5l3.3,4.5l3.3-20.3l3.3,8.6l3.3-3.8l3.3,3.3l3.3,8.1l3.3-13.7l3.3-12.3l3.3,13.4l3.3,0.4l3.3-6.2l3.3-5.3l3.3,12.1l3.3-17.4l3.3,22.3l3.3-2.5l3.3,12.1l3.3-4.1l3.3-26.3l3.3-2.3l3.3,18.1l3.3-5.9l3.3,16.4l3.3,2.8" fill="none" stroke="#ba43a9" stroke-width="1.2" stroke-linejoin="round" stroke-opacity="0.9"/></g><text x="522.7" y="712.3" font-size="12" fill="#33b5e5" font-weight="bold" text-anchor="end" textLength="19.3" lengthAdjust="spacingAndGlyphs" >avg</text><text x="573.5" y="712.3" font-size="12" fill="#33b5e5" font-weight="bold" text-anchor="end" textLength="39.5" lengthAdjust="spacingAndGlyphs" >current</text><path d="M572.5,705.8 h7 l-3.5,3.5 Z" fill="#33b5e5" stroke="none" stroke-width="1" /><rect x="109" y="731" width="12.5" height="3" rx="0" fill="#ba43a9" /><text x="129.3" y="735.4" font-size="12" fill="#d0d2d4" font-weight="normal" text-anchor="start" >Core 6</text><text x="522.7" y="735.4" font-size="12" fill="#fff" font-weight="normal" text-anchor="end" stroke="#fff" stroke-width="0.3" >20%</text><text x="579.0" y="735.4" font-size="12" fill="#fff" font-weight="normal" text-anchor="end" stroke="#fff" stroke-width="0.3" >30%</text><rect x="109" y="756.7" width="12.5" height="3.0" rx="0" fill="#705da0" /><text x="129.3" y="761.1" font-size="12" fill="#d0d2d4" font-weight="normal" text-anchor="start" >Core 7</text><text x="522.7" y="761.1" font-size="12" fill="#fff" font-weight="normal" text-anchor="end" stroke="#fff" stroke-width="0.3" >22%</text><text x="579.0" y="761.1" font-size="12" fill="#fff" font-weight="normal" text-anchor="end" stroke="#fff" stroke-width="0.3" >30%</text><rect x="591" y="702" width="6" height="32" rx="3" fill="rgba(180,190,200,0.45)" /><path d="M597,769 H602 V763.5" fill="none" stroke="#fff" stroke-width="2" /><rect x="617" y="520" width="523" height="252" rx="3" fill="rgba(0,0,0,0.27)" /><text x="878.5" y="539.9" font-size="13.3" fill="#fff" font-weight="bold" text-anchor="middle" textLength="85.5" lengthAdjust="spacingAndGlyphs">CPU package</text><text x="1130.4" y="539.9" font-size="12.2" fill="#33b5e5" font-weight="bold" text-anchor="end" textLength="86.7" lengthAdjust="spacingAndGlyphs">Last 30 minutes</text><circle cx="1035.1000000000001" cy="535.5" r="4.5" fill="none" stroke="#33b5e5" stroke-width="1.6"/><path d="M1035.1000000000001,532.85 V535.8 H1032.874" fill="none" stroke="#33b5e5" stroke-width="1.4" /><line x1="655.6" y1="569.3" x2="1116" y2="569.3" stroke="rgba(255,255,255,0.16)" stroke-width="1" /><line x1="655.6" y1="594.425" x2="1116" y2="594.425" stroke="rgba(255,255,255,0.16)" stroke-width="1" /><line x1="655.6" y1="619.55" x2="1116" y2="619.55" stroke="rgba(255,255,255,0.16)" stroke-width="1" /><line x1="655.6" y1="644.675" x2="1116" y2="644.675" stroke="rgba(255,255,255,0.16)" stroke-width="1" /><line x1="655.6" y1="669.8" x2="1116" y2="669.8" stroke="rgba(255,255,255,0.16)" stroke-width="1" /><line x1="668.5" y1="569.3" x2="668.5" y2="669.8" stroke="rgba(255,255,255,0.16)" stroke-width="1" /><line x1="745.2" y1="569.3" x2="745.2" y2="669.8" stroke="rgba(255,255,255,0.16)" stroke-width="1" /><line x1="821.9" y1="569.3" x2="821.9" y2="669.8" stroke="rgba(255,255,255,0.16)" stroke-width="1" /><line x1="898.6" y1="569.3" x2="898.6" y2="669.8" stroke="rgba(255,255,255,0.16)" stroke-width="1" /><line x1="975.3" y1="569.3" x2="975.3" y2="669.8" stroke="rgba(255,255,255,0.16)" stroke-width="1" /><line x1="1052" y1="569.3" x2="1052" y2="669.8" stroke="rgba(255,255,255,0.16)" stroke-width="1" /><text x="648.5" y="572.3" font-size="12" fill="#e6e7e8" font-weight="normal" text-anchor="end" letter-spacing="-0.25" stroke="#e6e7e8" stroke-width="0.3" >40%</text><text x="648.5" y="597.4" font-size="12" fill="#e6e7e8" font-weight="normal" text-anchor="end" letter-spacing="-0.25" stroke="#e6e7e8" stroke-width="0.3" >30%</text><text x="648.5" y="622.5" font-size="12" fill="#e6e7e8" font-weight="normal" text-anchor="end" letter-spacing="-0.25" stroke="#e6e7e8" stroke-width="0.3" >20%</text><text x="648.5" y="647.7" font-size="12" fill="#e6e7e8" font-weight="normal" text-anchor="end" letter-spacing="-0.25" stroke="#e6e7e8" stroke-width="0.3" >10%</text><text x="648.5" y="672.8" font-size="12" fill="#e6e7e8" font-weight="normal" text-anchor="end" letter-spacing="-0.25" stroke="#e6e7e8" stroke-width="0.3" >0%</text><text x="668.5" y="687.0" font-size="12" fill="#e6e7e8" font-weight="normal" text-anchor="middle" letter-spacing="-0.25" stroke="#e6e7e8" stroke-width="0.3" textLength="29" lengthAdjust="spacingAndGlyphs" >19:50</text><text x="745.2" y="687.0" font-size="12" fill="#e6e7e8" font-weight="normal" text-anchor="middle" letter-spacing="-0.25" stroke="#e6e7e8" stroke-width="0.3" textLength="29" lengthAdjust="spacingAndGlyphs" >19:55</text><text x="821.9" y="687.0" font-size="12" fill="#e6e7e8" font-weight="normal" text-anchor="middle" letter-spacing="-0.25" stroke="#e6e7e8" stroke-width="0.3" textLength="29" lengthAdjust="spacingAndGlyphs" >20:00</text><text x="898.6" y="687.0" font-size="12" fill="#e6e7e8" font-weight="normal" text-anchor="middle" letter-spacing="-0.25" stroke="#e6e7e8" stroke-width="0.3" textLength="29" lengthAdjust="spacingAndGlyphs" >20:05</text><text x="975.3" y="687.0" font-size="12" fill="#e6e7e8" font-weight="normal" text-anchor="middle" letter-spacing="-0.25" stroke="#e6e7e8" stroke-width="0.3" textLength="29" lengthAdjust="spacingAndGlyphs" >20:10</text><text x="1052.0" y="687.0" font-size="12" fill="#e6e7e8" font-weight="normal" text-anchor="middle" letter-spacing="-0.25" stroke="#e6e7e8" stroke-width="0.3" textLength="29" lengthAdjust="spacingAndGlyphs" >20:15</text><clipPath id="cpk"><rect x="655.6" y="560" width="460.4" height="110.5"/></clipPath><g clip-path="url(#cpk)"><path d="M658.0,648.1l3,2.5l3,0.5l3-3.1l3.1,3.7l3-1.9l3-0.4l3-0.3l3,2.5l3-2.6l3.1,0.7l3-11.6l3-15l3,17.6l3,10.7l3-3.3l3.1,1.6l3-1.8l3,3.5l3-0.8l3,1.3l3-7.3l3.1-4.5l3,7.7l3,1.6l3,1.2l3-0.1l3-1.4l3.1-25.6l3-35l3,9.2l3-14.8l3,3.8l3,1.6l3.1-2.2l3,7.8l3,34.2l3,14.5l3-14.3l3-42.8l3.1,1.9l3,11.8l3,0.5l3-3.9l3,7.8l3,16.9l3.1,9.8l3-24.2l3,19.7l3-38l3-15.1l3-0.2l3.1,11.8l3,4.1l3,30.2l3,7.5l3,3.8l3,4.4l3.1-4.7l3,9.1l3-3.6l3,4.7l3-2.3l3-4.7l3.1-18.8l3,16.1l3,0.4l3,1.7l3,5.6l3-4.2l3.1-2.4l3,5.4l3-2.2l3,1.9l3-5l3,1.9l3.1,2.4l3,3.7l3,3.6l3,4.6l3-3l3-2l3.1-0.1l3,4.7l3-0l3-0.7l3-6l3,5.5l3.1-2.1l3-0.8l3-3l3,5.1l3-1.1l3-4.4l3.1,2.2l3-3.5l3-1.5l3-12.7l3,4.9l3-6.1l3.1-1.4l3-20.5l3-8.7l3-6.2l3,8l3,7l3.1-8.1l3,40.8l3-24.6l3-4.1l3,25.4l3-6.3l3.1-2.6l3,0.5l3,12.1l3-1l3-7.2l3-1.6l3.1-3.5l3,7.4l3-5.8l3-1.6l3,13l3-12.9l3.1-16.7l3,17.4l3,2.9l3-6.4l3,2.6l3,12.6l3.1-21.3l3-15.7l3,3l3,20.3l3-8.4l3-0.6l3.1,16.2l3-13.2l3-7.6l3,7.2l3,5.9l3-8.7l3.1,7.7l3,4.4l3-5.1l3-4.3l3,1.8l3,5.2l3.1-12.2l3-0.2l3-3.9l3,7.2V670.5H658.0Z" fill="#6ed0e0" stroke="none" stroke-width="1" fill-opacity="0.36"/><path d="M658.0,662.6l3,5.2l3-4.2l3-0.5l3.1,4.7l3-1.7l3,1.7l3-0.2l3-2l3-2.2l3.1,4.2l3-9.8l3-21.9l3,24.3l3,4.1l3,2.1l3.1,1.3l3-2.6l3-1.7l3,3.3l3-2.1l3,0.3l3.1-6.4l3,3.7l3,4.1l3,1.5l3,0l3-0.2l3.1-15.3l3-21.6l3,3.3l3-4.3l3-2.2l3,5.9l3.1-3.4l3,2.7l3,18.1l3,8.1l3-8.3l3-18.2l3.1-4.1l3,12.2l3-2.6l3-1.6l3,3.9l3,11.8l3.1,3.3l3-15.3l3,11.1l3-17l3-13.6l3,3.1l3.1,5.1l3,3.8l3,14.5l3,5.4l3-0.4l3,7.8l3.1-4.8l3,1.2l3,4.3l3,2.1l3-5.3l3-4.4l3.1-4.6l3,8.3l3-3.1l3,2.2l3,0.4l3,2.9l3.1-1.4l3,2.6l3-2.7l3,2.2l3-4.3l3,3.6l3.1-1.9l3,3.9l3,2.6l3,3l3-2.7l3-1l3.1-4.6l3,4.8l3-1.4l3,2.1l3-0.7l3-0.5l3.1-1.9l3-2l3,4.7l3,2.6l3-5.5l3,1.2l3.1,2.7l3-2.4l3-5.7l3-5.3l3,0.2l3-2.4l3.1,1.1l3-10.6l3-4.9l3-2.3l3-0.4l3,7.3l3.1-5l3,23.3l3-14.7l3-4.3l3,15.5l3-2.4l3.1-2.7l3-0.3l3,7.8l3-0l3-1.9l3-0.6l3.1-5.3l3,3.8l3-4l3,2.8l3,6.2l3-4.4l3.1-13.2l3,9.9l3,3.6l3-6.3l3-0l3,10.1l3.1-13.1l3-8.7l3,1.9l3,13.7l3-3.4l3-6.8l3.1,10l3-8.3l3-3.3l3,8.7l3,3.1l3-6.5l3.1,2.7l3,2.2l3-2.7l3-1.1l3,2.7l3,0.3l3.1-5.2l3-2.1l3,1.2l3-0.6V670.5H658.0Z" fill="#ef843c" stroke="none" stroke-width="1" fill-opacity="0.38"/><path d="M658.0,669.0l3,0l3,0l3,0l3.1,0l3,0l3,0l3,0l3,0l3,0l3.1,0l3-3.2l3-6.8l3,7.9l3,2.1l3,0l3.1,0l3-1.1l3,1.1l3-0.1l3,0.1l3-1.8l3.1-0.8l3,2.6l3-0l3-0l3-0l3-0l3.1-8.2l3-12.8l3,2l3-4.8l3,2.3l3,1l3.1-2.7l3,3.2l3,11.5l3,7.7l3-5.4l3-18.1l3.1,2.7l3,2.4l3-0l3-0l3,2.3l3,7.9l3.1,1.6l3-8.3l3,7.6l3-12.6l3-7.6l3,0.4l3.1,4.9l3-0.1l3,11l3,3.4l3,3.3l3-1l3.1,1.2l3,1.3l3-1.4l3,2.7l3-0.9l3-1.2l3.1-7.3l3,6.3l3-1.3l3,1.1l3,1.5l3-1.4l3.1-0.2l3,1.8l3,0.7l3-0.3l3-2.3l3,0.8l3.1-0.6l3,3.8l3,0.2l3,1.9l3-0.2l3-2.6l3.1,1.5l3,1.3l3-0.9l3,0.9l3-3.9l3,3.9l3.1-0.6l3,0.1l3-2.6l3,2.2l3-1.3l3-2.2l3.1,3.8l3-2.5l3-1.5l3-3.5l3,0l3-0.6l3.1-0.6l3-8l3-4.1l3-1.4l3,3.7l3,1.1l3.1-3.4l3,16.8l3-8.9l3-1.1l3,7.6l3-2.7l3.1,0l3-1l3,6.1l3-1l3-3.2l3,0.2l3.1-1.4l3,4l3-3.2l3-1.1l3,4.8l3-5.1l3.1-4.1l3,4.5l3,1.8l3-3.1l3,1.2l3,3.6l3.1-6.1l3-5.5l3,1.7l3,4.9l3-1.5l3,0l3.1,4.4l3-3.1l3-4.9l3,4.2l3,1.4l3-1.9l3.1,3.2l3,2l3-2.9l3-1.4l3,1.4l3-0.1l3.1-2.9l3-0.8l3-1l3,2.1V670.5H658.0Z" fill="#eab839" stroke="none" stroke-width="1" fill-opacity="0.3"/><path d="M658.0,660.4l3-0.5l3-0.5l3-0.1l3.1,0.4l3,0.4l3-0.1l3-0.4l3-0.6l3-0.4l3.1,0l3,0.8l3,0.8l3,0l3-0.4l3,0.1l3.1,0.2l3-0.3l3-0.1l3,0.4l3,0.4l3-0.2l3.1-0.3l3,0.3l3,0.6l3,0.4l3,0.2l3,0l3.1-0.3l3-0.5l3-0.2l3-0.2l3-0.1l3-0.2l3.1,0.1l3,0.1l3,0l3-0.2l3-0.1l3,0.1l3.1-0.2l3-0.4l3,0l3,0.3l3,0.2l3,0.4l3.1,0.5l3,0l3-0.1l3,0.3l3,0.2l3-0.3l3.1-0.2l3-0.5l3-0.9l3-0.6l3,0l3,0l3.1,0.1l3,0.5l3,0.7l3,0.5l3-0.3l3-0.6l3.1-0.3l3,0.5l3,0.8l3,0.3l3-0.1l3-0.2l3.1-0.4l3-0.4l3-0.3l3-0.2l3-0.1l3,0.2l3.1,0l3-0.2l3-0.1l3,0.1l3,0.3l3,0.5l3.1,0.3l3,0l3,0.2l3,0.1l3-0.3l3-0.8l3.1,0l3,0.9l3,0.5l3-0.1l3-0.1l3-0.1l3.1-0.2l3,0l3,0.3l3,0l3-0.4l3-0.2l3.1-0.1l3-0.1l3,0l3,0.2l3-0.2l3-0.6l3.1-0.3l3,0l3,0.1l3,0.3l3,0.2l3-0.2l3.1,0.1l3,0.4l3-0.2l3-0.6l3-0.3l3,0.3l3.1,0.5l3,0.4l3,0.2l3-0.2l3-0.1l3,0.2l3.1,0l3-0.5l3-0.1l3-0.1l3-0.3l3,0l3.1,0.5l3,0.6l3,0.3l3,0.2l3,0.1l3-0.1l3.1-0.1l3-0.3l3-0.7l3-0.4l3,0.3l3,0.1l3.1-0.3l3-0.1l3,0.2l3-0.2l3-0.4l3,0.1l3.1,0.4l3,0.4l3,0.5l3,0.4V670.5H658.0Z" fill="#d683ce" stroke="none" stroke-width="1" fill-opacity="0.4"/><path d="M658.0,668.7l3,0l3,0.1l3-0.2l3.1,0.1l3-0.2l3,0.2l3-0.6l3-0.5l3,0.4l3.1,0.7l3-0.9l3-0.5l3-0.4l3,0.2l3,0.6l3.1,0.8l3-0.5l3-1.2l3-0.3l3,1l3,1.1l3.1,0.1l3-0.3l3-0l3,0.3l3-0.2l3,0.2l3.1-0.7l3-0.8l3-0.1l3,0.7l3,0.8l3-0l3.1-0.6l3-0.1l3,0.9l3-1.3l3-0.4l3,0.3l3.1,0.4l3,0.8l3-0.6l3,0l3,0.2l3-1.2l3.1-0.1l3,0.8l3,1l3-0.4l3,0.2l3-0.2l3.1-0.4l3,0.4l3,0.5l3-0.3l3-0.1l3,0.3l3.1,0.1l3-0.8l3,0.2l3,0.5l3,0l3,0l3.1-0.9l3-0.3l3,1.3l3-1.3l3,0.2l3,0.9l3.1-1.1l3-0l3,0.7l3,0.3l3-0.1l3,0.2l3.1-0.5l3,0.3l3,0.3l3-0.3l3-0.8l3-0.2l3.1,0.3l3-0.2l3,0.2l3,1l3-0.2l3,0.2l3.1-0.5l3-0.7l3-0.8l3-0.1l3,0.9l3,1.2l3.1-1.1l3,0.1l3,0.7l3,0.4l3-0.3l3-0.3l3.1-0.1l3-0.1l3-0.3l3,0.4l3,0.5l3-0.1l3.1,0.2l3-0l3-0l3,0.1l3-0.2l3-0.3l3.1,0.3l3-0.3l3,0.2l3-0.1l3,0.2l3-0.6l3.1-0.7l3,0.9l3-0.5l3-0.7l3,0.7l3,0.9l3.1-0l3-0.6l3-0.5l3-0.1l3,0.5l3,0.6l3.1,0.2l3-0.2l3-0.6l3-0l3,0.2l3-0.4l3.1-0.3l3,0.3l3,0.4l3,0.2l3,0.3l3-0l3.1-0.1l3-0.3l3-0.2l3,0.6l3-0l3-0.6l3.1-0l3,0.2l3-0.3l3-0.3V670.5H658.0Z" fill="#e24d42" stroke="none" stroke-width="1" fill-opacity="0.35"/><path d="M658.0,648.1l3,2.5l3,0.5l3-3.1l3.1,3.7l3-1.9l3-0.4l3-0.3l3,2.5l3-2.6l3.1,0.7l3-11.6l3-15l3,17.6l3,10.7l3-3.3l3.1,1.6l3-1.8l3,3.5l3-0.8l3,1.3l3-7.3l3.1-4.5l3,7.7l3,1.6l3,1.2l3-0.1l3-1.4l3.1-25.6l3-35l3,9.2l3-14.8l3,3.8l3,1.6l3.1-2.2l3,7.8l3,34.2l3,14.5l3-14.3l3-42.8l3.1,1.9l3,11.8l3,0.5l3-3.9l3,7.8l3,16.9l3.1,9.8l3-24.2l3,19.7l3-38l3-15.1l3-0.2l3.1,11.8l3,4.1l3,30.2l3,7.5l3,3.8l3,4.4l3.1-4.7l3,9.1l3-3.6l3,4.7l3-2.3l3-4.7l3.1-18.8l3,16.1l3,0.4l3,1.7l3,5.6l3-4.2l3.1-2.4l3,5.4l3-2.2l3,1.9l3-5l3,1.9l3.1,2.4l3,3.7l3,3.6l3,4.6l3-3l3-2l3.1-0.1l3,4.7l3-0l3-0.7l3-6l3,5.5l3.1-2.1l3-0.8l3-3l3,5.1l3-1.1l3-4.4l3.1,2.2l3-3.5l3-1.5l3-12.7l3,4.9l3-6.1l3.1-1.4l3-20.5l3-8.7l3-6.2l3,8l3,7l3.1-8.1l3,40.8l3-24.6l3-4.1l3,25.4l3-6.3l3.1-2.6l3,0.5l3,12.1l3-1l3-7.2l3-1.6l3.1-3.5l3,7.4l3-5.8l3-1.6l3,13l3-12.9l3.1-16.7l3,17.4l3,2.9l3-6.4l3,2.6l3,12.6l3.1-21.3l3-15.7l3,3l3,20.3l3-8.4l3-0.6l3.1,16.2l3-13.2l3-7.6l3,7.2l3,5.9l3-8.7l3.1,7.7l3,4.4l3-5.1l3-4.3l3,1.8l3,5.2l3.1-12.2l3-0.2l3-3.9l3,7.2" fill="none" stroke="#6ed0e0" stroke-width="1.4" stroke-opacity="0.75" stroke-linejoin="round"/><path d="M658.0,662.6l3,5.2l3-4.2l3-0.5l3.1,4.7l3-1.7l3,1.7l3-0.2l3-2l3-2.2l3.1,4.2l3-9.8l3-21.9l3,24.3l3,4.1l3,2.1l3.1,1.3l3-2.6l3-1.7l3,3.3l3-2.1l3,0.3l3.1-6.4l3,3.7l3,4.1l3,1.5l3,0l3-0.2l3.1-15.3l3-21.6l3,3.3l3-4.3l3-2.2l3,5.9l3.1-3.4l3,2.7l3,18.1l3,8.1l3-8.3l3-18.2l3.1-4.1l3,12.2l3-2.6l3-1.6l3,3.9l3,11.8l3.1,3.3l3-15.3l3,11.1l3-17l3-13.6l3,3.1l3.1,5.1l3,3.8l3,14.5l3,5.4l3-0.4l3,7.8l3.1-4.8l3,1.2l3,4.3l3,2.1l3-5.3l3-4.4l3.1-4.6l3,8.3l3-3.1l3,2.2l3,0.4l3,2.9l3.1-1.4l3,2.6l3-2.7l3,2.2l3-4.3l3,3.6l3.1-1.9l3,3.9l3,2.6l3,3l3-2.7l3-1l3.1-4.6l3,4.8l3-1.4l3,2.1l3-0.7l3-0.5l3.1-1.9l3-2l3,4.7l3,2.6l3-5.5l3,1.2l3.1,2.7l3-2.4l3-5.7l3-5.3l3,0.2l3-2.4l3.1,1.1l3-10.6l3-4.9l3-2.3l3-0.4l3,7.3l3.1-5l3,23.3l3-14.7l3-4.3l3,15.5l3-2.4l3.1-2.7l3-0.3l3,7.8l3-0l3-1.9l3-0.6l3.1-5.3l3,3.8l3-4l3,2.8l3,6.2l3-4.4l3.1-13.2l3,9.9l3,3.6l3-6.3l3-0l3,10.1l3.1-13.1l3-8.7l3,1.9l3,13.7l3-3.4l3-6.8l3.1,10l3-8.3l3-3.3l3,8.7l3,3.1l3-6.5l3.1,2.7l3,2.2l3-2.7l3-1.1l3,2.7l3,0.3l3.1-5.2l3-2.1l3,1.2l3-0.6" fill="none" stroke="#ef843c" stroke-width="1.4" stroke-opacity="0.75" stroke-linejoin="round"/><path d="M658.0,669.0l3,0l3,0l3,0l3.1,0l3,0l3,0l3,0l3,0l3,0l3.1,0l3-3.2l3-6.8l3,7.9l3,2.1l3,0l3.1,0l3-1.1l3,1.1l3-0.1l3,0.1l3-1.8l3.1-0.8l3,2.6l3-0l3-0l3-0l3-0l3.1-8.2l3-12.8l3,2l3-4.8l3,2.3l3,1l3.1-2.7l3,3.2l3,11.5l3,7.7l3-5.4l3-18.1l3.1,2.7l3,2.4l3-0l3-0l3,2.3l3,7.9l3.1,1.6l3-8.3l3,7.6l3-12.6l3-7.6l3,0.4l3.1,4.9l3-0.1l3,11l3,3.4l3,3.3l3-1l3.1,1.2l3,1.3l3-1.4l3,2.7l3-0.9l3-1.2l3.1-7.3l3,6.3l3-1.3l3,1.1l3,1.5l3-1.4l3.1-0.2l3,1.8l3,0.7l3-0.3l3-2.3l3,0.8l3.1-0.6l3,3.8l3,0.2l3,1.9l3-0.2l3-2.6l3.1,1.5l3,1.3l3-0.9l3,0.9l3-3.9l3,3.9l3.1-0.6l3,0.1l3-2.6l3,2.2l3-1.3l3-2.2l3.1,3.8l3-2.5l3-1.5l3-3.5l3,0l3-0.6l3.1-0.6l3-8l3-4.1l3-1.4l3,3.7l3,1.1l3.1-3.4l3,16.8l3-8.9l3-1.1l3,7.6l3-2.7l3.1,0l3-1l3,6.1l3-1l3-3.2l3,0.2l3.1-1.4l3,4l3-3.2l3-1.1l3,4.8l3-5.1l3.1-4.1l3,4.5l3,1.8l3-3.1l3,1.2l3,3.6l3.1-6.1l3-5.5l3,1.7l3,4.9l3-1.5l3,0l3.1,4.4l3-3.1l3-4.9l3,4.2l3,1.4l3-1.9l3.1,3.2l3,2l3-2.9l3-1.4l3,1.4l3-0.1l3.1-2.9l3-0.8l3-1l3,2.1" fill="none" stroke="#eab839" stroke-width="1.3" stroke-opacity="0.75" stroke-linejoin="round"/><path d="M658.0,660.4l3-0.5l3-0.5l3-0.1l3.1,0.4l3,0.4l3-0.1l3-0.4l3-0.6l3-0.4l3.1,0l3,0.8l3,0.8l3,0l3-0.4l3,0.1l3.1,0.2l3-0.3l3-0.1l3,0.4l3,0.4l3-0.2l3.1-0.3l3,0.3l3,0.6l3,0.4l3,0.2l3,0l3.1-0.3l3-0.5l3-0.2l3-0.2l3-0.1l3-0.2l3.1,0.1l3,0.1l3,0l3-0.2l3-0.1l3,0.1l3.1-0.2l3-0.4l3,0l3,0.3l3,0.2l3,0.4l3.1,0.5l3,0l3-0.1l3,0.3l3,0.2l3-0.3l3.1-0.2l3-0.5l3-0.9l3-0.6l3,0l3,0l3.1,0.1l3,0.5l3,0.7l3,0.5l3-0.3l3-0.6l3.1-0.3l3,0.5l3,0.8l3,0.3l3-0.1l3-0.2l3.1-0.4l3-0.4l3-0.3l3-0.2l3-0.1l3,0.2l3.1,0l3-0.2l3-0.1l3,0.1l3,0.3l3,0.5l3.1,0.3l3,0l3,0.2l3,0.1l3-0.3l3-0.8l3.1,0l3,0.9l3,0.5l3-0.1l3-0.1l3-0.1l3.1-0.2l3,0l3,0.3l3,0l3-0.4l3-0.2l3.1-0.1l3-0.1l3,0l3,0.2l3-0.2l3-0.6l3.1-0.3l3,0l3,0.1l3,0.3l3,0.2l3-0.2l3.1,0.1l3,0.4l3-0.2l3-0.6l3-0.3l3,0.3l3.1,0.5l3,0.4l3,0.2l3-0.2l3-0.1l3,0.2l3.1,0l3-0.5l3-0.1l3-0.1l3-0.3l3,0l3.1,0.5l3,0.6l3,0.3l3,0.2l3,0.1l3-0.1l3.1-0.1l3-0.3l3-0.7l3-0.4l3,0.3l3,0.1l3.1-0.3l3-0.1l3,0.2l3-0.2l3-0.4l3,0.1l3.1,0.4l3,0.4l3,0.5l3,0.4" fill="none" stroke="#d683ce" stroke-width="1.4" stroke-opacity="0.75" stroke-linejoin="round"/><path d="M658.0,668.7l3,0l3,0.1l3-0.2l3.1,0.1l3-0.2l3,0.2l3-0.6l3-0.5l3,0.4l3.1,0.7l3-0.9l3-0.5l3-0.4l3,0.2l3,0.6l3.1,0.8l3-0.5l3-1.2l3-0.3l3,1l3,1.1l3.1,0.1l3-0.3l3-0l3,0.3l3-0.2l3,0.2l3.1-0.7l3-0.8l3-0.1l3,0.7l3,0.8l3-0l3.1-0.6l3-0.1l3,0.9l3-1.3l3-0.4l3,0.3l3.1,0.4l3,0.8l3-0.6l3,0l3,0.2l3-1.2l3.1-0.1l3,0.8l3,1l3-0.4l3,0.2l3-0.2l3.1-0.4l3,0.4l3,0.5l3-0.3l3-0.1l3,0.3l3.1,0.1l3-0.8l3,0.2l3,0.5l3,0l3,0l3.1-0.9l3-0.3l3,1.3l3-1.3l3,0.2l3,0.9l3.1-1.1l3-0l3,0.7l3,0.3l3-0.1l3,0.2l3.1-0.5l3,0.3l3,0.3l3-0.3l3-0.8l3-0.2l3.1,0.3l3-0.2l3,0.2l3,1l3-0.2l3,0.2l3.1-0.5l3-0.7l3-0.8l3-0.1l3,0.9l3,1.2l3.1-1.1l3,0.1l3,0.7l3,0.4l3-0.3l3-0.3l3.1-0.1l3-0.1l3-0.3l3,0.4l3,0.5l3-0.1l3.1,0.2l3-0l3-0l3,0.1l3-0.2l3-0.3l3.1,0.3l3-0.3l3,0.2l3-0.1l3,0.2l3-0.6l3.1-0.7l3,0.9l3-0.5l3-0.7l3,0.7l3,0.9l3.1-0l3-0.6l3-0.5l3-0.1l3,0.5l3,0.6l3.1,0.2l3-0.2l3-0.6l3-0l3,0.2l3-0.4l3.1-0.3l3,0.3l3,0.4l3,0.2l3,0.3l3-0l3.1-0.1l3-0.3l3-0.2l3,0.6l3-0l3-0.6l3.1-0l3,0.2l3-0.3l3-0.3" fill="none" stroke="#e24d42" stroke-width="1" stroke-opacity="0.75" stroke-linejoin="round"/></g><text x="1005.3" y="712.3" font-size="12" fill="#33b5e5" font-weight="bold" text-anchor="end" textLength="23.2" lengthAdjust="spacingAndGlyphs" >max</text><text x="1056.0" y="712.3" font-size="12" fill="#33b5e5" font-weight="bold" text-anchor="end" textLength="19.3" lengthAdjust="spacingAndGlyphs" >avg</text><text x="1108.5" y="712.3" font-size="12" fill="#33b5e5" font-weight="bold" text-anchor="end" textLength="39.5" lengthAdjust="spacingAndGlyphs" >current</text><path d="M1107.5,705.8 h7 l-3.5,3.5 Z" fill="#33b5e5" stroke="none" stroke-width="1" /><rect x="642" y="731" width="12.5" height="3" rx="0" fill="#6ed0e0" /><text x="662.8" y="735.4" font-size="12" fill="#d0d2d4" font-weight="normal" text-anchor="start" >CPU Total</text><text x="1005.3" y="735.4" font-size="12" fill="#fff" font-weight="normal" text-anchor="end" stroke="#fff" stroke-width="0.3" >38%</text><text x="1056.0" y="735.4" font-size="12" fill="#fff" font-weight="normal" text-anchor="end" stroke="#fff" stroke-width="0.3" >17%</text><text x="1113.5" y="735.4" font-size="12" fill="#fff" font-weight="normal" text-anchor="end" stroke="#fff" stroke-width="0.3" >24%</text><rect x="642" y="756.7" width="12.5" height="3.0" rx="0" fill="#ef843c" /><text x="662.8" y="761.1" font-size="12" fill="#d0d2d4" font-weight="normal" text-anchor="start" >User</text><text x="1005.3" y="761.1" font-size="12" fill="#fff" font-weight="normal" text-anchor="end" stroke="#fff" stroke-width="0.3" >22%</text><text x="1056.0" y="761.1" font-size="12" fill="#fff" font-weight="normal" text-anchor="end" stroke="#fff" stroke-width="0.3" >9%</text><text x="1113.5" y="761.1" font-size="12" fill="#fff" font-weight="normal" text-anchor="end" stroke="#fff" stroke-width="0.3" >13%</text><rect x="1124.5" y="702.5" width="6.0" height="32.5" rx="3" fill="rgba(180,190,200,0.45)" /><line x1="1130" y1="735" x2="1130" y2="752" stroke="rgba(180,190,200,0.25)" stroke-width="1" /><path d="M1131,769 H1136 V763.5" fill="none" stroke="#fff" stroke-width="2" /><rect x="1149" y="520" width="218" height="121" rx="3" fill="#299c46" /><text x="1258" y="539.9" font-size="13.3" fill="#fff" font-weight="bold" text-anchor="middle" textLength="78.4" lengthAdjust="spacingAndGlyphs">CPU 1 Temp</text><path d="M1159.3,620.9 L1161.8,620.5 L1164.3,619.6 L1166.8,619.3 L1169.3,619.9 L1171.8,620.2 L1174.3,619.5 L1176.8,619.0 L1179.2,619.0 L1181.7,618.5 L1184.2,618.5 L1186.7,619.2 L1189.2,619.1 L1191.7,619.1 L1194.2,618.9 L1196.7,618.8 L1199.2,620.0 L1201.7,619.7 L1204.2,618.1 L1206.7,617.7 L1209.2,617.7 L1211.7,617.0 L1214.2,615.7 L1216.7,615.0 L1219.1,615.7 L1221.6,615.8 L1224.1,615.1 L1226.6,614.4 L1229.1,613.8 L1231.6,613.9 L1234.1,614.8 L1236.6,614.8 L1239.1,613.7 L1241.6,613.7 L1244.1,614.8 L1246.6,614.5 L1249.1,614.0 L1251.6,614.8 L1254.1,615.3 L1256.6,615.0 L1259.0,615.2 L1261.5,616.0 L1264.0,616.2 L1266.5,616.9 L1269.0,617.5 L1271.5,617.4 L1274.0,617.3 L1276.5,617.0 L1279.0,616.4 L1281.5,615.7 L1284.0,615.3 L1286.5,615.1 L1289.0,615.2 L1291.5,615.9 L1294.0,616.9 L1296.5,617.1 L1298.9,616.5 L1301.4,616.1 L1303.9,616.4 L1306.4,617.1 L1308.9,616.7 L1311.4,615.6 L1313.9,615.3 L1316.4,615.8 L1318.9,616.4 L1321.4,615.8 L1323.9,614.8 L1326.4,614.6 L1328.9,614.9 L1331.4,616.4 L1333.9,620.5 L1336.4,624.4 L1338.8,625.7 L1341.3,626.1 L1343.8,626.6 L1346.3,627.8 L1348.8,628.9 L1351.3,628.6 L1353.8,628.9 L1356.3,630.9 L1356.3,631.5 L1159.3,631.5 Z" fill="#6a7036" stroke="none" stroke-width="1" /><path d="M1159.3,620.9 L1161.8,620.5 L1164.3,619.6 L1166.8,619.3 L1169.3,619.9 L1171.8,620.2 L1174.3,619.5 L1176.8,619.0 L1179.2,619.0 L1181.7,618.5 L1184.2,618.5 L1186.7,619.2 L1189.2,619.1 L1191.7,619.1 L1194.2,618.9 L1196.7,618.8 L1199.2,620.0 L1201.7,619.7 L1204.2,618.1 L1206.7,617.7 L1209.2,617.7 L1211.7,617.0 L1214.2,615.7 L1216.7,615.0 L1219.1,615.7 L1221.6,615.8 L1224.1,615.1 L1226.6,614.4 L1229.1,613.8 L1231.6,613.9 L1234.1,614.8 L1236.6,614.8 L1239.1,613.7 L1241.6,613.7 L1244.1,614.8 L1246.6,614.5 L1249.1,614.0 L1251.6,614.8 L1254.1,615.3 L1256.6,615.0 L1259.0,615.2 L1261.5,616.0 L1264.0,616.2 L1266.5,616.9 L1269.0,617.5 L1271.5,617.4 L1274.0,617.3 L1276.5,617.0 L1279.0,616.4 L1281.5,615.7 L1284.0,615.3 L1286.5,615.1 L1289.0,615.2 L1291.5,615.9 L1294.0,616.9 L1296.5,617.1 L1298.9,616.5 L1301.4,616.1 L1303.9,616.4 L1306.4,617.1 L1308.9,616.7 L1311.4,615.6 L1313.9,615.3 L1316.4,615.8 L1318.9,616.4 L1321.4,615.8 L1323.9,614.8 L1326.4,614.6 L1328.9,614.9 L1331.4,616.4 L1333.9,620.5 L1336.4,624.4 L1338.8,625.7 L1341.3,626.1 L1343.8,626.6 L1346.3,627.8 L1348.8,628.9 L1351.3,628.6 L1353.8,628.9 L1356.3,630.9" fill="none" stroke="#88461f" stroke-width="1.6" /><text x="1191.0" y="609.8" font-size="41" fill="#fff" font-weight="normal" text-anchor="start" stroke="#fff" stroke-width="1.1" textLength="134.9" lengthAdjust="spacingAndGlyphs" >39.6 °C</text><path d="M1358,638 H1363 V632.5" fill="none" stroke="#fff" stroke-width="2" /><rect x="1149" y="652" width="218" height="120" rx="3" fill="#299c46" /><text x="1258" y="671.9" font-size="13.3" fill="#fff" font-weight="bold" text-anchor="middle" textLength="78.4" lengthAdjust="spacingAndGlyphs">CPU 2 Temp</text><path d="M1159.3,752.7 L1161.8,752.3 L1164.3,751.5 L1166.8,750.7 L1169.3,750.6 L1171.8,751.0 L1174.3,751.4 L1176.8,750.9 L1179.2,750.2 L1181.7,750.0 L1184.2,749.5 L1186.7,749.8 L1189.2,751.2 L1191.7,751.7 L1194.2,751.4 L1196.7,752.1 L1199.2,752.3 L1201.7,750.7 L1204.2,749.2 L1206.7,748.4 L1209.2,748.2 L1211.7,748.9 L1214.2,749.0 L1216.7,748.0 L1219.1,747.2 L1221.6,747.7 L1224.1,748.4 L1226.6,748.5 L1229.1,748.4 L1231.6,748.0 L1234.1,747.6 L1236.6,747.4 L1239.1,746.6 L1241.6,746.2 L1244.1,746.5 L1246.6,746.3 L1249.1,746.2 L1251.6,746.7 L1254.1,746.8 L1256.6,746.8 L1259.0,747.4 L1261.5,748.3 L1264.0,748.7 L1266.5,748.9 L1269.0,748.4 L1271.5,747.9 L1274.0,748.9 L1276.5,749.7 L1279.0,749.0 L1281.5,748.3 L1284.0,748.4 L1286.5,748.8 L1289.0,749.6 L1291.5,749.6 L1294.0,749.1 L1296.5,749.3 L1298.9,749.3 L1301.4,749.1 L1303.9,749.4 L1306.4,749.8 L1308.9,749.1 L1311.4,747.6 L1313.9,746.9 L1316.4,747.0 L1318.9,747.0 L1321.4,746.6 L1323.9,746.4 L1326.4,747.0 L1328.9,747.5 L1331.4,748.5 L1333.9,752.7 L1336.4,756.7 L1338.8,757.9 L1341.3,758.3 L1343.8,758.5 L1346.3,759.3 L1348.8,760.4 L1351.3,760.3 L1353.8,760.6 L1356.3,762.9 L1356.3,763.5 L1159.3,763.5 Z" fill="#6a7036" stroke="none" stroke-width="1" /><path d="M1159.3,752.7 L1161.8,752.3 L1164.3,751.5 L1166.8,750.7 L1169.3,750.6 L1171.8,751.0 L1174.3,751.4 L1176.8,750.9 L1179.2,750.2 L1181.7,750.0 L1184.2,749.5 L1186.7,749.8 L1189.2,751.2 L1191.7,751.7 L1194.2,751.4 L1196.7,752.1 L1199.2,752.3 L1201.7,750.7 L1204.2,749.2 L1206.7,748.4 L1209.2,748.2 L1211.7,748.9 L1214.2,749.0 L1216.7,748.0 L1219.1,747.2 L1221.6,747.7 L1224.1,748.4 L1226.6,748.5 L1229.1,748.4 L1231.6,748.0 L1234.1,747.6 L1236.6,747.4 L1239.1,746.6 L1241.6,746.2 L1244.1,746.5 L1246.6,746.3 L1249.1,746.2 L1251.6,746.7 L1254.1,746.8 L1256.6,746.8 L1259.0,747.4 L1261.5,748.3 L1264.0,748.7 L1266.5,748.9 L1269.0,748.4 L1271.5,747.9 L1274.0,748.9 L1276.5,749.7 L1279.0,749.0 L1281.5,748.3 L1284.0,748.4 L1286.5,748.8 L1289.0,749.6 L1291.5,749.6 L1294.0,749.1 L1296.5,749.3 L1298.9,749.3 L1301.4,749.1 L1303.9,749.4 L1306.4,749.8 L1308.9,749.1 L1311.4,747.6 L1313.9,746.9 L1316.4,747.0 L1318.9,747.0 L1321.4,746.6 L1323.9,746.4 L1326.4,747.0 L1328.9,747.5 L1331.4,748.5 L1333.9,752.7 L1336.4,756.7 L1338.8,757.9 L1341.3,758.3 L1343.8,758.5 L1346.3,759.3 L1348.8,760.4 L1351.3,760.3 L1353.8,760.6 L1356.3,762.9" fill="none" stroke="#88461f" stroke-width="1.6" /><text x="1191.0" y="741.8" font-size="41" fill="#fff" font-weight="normal" text-anchor="start" stroke="#fff" stroke-width="1.1" textLength="134.9" lengthAdjust="spacingAndGlyphs" >44.3 °C</text><path d="M1358,769 H1363 V763.5" fill="none" stroke="#fff" stroke-width="2" /><rect x="1378" y="520" width="523" height="252" rx="3" fill="rgba(0,0,0,0.27)" /><text x="1639.5" y="539.9" font-size="13.3" fill="#fff" font-weight="bold" text-anchor="middle" textLength="38.5" lengthAdjust="spacingAndGlyphs">CPU 2</text><text x="1891.5" y="539.9" font-size="12.2" fill="#33b5e5" font-weight="bold" text-anchor="end" textLength="86.7" lengthAdjust="spacingAndGlyphs">Last 30 minutes</text><circle cx="1796.2" cy="535.5" r="4.5" fill="none" stroke="#33b5e5" stroke-width="1.6"/><path d="M1796.2,532.85 V535.8 H1793.974" fill="none" stroke="#33b5e5" stroke-width="1.4" /><line x1="1423.5" y1="569.3" x2="1876.5" y2="569.3" stroke="rgba(255,255,255,0.16)" stroke-width="1" /><line x1="1423.5" y1="619.6" x2="1876.5" y2="619.6" stroke="rgba(255,255,255,0.16)" stroke-width="1" /><line x1="1423.5" y1="669.8" x2="1876.5" y2="669.8" stroke="rgba(255,255,255,0.16)" stroke-width="1" /><line x1="1436.1" y1="569.3" x2="1436.1" y2="669.8" stroke="rgba(255,255,255,0.16)" stroke-width="1" /><line x1="1511.6" y1="569.3" x2="1511.6" y2="669.8" stroke="rgba(255,255,255,0.16)" stroke-width="1" /><line x1="1587" y1="569.3" x2="1587" y2="669.8" stroke="rgba(255,255,255,0.16)" stroke-width="1" /><line x1="1662.9" y1="569.3" x2="1662.9" y2="669.8" stroke="rgba(255,255,255,0.16)" stroke-width="1" /><line x1="1738.8" y1="569.3" x2="1738.8" y2="669.8" stroke="rgba(255,255,255,0.16)" stroke-width="1" /><line x1="1814.2" y1="569.3" x2="1814.2" y2="669.8" stroke="rgba(255,255,255,0.16)" stroke-width="1" /><text x="1416.7" y="572.3" font-size="12" fill="#e6e7e8" font-weight="normal" text-anchor="end" letter-spacing="-0.25" stroke="#e6e7e8" stroke-width="0.3" >100%</text><text x="1416.7" y="622.6" font-size="12" fill="#e6e7e8" font-weight="normal" text-anchor="end" letter-spacing="-0.25" stroke="#e6e7e8" stroke-width="0.3" >50%</text><text x="1416.7" y="672.8" font-size="12" fill="#e6e7e8" font-weight="normal" text-anchor="end" letter-spacing="-0.25" stroke="#e6e7e8" stroke-width="0.3" >0%</text><text x="1436.1" y="687.0" font-size="12" fill="#e6e7e8" font-weight="normal" text-anchor="middle" letter-spacing="-0.25" stroke="#e6e7e8" stroke-width="0.3" textLength="29" lengthAdjust="spacingAndGlyphs" >19:50</text><text x="1511.6" y="687.0" font-size="12" fill="#e6e7e8" font-weight="normal" text-anchor="middle" letter-spacing="-0.25" stroke="#e6e7e8" stroke-width="0.3" textLength="29" lengthAdjust="spacingAndGlyphs" >19:55</text><text x="1587.0" y="687.0" font-size="12" fill="#e6e7e8" font-weight="normal" text-anchor="middle" letter-spacing="-0.25" stroke="#e6e7e8" stroke-width="0.3" textLength="29" lengthAdjust="spacingAndGlyphs" >20:00</text><text x="1662.9" y="687.0" font-size="12" fill="#e6e7e8" font-weight="normal" text-anchor="middle" letter-spacing="-0.25" stroke="#e6e7e8" stroke-width="0.3" textLength="29" lengthAdjust="spacingAndGlyphs" >20:05</text><text x="1738.8" y="687.0" font-size="12" fill="#e6e7e8" font-weight="normal" text-anchor="middle" letter-spacing="-0.25" stroke="#e6e7e8" stroke-width="0.3" textLength="29" lengthAdjust="spacingAndGlyphs" >20:10</text><text x="1814.2" y="687.0" font-size="12" fill="#e6e7e8" font-weight="normal" text-anchor="middle" letter-spacing="-0.25" stroke="#e6e7e8" stroke-width="0.3" textLength="29" lengthAdjust="spacingAndGlyphs" >20:15</text><clipPath id="cc9"><rect x="1426" y="560" width="448" height="110.5"/></clipPath><g clip-path="url(#cc9)"><path d="M1426.0,660.4l3.3,0.2l3.3,4.3l3.4,1.3l3.3-0.5l3.3-2.5l3.3,0l3.3-1.9l3.3,0.1l3.4,1.9l3.3,0.6l3.3-2.2l3.3,0.3l3.3,3.7l3.4-0.6l3.3,0l3.3-0.4l3.3,0.8l3.3,1.7l3.4-1.1l3.3-3.5l3.3,0.4l3.3,0.4l3.3-1.1l3.3-2.5l3.4-10.2l3.3-8.6l3.3,9.9l3.3,4.4l3.3,1.6l3.4,5.3l3.3-1.5l3.3-7l3.3-10.6l3.3-1.2l3.3,3.2l3.4,3.8l3.3,2.9l3.3,5.9l3.3-3l3.3-6.5l3.4,0.7l3.3,0.5l3.3-7l3.3,5.4l3.3-6.1l3.4-2.3l3.3,5.4l3.3,4.8l3.3-6.5l3.3,3.4l3.3,4.7l3.4,2.4l3.3-2.4l3.3,0.6l3.3,2.5l3.3,1.5l3.4,5l3.3,2.4l3.3-0.6l3.3,1l3.3-3.2l3.3-5.7l3.4,1.2l3.3,2.2l3.3,0.3l3.3-4.4l3.3,4.7l3.4,3l3.3,2.1l3.3-3.5l3.3-2.1l3.3,0.2l3.4-2.2l3.3-1.7l3.3,2.1l3.3,4.6l3.3,4.8l3.3-0.7l3.4,0.3l3.3-3.5l3.3-6.2l3.3-0.3l3.3,5.7l3.4-1.1l3.3-1.9l3.3,0.2l3.3,1l3.3,1l3.3-6.3l3.4-0.5l3.3,5.4l3.3,2.3l3.3-4.7l3.3-7l3.4-2.4l3.3,4.9l3.3,2.2l3.3,8.2l3.3,2.1l3.4-3.3l3.3-7.8l3.3-4.6l3.3,3.2l3.3,0.1l3.3,2.6l3.4,3l3.3,3.7l3.3-4.4l3.3-4.1l3.3,4.2l3.4-1.2l3.3-2.4l3.3,0.7l3.3,3.2l3.3,1.7l3.3-2.5l3.4,1.6l3.3,3.1l3.3,1.3l3.3-3.7l3.3-6.2l3.4,3.7l3.3,5.2l3.3,2.5l3.3,0.3l3.3-4.1l3.4-3.3l3.3-0.6l3.3-4.3l3.3-2.5l3.3,8.6l3.3,2.1l3.4-4.6l3.3,0.7l3.3-2.3V670.5H1426.0Z" fill="#623a62" stroke="none" stroke-width="1" fill-opacity="0.95"/><path d="M1426.0,649.1l3.3,12.9l3.3-8.2l3.4,5.6l3.3,4l3.3-7.9l3.3,6.1l3.3-6.3l3.3,2.2l3.4-2l3.3,4.6l3.3-6.6l3.3,8.2l3.3,1.3l3.4-0l3.3,2.1l3.3-8.9l3.3-2l3.3,12.5l3.4-3.6l3.3-6.7l3.3-0.4l3.3,2.4l3.3,2.3l3.3-0.9l3.4-12.7l3.3-46l3.3,28.4l3.3,14.7l3.3-34.4l3.4,48l3.3-15.5l3.3,4.5l3.3-31.7l3.3,7.8l3.3,14.8l3.4-5.7l3.3,20.9l3.3,1.9l3.3-2.2l3.3-28.9l3.4,27l3.3-1.9l3.3-19.6l3.3,5.9l3.3-3.5l3.4,7.8l3.3,2.8l3.3-7.6l3.3-27.9l3.3,10.8l3.3,33.2l3.4-11.1l3.3,5.8l3.3,4l3.3-5.6l3.3,12l3.4-7.8l3.3,0.8l3.3,11.4l3.3,1.4l3.3-2.2l3.3-9.7l3.4-1.3l3.3-5.9l3.3,15.8l3.3-7.9l3.3,4.9l3.4-4.7l3.3,8l3.3-20l3.3,12.8l3.3,3.3l3.4-18l3.3,13.4l3.3,1.2l3.3,11.1l3.3,1.9l3.3-11.6l3.4,12.1l3.3-3.3l3.3-10.9l3.3-11.5l3.3,19.2l3.4-6.6l3.3,2l3.3,5.3l3.3-2.1l3.3,3.4l3.3-9l3.4,2.4l3.3,1.1l3.3,1.8l3.3,0.1l3.3-10.4l3.4,0.1l3.3-16.5l3.3,16.3l3.3,10.2l3.3,6.3l3.4-5.8l3.3-5.8l3.3-3.7l3.3-14.9l3.3,3l3.3,9.7l3.4,2.5l3.3,11.7l3.3-10.7l3.3-5.6l3.3,5.3l3.4-11.6l3.3,14.3l3.3,0l3.3,0.9l3.3,5.3l3.3-4.3l3.4,2.4l3.3,5.6l3.3-15l3.3,13.3l3.3-28.1l3.4,23.2l3.3,5.3l3.3,1l3.3,2.3l3.3-19.2l3.4,11.2l3.3-1l3.3-28l3.3,21.3l3.3-14l3.3,18.3l3.4,4.3l3.3-10.5l3.3,6.7V670.5H1426.0Z" fill="#eab839" stroke="none" stroke-width="1" fill-opacity="0.05"/><path d="M1426.0,660.4l3.3-0.9l3.3,3.9l3.4,2.8l3.3-3.5l3.3,0.9l3.3-1.5l3.3-6.7l3.3,0.9l3.4-0.3l3.3,3.8l3.3-0.9l3.3,1.8l3.3,3.1l3.4,2.1l3.3-3.9l3.3-2l3.3,3.6l3.3,2.8l3.4-2.7l3.3-4.1l3.3-1.8l3.3-7.6l3.3,10.3l3.3-5.2l3.4-14.9l3.3-34.7l3.3,32l3.3,6.3l3.3,11.2l3.4,4.8l3.3-13.3l3.3-2.6l3.3-2.7l3.3-21.5l3.3,25.2l3.4-10.2l3.3-6.2l3.3,27.6l3.3-3.9l3.3-10.6l3.4-2.3l3.3-22.2l3.3,8l3.3,16.9l3.3-0.3l3.4-44.4l3.3,42.2l3.3-1.5l3.3-9.5l3.3,19.7l3.3,0l3.4-11.6l3.3,14.4l3.3-14.7l3.3,7.1l3.3,6.6l3.4,3.2l3.3,9l3.3-3.2l3.3-0.2l3.3-1.3l3.3-20.4l3.4,12.2l3.3,8.6l3.3-3.9l3.3-0.2l3.3-2.9l3.4,7.8l3.3,4.5l3.3-4.6l3.3-2.3l3.3-2.2l3.4,1.9l3.3-9.7l3.3,9.4l3.3-11.6l3.3,20.1l3.3,1l3.4-2.3l3.3-12l3.3,2.6l3.3-4.4l3.3,2.8l3.4,1.2l3.3,0.4l3.3,0.3l3.3,4.2l3.3,0.6l3.3-10.2l3.4,3l3.3,0.4l3.3,7.6l3.3-7l3.3-13.5l3.4-1.3l3.3,9.5l3.3,2.2l3.3,11.3l3.3,0.6l3.4-0.7l3.3-14.2l3.3,1.3l3.3-6.5l3.3,0.2l3.3,13.4l3.4-24.4l3.3,25.8l3.3-20.1l3.3,11.4l3.3,4.1l3.4,1.2l3.3-1l3.3-3.5l3.3,6.5l3.3,1.1l3.3-7.9l3.4,9.7l3.3,0.2l3.3,4.4l3.3-5.3l3.3-15.6l3.4,7.6l3.3-9.2l3.3,20.7l3.3,0.8l3.3-0.2l3.4-26.8l3.3,21.7l3.3-15.3l3.3,4.8l3.3,5.5l3.3,2.8l3.4-3l3.3-2.8l3.3,5.4V670.5H1426.0Z" fill="#7eb26d" stroke="none" stroke-width="1" fill-opacity="0.05"/><path d="M1426.0,656.0l3.3-1.8l3.3,10.7l3.4,0.7l3.3-0.5l3.3-10l3.3,3.2l3.3-4.8l3.3,7.5l3.4,2.2l3.3-1.1l3.3-5.9l3.3,6l3.3-6.6l3.4-0.4l3.3,10.1l3.3-0.5l3.3-0.9l3.3,3.3l3.4-1.1l3.3-4.6l3.3-0l3.3,1.2l3.3,0.2l3.3-3.3l3.4-21l3.3-5.5l3.3,20.1l3.3-5.4l3.3,9.1l3.4,2.1l3.3,1.7l3.3-4.5l3.3-26.8l3.3,15.2l3.3-10.9l3.4,16.2l3.3,2.4l3.3,1.1l3.3-1.7l3.3-2.4l3.4-9.5l3.3,10.8l3.3-6.5l3.3,1.2l3.3-11l3.4,7.2l3.3-18.3l3.3,14.8l3.3-1.2l3.3-25l3.3,40.6l3.4-3.1l3.3-6.2l3.3,11l3.3-4.9l3.3,6.2l3.4,3l3.3,3.9l3.3-0l3.3,1l3.3-5.1l3.3-6.4l3.4,0.7l3.3,6.3l3.3,0.7l3.3-14.6l3.3,12.1l3.4,0.5l3.3,3.6l3.3-2.4l3.3-3.1l3.3,4.3l3.4-22.1l3.3,9.5l3.3,8.9l3.3,3.9l3.3,5.7l3.3-4.4l3.4,4.2l3.3-3.5l3.3-6.7l3.3-5.3l3.3-0.1l3.4-1l3.3,9.9l3.3-4.2l3.3,4.2l3.3-2.7l3.3-9.9l3.4,4.9l3.3,9.4l3.3,2.1l3.3-7.1l3.3-13l3.4,1.6l3.3,0.1l3.3,10.1l3.3,1.7l3.3-3.3l3.4,6.7l3.3-9.1l3.3-3.7l3.3,2.6l3.3-0.1l3.3,6.8l3.4-3.4l3.3-6.9l3.3,8.4l3.3-6l3.3,4.9l3.4-10l3.3-9.1l3.3,14.2l3.3,6.2l3.3,0.6l3.3-4.9l3.4-9.3l3.3,17.6l3.3,1l3.3-0.2l3.3-21.8l3.4,15.6l3.3,3.1l3.3,8.3l3.3,0.2l3.3-4.9l3.4-2.4l3.3,0.3l3.3-6.3l3.3-5.6l3.3,9l3.3,6.2l3.4-7.5l3.3,3.3l3.3-5.7V670.5H1426.0Z" fill="#6ed0e0" stroke="none" stroke-width="1" fill-opacity="0.05"/><path d="M1426.0,658.2l3.3,1.6l3.3,2.7l3.4,0.9l3.3-0.8l3.3-4.8l3.3-0.8l3.3,2.5l3.3-3l3.4,5.9l3.3-11l3.3,5.3l3.3,2.8l3.3-6.8l3.4,8.6l3.3,2.3l3.3-12.8l3.3,11.1l3.3,1.7l3.4,1.3l3.3-13.3l3.3,3.7l3.3,3.3l3.3-3.4l3.3,2.3l3.4-18.7l3.3-6.3l3.3,4.1l3.3,8.8l3.3-15.7l3.4,3.8l3.3,24.5l3.3-17.9l3.3-14.1l3.3,4.1l3.3-6.6l3.4-17.1l3.3,26.9l3.3-16.3l3.3,1.1l3.3,15.1l3.4,4.7l3.3-7.2l3.3-14.6l3.3,9.7l3.3-3.2l3.4-26l3.3,43.6l3.3-10.7l3.3,10.3l3.3-7.5l3.3,14.4l3.4-9.6l3.3,9.8l3.3-24.7l3.3,10.6l3.3,18.5l3.4,1.1l3.3,8.3l3.3-3.9l3.3,4.7l3.3-22.5l3.3,5.4l3.4-1.8l3.3,10.4l3.3-10l3.3-14.9l3.3,24.6l3.4,5l3.3-13.5l3.3,12l3.3-4.8l3.3-0.5l3.4-8.7l3.3,3.3l3.3,3l3.3,10.9l3.3,3.7l3.3-0.3l3.4-1.6l3.3-0.2l3.3-12.9l3.3,4l3.3,7.6l3.4-5.9l3.3-6.3l3.3,1.8l3.3,4.3l3.3,2.5l3.3-16.9l3.4-1.9l3.3,14.2l3.3,2.1l3.3,0.4l3.3-20.2l3.4,3l3.3,3.8l3.3,1.5l3.3,11.8l3.3,9.4l3.4-9.9l3.3-3.2l3.3-7.3l3.3-4l3.3-3l3.3,4.9l3.4,14.9l3.3,2.8l3.3-6.7l3.3-14.3l3.3,5.3l3.4,2.8l3.3-2.1l3.3-2.2l3.3,7.2l3.3-9.4l3.3,15l3.4-0.9l3.3,5.5l3.3-4.1l3.3-2.2l3.3-9.2l3.4,3.3l3.3,10.8l3.3,3l3.3-14.7l3.3-6.4l3.4,14.1l3.3-9.7l3.3-14.1l3.3,10.3l3.3,5.4l3.3,7.7l3.4-9.6l3.3-0.7l3.3,2.3V670.5H1426.0Z" fill="#ef843c" stroke="none" stroke-width="1" fill-opacity="0.05"/><path d="M1426.0,658.4l3.3-2.8l3.3,2.8l3.4,7.7l3.3-2l3.3-16.2l3.3,12.5l3.3-2.5l3.3-7.9l3.4,8.7l3.3,1.8l3.3-6.1l3.3,6.8l3.3,1.4l3.4-0.3l3.3,1.7l3.3,0l3.3-1.2l3.3,1.3l3.4,0.3l3.3-4.8l3.3,1.1l3.3,2.1l3.3-5.6l3.3,1.9l3.4-12.8l3.3-28.7l3.3,29.3l3.3-8.8l3.3,17.5l3.4,1.6l3.3-20.4l3.3,6.1l3.3-45l3.3,34.6l3.3-8l3.4,9.2l3.3,13.1l3.3,4.7l3.3-7.2l3.3,3.9l3.4-11.2l3.3-0.5l3.3,1.8l3.3,0.9l3.3-13.9l3.4,11.7l3.3-5.3l3.3-0.8l3.3-1.7l3.3,7.8l3.3,1l3.4,3.3l3.3-1.4l3.3-11.5l3.3,9.8l3.3,14.2l3.4,5.4l3.3,1.2l3.3,2l3.3,0.2l3.3-7.1l3.3,2.2l3.4-4.4l3.3-8.4l3.3-3.1l3.3,10.5l3.3,4.3l3.4,5.6l3.3-1.9l3.3-2.4l3.3,0.1l3.3-4.1l3.4-13.7l3.3,10.4l3.3-1.4l3.3,13.2l3.3,1.8l3.3,2.9l3.4-1.9l3.3-4.8l3.3-9.9l3.3-10l3.3,19.8l3.4-2.8l3.3,1l3.3,0.7l3.3-17.1l3.3,12.6l3.3-0.7l3.4-2.6l3.3,6.3l3.3-6.1l3.3-8.2l3.3-22.1l3.4,19.8l3.3-7.6l3.3,16.5l3.3,6.2l3.3,8.2l3.4-2.7l3.3-31.3l3.3-8.6l3.3,18.8l3.3,10.5l3.3,3.9l3.4-1.2l3.3,6.2l3.3-10.6l3.3,2.9l3.3-17.4l3.4,4.3l3.3,11.5l3.3-3l3.3-15.3l3.3,23.2l3.3-6.8l3.4,4.5l3.3,9.4l3.3-0.6l3.3-4.5l3.3-2.1l3.4-3.9l3.3,7.9l3.3,4.2l3.3,0.6l3.3-5l3.4-15.1l3.3-19.9l3.3,17.3l3.3,7.6l3.3,5l3.3,4.7l3.4-8.8l3.3-4.1l3.3,1V670.5H1426.0Z" fill="#1f78c1" stroke="none" stroke-width="1" fill-opacity="0.05"/><path d="M1426.0,655.7l3.3,0.8l3.3,6l3.4,3.1l3.3-3.7l3.3-1.7l3.3-2l3.3-3.8l3.3,2.3l3.4,4.8l3.3-2.7l3.3-0.1l3.3,1.5l3.3,4.4l3.4-0.7l3.3,0l3.3-2.4l3.3,2l3.3,3l3.4-11.1l3.3,4l3.3,2.4l3.3-2.8l3.3-7.8l3.3,4.8l3.4-23.1l3.3-3.6l3.3,9l3.3,10.8l3.3,5.1l3.4-5.6l3.3,6.7l3.3-4.5l3.3-24.8l3.3,1.1l3.3,3.9l3.4-33l3.3,40.9l3.3,14.3l3.3-11.2l3.3-1l3.4-5.4l3.3,5.4l3.3-12l3.3,5.6l3.3,3.5l3.4-0.7l3.3,6.1l3.3-21.6l3.3,15.1l3.3-6.1l3.3,19.9l3.4-9.7l3.3,4.9l3.3,4l3.3-5.9l3.3-4.6l3.4,18.1l3.3-2.3l3.3-0.2l3.3,5.3l3.3-6.8l3.3-2.8l3.4-6.5l3.3-0.6l3.3,8.5l3.3-17.4l3.3,18.3l3.4,4.8l3.3,0.3l3.3-4.6l3.3-4.5l3.3,2.1l3.4-3.2l3.3-2.2l3.3,11l3.3-0.5l3.3-5.8l3.3,5.8l3.4,6.4l3.3-3.5l3.3-18.7l3.3,1.5l3.3,15.7l3.4,0.9l3.3-7.1l3.3,6.5l3.3-4.2l3.3-3l3.3-5.6l3.4-4.7l3.3-8.1l3.3,29l3.3-14.2l3.3-4.6l3.4,3l3.3-8.1l3.3,8.9l3.3,10.9l3.3-12l3.4,2.9l3.3-8.3l3.3,0.5l3.3,8.8l3.3-10l3.3,10.2l3.4,0.3l3.3-9.4l3.3,10.4l3.3-9.3l3.3,9.8l3.4-1.2l3.3-2.8l3.3,3.4l3.3-12.8l3.3,10.9l3.3-1.5l3.4,10l3.3,1.4l3.3,0.8l3.3-5.8l3.3-3.8l3.4,4.1l3.3,3.2l3.3,3.9l3.3-17.2l3.3,0.8l3.4,10.2l3.3-8.2l3.3-0.6l3.3,1.4l3.3,6.6l3.3-22.6l3.4,15.2l3.3,3.8l3.3-29V670.5H1426.0Z" fill="#e24d42" stroke="none" stroke-width="1" fill-opacity="0.05"/><path d="M1426.0,657.2l3.3-1.9l3.3,7.3l3.4,4l3.3-9.2l3.3-0.2l3.3,1.4l3.3-1.8l3.3,0.5l3.4,6.1l3.3,0.5l3.3-6l3.3,2.6l3.3,2.8l3.4-8.8l3.3,10.3l3.3-9.1l3.3,9.8l3.3,1l3.4-11.8l3.3,8l3.3,0.7l3.3-3.4l3.3,2.3l3.3-6.4l3.4-6.3l3.3-31.8l3.3,23.1l3.3,7.6l3.3,4.6l3.4,7.4l3.3-5.1l3.3-7.7l3.3-14.3l3.3,8.5l3.3-0.8l3.4-27.3l3.3,32.3l3.3,8.1l3.3-2.7l3.3-11.7l3.4,5.4l3.3-4.6l3.3-4.5l3.3,0.9l3.3-15.2l3.4,18.2l3.3-1l3.3-0.9l3.3-14.2l3.3-1.6l3.3,28.5l3.4,0.4l3.3-5.8l3.3-21l3.3,22.9l3.3-7.1l3.4,0.8l3.3,6.1l3.3,6.6l3.3,7.6l3.3-5.8l3.3-5.8l3.4,7l3.3-1.8l3.3,0.5l3.3-1.9l3.3-0.5l3.4-5.6l3.3,16.5l3.3-5.3l3.3-3.9l3.3,3.7l3.4-1.1l3.3-9.2l3.3,2.8l3.3-3l3.3,6.7l3.3,9.2l3.4,1.7l3.3-12l3.3,2.5l3.3-0.8l3.3,7.4l3.4-12.1l3.3,1.5l3.3,3.9l3.3,3.6l3.3-3.7l3.3-1.6l3.4-10.6l3.3,12.4l3.3,2.2l3.3-1.1l3.3-10.2l3.4,0.5l3.3-18.6l3.3,23l3.3,8.6l3.3-9.4l3.4-4.5l3.3,0.2l3.3-14.4l3.3,17.9l3.3-3.1l3.3-7l3.4,19.1l3.3,2.5l3.3-7.9l3.3-0.7l3.3,1.6l3.4-3.3l3.3,2.3l3.3,2.8l3.3-22.6l3.3,7.8l3.3,9.2l3.4,5.2l3.3,6.3l3.3-1l3.3-6.1l3.3-4.1l3.4-0.1l3.3-0.4l3.3,13.2l3.3,0.3l3.3-5.4l3.4-2l3.3-4.9l3.3-3.3l3.3-16.8l3.3,23.8l3.3,4.9l3.4-5.1l3.3-6.2l3.3-0.3V670.5H1426.0Z" fill="#cca300" stroke="none" stroke-width="1" fill-opacity="0.05"/><path d="M1426.0,651.0l3.3,6.2l3.3,6.5l3.4-6.7l3.3,7.3l3.3-7l3.3-8.8l3.3,1l3.3,7.9l3.4,0l3.3-1l3.3-3.4l3.3,2.5l3.3-1.8l3.4,11.2l3.3-3.5l3.3-2l3.3,1.5l3.3-4.2l3.4,8.5l3.3-7.1l3.3-2.2l3.3,2.4l3.3,1l3.3-7.7l3.4-12.5l3.3-27.2l3.3,18.8l3.3,16l3.3-22.3l3.4,16l3.3,16.7l3.3-19.7l3.3-12.7l3.3-3.4l3.3,1.7l3.4,11.9l3.3,13l3.3-3.2l3.3,0.4l3.3-17.7l3.4,15l3.3-31.9l3.3,14l3.3-1.8l3.3,8.7l3.4-16l3.3,11.8l3.3-2l3.3,10.5l3.3,1.2l3.3-21.3l3.4-0.3l3.3,25.1l3.3,3.7l3.3-2.4l3.3,7.4l3.4,9.2l3.3-2.8l3.3,2.8l3.3,3.6l3.3-8.2l3.3-19.1l3.4,10.5l3.3,1.9l3.3-2.6l3.3,8.8l3.3,3.2l3.4-0.1l3.3,2.4l3.3-4.1l3.3-7.1l3.3,7.1l3.4-11.7l3.3-2.4l3.3,12.3l3.3,3.4l3.3-6.4l3.3,13.2l3.4,1.4l3.3-6.2l3.3-3.6l3.3-4.2l3.3,7.7l3.4-0.1l3.3-8.7l3.3,7.4l3.3-7l3.3,7.8l3.3-39.8l3.4,14.3l3.3,10.9l3.3,12.1l3.3-9l3.3-27.9l3.4,20.4l3.3,11.8l3.3,2l3.3,2.1l3.3,6.3l3.4-8.7l3.3-7.4l3.3-2.8l3.3-9.9l3.3-4.3l3.3,2.6l3.4,15.3l3.3,2.2l3.3-9.3l3.3,3.3l3.3,3.9l3.4,7.7l3.3-8.9l3.3,9.3l3.3-2.9l3.3-3.2l3.3,7.2l3.4,0.7l3.3,1.5l3.3,2.3l3.3-13.7l3.3,2.5l3.4-17.1l3.3,17.7l3.3,11.6l3.3-2.7l3.3-4.8l3.4-19.1l3.3,16.5l3.3-6.3l3.3-1.8l3.3,5.1l3.3,7.5l3.4-0.7l3.3-0.4l3.3-19.5V670.5H1426.0Z" fill="#447ebc" stroke="none" stroke-width="1" fill-opacity="0.05"/><path d="M1426.0,654.4l3.3,6.2l3.3,1.4l3.4,3.3l3.3-1l3.3-1.1l3.3-5.7l3.3,0.2l3.3,0.1l3.4,3.3l3.3-2.7l3.3-4.1l3.3,4.6l3.3,3.8l3.4-3.5l3.3,1.4l3.3,0.8l3.3-0.3l3.3,3.8l3.4,0.8l3.3-4.3l3.3-5.9l3.3-2.3l3.3,3.8l3.3,1.6l3.4-12.6l3.3-23.6l3.3,19l3.3-18l3.3,7.3l3.4,26l3.3,0.6l3.3-12.9l3.3-18.1l3.3-6l3.3,16.4l3.4,1.7l3.3-8.5l3.3-1.7l3.3,16.7l3.3,0.6l3.4,3l3.3-17.6l3.3,11.5l3.3-4.1l3.3,1.9l3.4-21.5l3.3,11.2l3.3,12.2l3.3-29.6l3.3,18.3l3.3,7.3l3.4,7.6l3.3,5.7l3.3-10.2l3.3-10l3.3,24l3.4-0.9l3.3,3.6l3.3,2.4l3.3-10.3l3.3-3.9l3.3,7l3.4-0.6l3.3-13.7l3.3,4.4l3.3,6.3l3.3-13.8l3.4,24l3.3,2.1l3.3-6l3.3-8.5l3.3-2.9l3.4,7.2l3.3-9.7l3.3,10.1l3.3,9.2l3.3,3l3.3,0.9l3.4-0.2l3.3-5l3.3-11.2l3.3,6.4l3.3,3.8l3.4-6.5l3.3-1.6l3.3,7.7l3.3-19.3l3.3,0.1l3.3,7.2l3.4,2.8l3.3,2.9l3.3,5.9l3.3-6.1l3.3-17.9l3.4,7.7l3.3,1.8l3.3,3.8l3.3,8.1l3.3-3.4l3.4,7.5l3.3-30.6l3.3,10.4l3.3-1.3l3.3,4.5l3.3,3.7l3.4,8.5l3.3,2.5l3.3-1.5l3.3-6.1l3.3-1.5l3.4,5.1l3.3-1.5l3.3-7.6l3.3,9.2l3.3-1.6l3.3-4.6l3.4-15.5l3.3,29.3l3.3,0.9l3.3-4.5l3.3-14.6l3.4,9.7l3.3-9.1l3.3-3.5l3.3,22.8l3.3-4.9l3.4-5.8l3.3,1.1l3.3-4.6l3.3-2.3l3.3,10.6l3.3,0.3l3.4-11.3l3.3,3l3.3-18.1V670.5H1426.0Z" fill="#508642" stroke="none" stroke-width="1" fill-opacity="0.05"/><path d="M1426.0,662.0l3.3-5l3.3,8.7l3.4-8.7l3.3,7.2l3.3-1.9l3.3,0.9l3.3-3.4l3.3-0.4l3.4-8.4l3.3,13.6l3.3-1.8l3.3-3.2l3.3,6.4l3.4-0.9l3.3-6.1l3.3,5.7l3.3,1.2l3.3,0.1l3.4-1.7l3.3-0.9l3.3-3l3.3,3l3.3-1.8l3.3-4.1l3.4-27.8l3.3,3.5l3.3,11.7l3.3,10.4l3.3,0.8l3.4,8l3.3-6.7l3.3-3.9l3.3-6l3.3-6.8l3.3,0.1l3.4-10l3.3,21l3.3,6.5l3.3-3.4l3.3-10.8l3.4,3.9l3.3-10.9l3.3-1.3l3.3,13.8l3.3-18.4l3.4,3.3l3.3,15.5l3.3-8.4l3.3-1l3.3,1.4l3.3,4.2l3.4,9.3l3.3-10.6l3.3-3.9l3.3,8.6l3.3,8.9l3.4,3.5l3.3-1.1l3.3,1.7l3.3,2l3.3-6.7l3.3-6.3l3.4,5.4l3.3-2.2l3.3,5.7l3.3-16.1l3.3,12.4l3.4,3.8l3.3-12.6l3.3,11l3.3-0.8l3.3-0.5l3.4,1.1l3.3-5.7l3.3,3.5l3.3,3.9l3.3,4.8l3.3-15l3.4,14.7l3.3-1.4l3.3-3.9l3.3-17l3.3,16.1l3.4,0.4l3.3-0.1l3.3,1.5l3.3-4.6l3.3,5.3l3.3-9.1l3.4,2l3.3-18.6l3.3,19.1l3.3,4.8l3.3-9.1l3.4-6.5l3.3,7.5l3.3-1.2l3.3,11.1l3.3,3.5l3.4-2.1l3.3-9.1l3.3-20.7l3.3,19.3l3.3-11.4l3.3-9.3l3.4,14.4l3.3-5.9l3.3,14.8l3.3-14.5l3.3,18.9l3.4-7.3l3.3,3.1l3.3-4.9l3.3,3.9l3.3-1.9l3.3,7.2l3.4-12.4l3.3,12l3.3,4.4l3.3-1.8l3.3-9.6l3.4-17.9l3.3,27.6l3.3,0.4l3.3,3.1l3.3-6l3.4-3.2l3.3-0.7l3.3-5.3l3.3-0.1l3.3,8.9l3.3,1.5l3.4-7.4l3.3-1.3l3.3,4.7V670.5H1426.0Z" fill="#c15c17" stroke="none" stroke-width="1" fill-opacity="0.05"/><path d="M1426.0,659.2l3.3,0.5l3.3,5.2l3.4,1.3l3.3-1l3.3-0.9l3.3-0.9l3.3-1.7l3.3,1.6l3.4-0.7l3.3,2l3.3-2.9l3.3,2.4l3.3,1.6l3.4-0.3l3.3-1.5l3.3,0.3l3.3,1.7l3.3,0.6l3.4-1.6l3.3-2.3l3.3,0.4l3.3,1l3.3-1.6l3.3-1.1l3.4-7.2l3.3-12.2l3.3,12.9l3.3,0.2l3.3,2.9l3.4,4.3l3.3-3.8l3.3-2l3.3-16.8l3.3-3.5l3.3,15l3.4-2.9l3.3,0l3.3,9.5l3.3,0.7l3.3-8.8l3.4-1.8l3.3,4.8l3.3-12.6l3.3,9.6l3.3-7.9l3.4-5.6l3.3,16.2l3.3-10l3.3,6.7l3.3-5.4l3.3,10.3l3.4-1.9l3.3-4.5l3.3,4.3l3.3,3.2l3.3,5.5l3.4,0.3l3.3,2.8l3.3-0.2l3.3-0.6l3.3-1l3.3-4.1l3.4-2.8l3.3,3.4l3.3-0.2l3.3-2.6l3.3,3.9l3.4,4.9l3.3-1.2l3.3-3.3l3.3-2.5l3.3,3.6l3.4-5.8l3.3-2.8l3.3,3l3.3,5.6l3.3,6l3.3-1.7l3.4-0.6l3.3-1.3l3.3-9l3.3,1.3l3.3,5.4l3.4-0.8l3.3-3.3l3.3,4.6l3.3-4l3.3,4.1l3.3-2.8l3.4-5.3l3.3,6.7l3.3,0.8l3.3-5.1l3.3-2.1l3.4-5.2l3.3,3.1l3.3,3.7l3.3,7.3l3.3,1.7l3.4-1.3l3.3-8.3l3.3-10.1l3.3,1.9l3.3,8.8l3.3,1.5l3.4,3.8l3.3,1.8l3.3-5.5l3.3-2.8l3.3,4l3.4,2.2l3.3-7.5l3.3,3.4l3.3,4.5l3.3-0.9l3.3-0.8l3.4,3.3l3.3,0.6l3.3-1.2l3.3-0.3l3.3-10.2l3.4,6.5l3.3,3.2l3.3,4.5l3.3-3.4l3.3,0.8l3.4-1.9l3.3-2l3.3-4.5l3.3-7.7l3.3,10.6l3.3,2.7l3.4-1.3l3.3,0.3l3.3-5.6V670.5H1426.0Z" fill="#890f02" stroke="none" stroke-width="1" fill-opacity="0.05"/><path d="M1426.0,663.8l3.3-1.7l3.3,2.4l3.4,3l3.3-1.3l3.3-3l3.3,1.4l3.3-3.3l3.3,2.4l3.4,1.2l3.3-1l3.3-1.9l3.3-0.4l3.3,5.6l3.4,0.3l3.3-0.9l3.3-1.7l3.3,1.7l3.3,0.7l3.4-1l3.3-2.4l3.3,0.5l3.3,1l3.3-2.5l3.3-3.3l3.4-7.6l3.3-5.3l3.3,4.2l3.3,7.8l3.3,1.3l3.4,4.8l3.3-5l3.3-6.1l3.3-1.6l3.3-14.8l3.3,13.4l3.4,4.3l3.3,0.4l3.3,1.6l3.3,2l3.3-11.9l3.4,6.8l3.3-4.5l3.3-2.1l3.3,1.9l3.3-3.2l3.4,1l3.3,5.7l3.3,0l3.3-1.5l3.3,2.1l3.3-2.1l3.4,3.9l3.3-4l3.3,1.3l3.3,4.3l3.3-2.3l3.4,8.6l3.3,0.4l3.3,1.1l3.3,1.1l3.3-2l3.3-8.9l3.4,4.5l3.3-2.9l3.3,1.9l3.3-3l3.3,5.2l3.4,2.1l3.3,3.3l3.3-2.9l3.3-0.8l3.3-2.2l3.4-4.7l3.3,3.1l3.3,1.2l3.3,2.8l3.3,3.7l3.3,0.4l3.4,0.2l3.3-3.3l3.3-2.5l3.3,0.6l3.3,0.4l3.4,1.1l3.3-0.5l3.3-5.1l3.3,5.9l3.3-2.8l3.3-6.3l3.4,4.3l3.3-0.7l3.3,4l3.3-4.7l3.3-7l3.4,0.3l3.3,8.6l3.3-2.3l3.3,3.8l3.3,4.3l3.4-3.8l3.3-6.1l3.3-2l3.3,1.9l3.3,2.1l3.3-3l3.4,4.1l3.3,1.9l3.3-1.3l3.3,0.2l3.3-1.2l3.4-1.9l3.3,3.4l3.3,1l3.3,0l3.3,1.5l3.3-4.7l3.4,1.6l3.3,3.1l3.3,1.3l3.3-3.9l3.3,0.7l3.4-3.2l3.3,5.4l3.3,3.6l3.3-0.2l3.3-2.5l3.4-4.3l3.3-1.8l3.3-3l3.3,3l3.3,5.3l3.3-2.3l3.4-3.6l3.3,2.8l3.3-4.5V670.5H1426.0Z" fill="#0a437c" stroke="none" stroke-width="1" fill-opacity="0.05"/><path d="M1426.0,659.1l3.3,1.5l3.3,3.4l3.4,1.6l3.3,0.2l3.3-4.3l3.3-0.9l3.3,0.5l3.3-1.9l3.4,5l3.3-2.9l3.3,0.3l3.3,0.4l3.3,2.6l3.4-0.2l3.3-0.8l3.3-0.9l3.3,1.9l3.3,2.6l3.4-1l3.3-5.1l3.3,2.6l3.3-2.6l3.3-0.4l3.3-4.4l3.4-12.9l3.3-13l3.3,22.6l3.3-4.4l3.3,6.7l3.4,6.3l3.3-0.5l3.3-10l3.3-2l3.3-2.9l3.3-6.2l3.4,7.8l3.3,1.8l3.3,10.4l3.3-10.4l3.3,4l3.4-8l3.3-2l3.3-0.1l3.3-6.9l3.3,4.8l3.4-9.6l3.3,12.9l3.3,5.9l3.3-7.5l3.3-2.4l3.3,12.8l3.4,0.1l3.3,1.8l3.3-3l3.3-3.5l3.3,6.2l3.4,3.5l3.3,4.6l3.3-0.4l3.3-1.9l3.3-5l3.3-2.7l3.4,0.6l3.3,3.1l3.3,1.5l3.3-6.6l3.3,8.9l3.4,0.1l3.3,3l3.3-3.5l3.3-1l3.3-4.3l3.4-0.9l3.3-4.8l3.3,9.2l3.3,1.6l3.3,3.9l3.3,1.3l3.4,0.3l3.3-5.1l3.3-7.6l3.3,4.4l3.3,4l3.4-1.1l3.3-1.9l3.3-1.6l3.3,3l3.3-1.1l3.3-3l3.4-0.7l3.3,2.5l3.3,2.8l3.3-3.7l3.3-13.4l3.4,1.4l3.3,3.2l3.3,4.7l3.3,8.5l3.3,2.4l3.4-6.2l3.3-8.9l3.3-6.3l3.3,10.6l3.3-0.2l3.3-0.4l3.4,3.9l3.3,5.8l3.3-4.4l3.3-1.5l3.3,1.6l3.4-1l3.3-8.3l3.3,3.8l3.3,5.8l3.3-3.2l3.3-1l3.4,4.5l3.3,5.4l3.3-2.6l3.3-3.6l3.3-2.1l3.4,2.1l3.3,5.6l3.3,0.8l3.3-0.4l3.3-4.3l3.4-5.3l3.3,0.1l3.3-1.3l3.3-7.8l3.3,14.6l3.3-2.6l3.4-1.9l3.3,3.9l3.3-0.5V670.5H1426.0Z" fill="#584477" stroke="none" stroke-width="1" fill-opacity="0.2"/><path d="M1426.0,662.7l3.3-10.1l3.3,13.2l3.4-0l3.3-0.1l3.3-2.6l3.3,0.6l3.3-5.3l3.3-7l3.4,11.9l3.3,1.6l3.3-7.5l3.3,6.2l3.3,1.2l3.4-0.7l3.3,1.2l3.3-9l3.3,7.5l3.3-3.3l3.4-1.2l3.3,2.3l3.3-0l3.3-4.6l3.3,3.5l3.3,1.5l3.4-21.3l3.3,0.8l3.3-43.9l3.3,51.8l3.3,7.6l3.4,5.7l3.3-14.1l3.3-0.2l3.3-16.3l3.3,7.4l3.3,8l3.4,2.2l3.3-19.3l3.3,25.3l3.3-3.7l3.3-4.8l3.4,6.4l3.3-4l3.3-14.3l3.3,12.5l3.3-18.9l3.4,7l3.3,8.9l3.3-5.2l3.3-1.5l3.3,12.4l3.3-0.5l3.4-10.5l3.3,6.2l3.3-1.4l3.3,7.2l3.3-0.1l3.4,9.5l3.3,1.2l3.3-13.5l3.3,14.5l3.3-3.4l3.3-7.3l3.4-4.3l3.3-0l3.3,10.3l3.3,0.3l3.3-12.6l3.4,15.9l3.3,0.1l3.3-0.2l3.3-4.8l3.3-1.8l3.4-1l3.3,2.9l3.3-0.7l3.3,4.6l3.3,5.6l3.3-10l3.4,8.9l3.3-15.3l3.3,5.6l3.3-8.5l3.3,16.1l3.4-17.6l3.3,12l3.3-2.2l3.3,2.2l3.3,3.8l3.3-10.1l3.4,0.3l3.3,7.6l3.3-0.1l3.3-7.5l3.3-8l3.4-1.6l3.3,11.7l3.3-2.8l3.3,11.4l3.3,1.7l3.4-4.1l3.3-13.7l3.3,6.4l3.3,0.4l3.3-2.6l3.3,1.6l3.4,4.9l3.3-12l3.3,14.4l3.3-9.9l3.3,5.9l3.4,2.6l3.3-3.1l3.3-21.1l3.3,23.5l3.3,2.4l3.3-2.7l3.4-0.6l3.3,2.5l3.3,1.8l3.3-17.7l3.3,9.6l3.4,4.9l3.3,5.5l3.3,0.2l3.3,1.2l3.3-7.8l3.4-8.7l3.3,6.4l3.3,0.9l3.3-11.2l3.3,9.3l3.3,7.5l3.4-4.2l3.3-4.1l3.3-13.5V670.5H1426.0Z" fill="#705da0" stroke="none" stroke-width="1" fill-opacity="0.2"/><path d="M1426.0,658.5l3.3,3.8l3.3,2.5l3.4,1l3.3-1.6l3.3,0.4l3.3-2.2l3.3-1l3.3,0l3.4,0.5l3.3,1.2l3.3-3l3.3,1.6l3.3,4.6l3.4-2.3l3.3-0.2l3.3,0.1l3.3,0.3l3.3,3l3.4-0.9l3.3-4.3l3.3-2.1l3.3,4.3l3.3-5l3.3-3.9l3.4-15.7l3.3-7.4l3.3,12.1l3.3,13.1l3.3-0.8l3.4,2.7l3.3,1.7l3.3-9.7l3.3-8.2l3.3-9.4l3.3,5.4l3.4,9.8l3.3-1.2l3.3,11.1l3.3-4.1l3.3-11.8l3.4,1.7l3.3,2.4l3.3-5.1l3.3-2.2l3.3-0.6l3.4-5.1l3.3,5.7l3.3,11.7l3.3-5.8l3.3-4.5l3.3,6l3.4,3.5l3.3-4.7l3.3,5.5l3.3,5.6l3.3,0.5l3.4,0.7l3.3,1.1l3.3,2.7l3.3,2.1l3.3-2.2l3.3-10.6l3.4-0l3.3,7l3.3,0.9l3.3-7.8l3.3,7.3l3.4,0.2l3.3,2.7l3.3-4.8l3.3,1.4l3.3-0.3l3.4-5.6l3.3,2.7l3.3-2.5l3.3,6.5l3.3,7l3.3-2.2l3.4,1.7l3.3-4l3.3-9.5l3.3,6.1l3.3,1.6l3.4,2.4l3.3-8.8l3.3,0.4l3.3,3.4l3.3,1.3l3.3-1.4l3.4-7.2l3.3,9.3l3.3,1.3l3.3-5.8l3.3-4.9l3.4-7.1l3.3,11.7l3.3-4l3.3,12.3l3.3,2.2l3.4-2.2l3.3-7.8l3.3-5.8l3.3,1.7l3.3-4l3.3,7.3l3.4,3.4l3.3,4.8l3.3-6.5l3.3-5.1l3.3,0.1l3.4,5.4l3.3-6.5l3.3,2.9l3.3,3.9l3.3,2.9l3.3-5.8l3.4,5.5l3.3,0.6l3.3,3.6l3.3-7.4l3.3-4.5l3.4,5.3l3.3,7.4l3.3,0.8l3.3-0l3.3-4.3l3.4-2.5l3.3-1.5l3.3-5.4l3.3,3l3.3,4.3l3.3,2.5l3.4-8.9l3.3-2l3.3,3.9V670.5H1426.0Z" fill="#6d1f62" stroke="none" stroke-width="1" fill-opacity="0.2"/><path d="M1426.0,654.6l3.3,4.1l3.3,5.9l3.4,2.3l3.3-0.2l3.3-5.6l3.3,1.4l3.3-0.1l3.3,0.5l3.4-0.5l3.3-1.3l3.3,1.2l3.3-0.7l3.3,4l3.4-1l3.3-11.1l3.3,11.5l3.3-12.6l3.3,14.6l3.4-2l3.3-8.2l3.3,5.8l3.3-2.2l3.3,0.4l3.3,0.7l3.4-11.4l3.3-9.1l3.3,5.5l3.3,9.2l3.3-10.1l3.4,16.5l3.3,0.1l3.3-4.9l3.3-36.7l3.3,23.7l3.3-6.7l3.4,1.5l3.3-65.8l3.3,79.4l3.3,0.2l3.3-8.9l3.4,4.9l3.3-8.2l3.3-5.3l3.3,5.4l3.3,5.5l3.4-8.1l3.3-8.4l3.3,19.8l3.3-10.3l3.3,7.2l3.3,0.1l3.4,7.8l3.3-2l3.3-12.9l3.3,14.8l3.3-2.2l3.4,8.4l3.3,3.5l3.3-1.7l3.3,1.3l3.3-3.2l3.3-2.9l3.4-1.6l3.3-0.7l3.3,0.4l3.3-2.6l3.3,5.1l3.4,3.6l3.3,2.9l3.3-3.1l3.3-6.5l3.3,1.3l3.4,0.8l3.3-2.6l3.3,0.8l3.3,7.6l3.3,2.8l3.3-6.8l3.4,6l3.3-5.2l3.3-16.7l3.3,5.1l3.3,11.6l3.4-0.9l3.3-4.3l3.3,0.2l3.3,5.9l3.3-0.1l3.3-10.6l3.4-1.9l3.3-12l3.3,28.1l3.3-15l3.3-4.2l3.4,2.4l3.3,4.9l3.3,3.7l3.3,6.8l3.3,2.3l3.4-3.6l3.3-17.5l3.3,5.5l3.3-4.4l3.3,10.3l3.3,2.6l3.4,0.1l3.3,2.3l3.3-3.1l3.3-27.1l3.3,24.1l3.4-1.3l3.3-4.9l3.3,6.4l3.3,4.5l3.3-2.7l3.3-3.4l3.4,7.7l3.3-1.4l3.3,4.3l3.3-5l3.3-5.5l3.4,3.6l3.3,3.4l3.3-17l3.3-1.9l3.3,18.7l3.4-2.9l3.3,0.9l3.3-12.1l3.3,6.7l3.3,4.6l3.3,0.3l3.4-5.5l3.3,2.9l3.3,3V670.5H1426.0Z" fill="#ba43a9" stroke="none" stroke-width="1" fill-opacity="0.2"/><path d="M1426.0,649.1l3.3,12.9l3.3-8.2l3.4,5.6l3.3,4l3.3-7.9l3.3,6.1l3.3-6.3l3.3,2.2l3.4-2l3.3,4.6l3.3-6.6l3.3,8.2l3.3,1.3l3.4-0l3.3,2.1l3.3-8.9l3.3-2l3.3,12.5l3.4-3.6l3.3-6.7l3.3-0.4l3.3,2.4l3.3,2.3l3.3-0.9l3.4-12.7l3.3-46l3.3,28.4l3.3,14.7l3.3-34.4l3.4,48l3.3-15.5l3.3,4.5l3.3-31.7l3.3,7.8l3.3,14.8l3.4-5.7l3.3,20.9l3.3,1.9l3.3-2.2l3.3-28.9l3.4,27l3.3-1.9l3.3-19.6l3.3,5.9l3.3-3.5l3.4,7.8l3.3,2.8l3.3-7.6l3.3-27.9l3.3,10.8l3.3,33.2l3.4-11.1l3.3,5.8l3.3,4l3.3-5.6l3.3,12l3.4-7.8l3.3,0.8l3.3,11.4l3.3,1.4l3.3-2.2l3.3-9.7l3.4-1.3l3.3-5.9l3.3,15.8l3.3-7.9l3.3,4.9l3.4-4.7l3.3,8l3.3-20l3.3,12.8l3.3,3.3l3.4-18l3.3,13.4l3.3,1.2l3.3,11.1l3.3,1.9l3.3-11.6l3.4,12.1l3.3-3.3l3.3-10.9l3.3-11.5l3.3,19.2l3.4-6.6l3.3,2l3.3,5.3l3.3-2.1l3.3,3.4l3.3-9l3.4,2.4l3.3,1.1l3.3,1.8l3.3,0.1l3.3-10.4l3.4,0.1l3.3-16.5l3.3,16.3l3.3,10.2l3.3,6.3l3.4-5.8l3.3-5.8l3.3-3.7l3.3-14.9l3.3,3l3.3,9.7l3.4,2.5l3.3,11.7l3.3-10.7l3.3-5.6l3.3,5.3l3.4-11.6l3.3,14.3l3.3,0l3.3,0.9l3.3,5.3l3.3-4.3l3.4,2.4l3.3,5.6l3.3-15l3.3,13.3l3.3-28.1l3.4,23.2l3.3,5.3l3.3,1l3.3,2.3l3.3-19.2l3.4,11.2l3.3-1l3.3-28l3.3,21.3l3.3-14l3.3,18.3l3.4,4.3l3.3-10.5l3.3,6.7" fill="none" stroke="#eab839" stroke-width="1.2" stroke-linejoin="round" stroke-opacity="0.9"/><path d="M1426.0,660.4l3.3-0.9l3.3,3.9l3.4,2.8l3.3-3.5l3.3,0.9l3.3-1.5l3.3-6.7l3.3,0.9l3.4-0.3l3.3,3.8l3.3-0.9l3.3,1.8l3.3,3.1l3.4,2.1l3.3-3.9l3.3-2l3.3,3.6l3.3,2.8l3.4-2.7l3.3-4.1l3.3-1.8l3.3-7.6l3.3,10.3l3.3-5.2l3.4-14.9l3.3-34.7l3.3,32l3.3,6.3l3.3,11.2l3.4,4.8l3.3-13.3l3.3-2.6l3.3-2.7l3.3-21.5l3.3,25.2l3.4-10.2l3.3-6.2l3.3,27.6l3.3-3.9l3.3-10.6l3.4-2.3l3.3-22.2l3.3,8l3.3,16.9l3.3-0.3l3.4-44.4l3.3,42.2l3.3-1.5l3.3-9.5l3.3,19.7l3.3,0l3.4-11.6l3.3,14.4l3.3-14.7l3.3,7.1l3.3,6.6l3.4,3.2l3.3,9l3.3-3.2l3.3-0.2l3.3-1.3l3.3-20.4l3.4,12.2l3.3,8.6l3.3-3.9l3.3-0.2l3.3-2.9l3.4,7.8l3.3,4.5l3.3-4.6l3.3-2.3l3.3-2.2l3.4,1.9l3.3-9.7l3.3,9.4l3.3-11.6l3.3,20.1l3.3,1l3.4-2.3l3.3-12l3.3,2.6l3.3-4.4l3.3,2.8l3.4,1.2l3.3,0.4l3.3,0.3l3.3,4.2l3.3,0.6l3.3-10.2l3.4,3l3.3,0.4l3.3,7.6l3.3-7l3.3-13.5l3.4-1.3l3.3,9.5l3.3,2.2l3.3,11.3l3.3,0.6l3.4-0.7l3.3-14.2l3.3,1.3l3.3-6.5l3.3,0.2l3.3,13.4l3.4-24.4l3.3,25.8l3.3-20.1l3.3,11.4l3.3,4.1l3.4,1.2l3.3-1l3.3-3.5l3.3,6.5l3.3,1.1l3.3-7.9l3.4,9.7l3.3,0.2l3.3,4.4l3.3-5.3l3.3-15.6l3.4,7.6l3.3-9.2l3.3,20.7l3.3,0.8l3.3-0.2l3.4-26.8l3.3,21.7l3.3-15.3l3.3,4.8l3.3,5.5l3.3,2.8l3.4-3l3.3-2.8l3.3,5.4" fill="none" stroke="#7eb26d" stroke-width="1.2" stroke-linejoin="round" stroke-opacity="0.9"/><path d="M1426.0,656.0l3.3-1.8l3.3,10.7l3.4,0.7l3.3-0.5l3.3-10l3.3,3.2l3.3-4.8l3.3,7.5l3.4,2.2l3.3-1.1l3.3-5.9l3.3,6l3.3-6.6l3.4-0.4l3.3,10.1l3.3-0.5l3.3-0.9l3.3,3.3l3.4-1.1l3.3-4.6l3.3-0l3.3,1.2l3.3,0.2l3.3-3.3l3.4-21l3.3-5.5l3.3,20.1l3.3-5.4l3.3,9.1l3.4,2.1l3.3,1.7l3.3-4.5l3.3-26.8l3.3,15.2l3.3-10.9l3.4,16.2l3.3,2.4l3.3,1.1l3.3-1.7l3.3-2.4l3.4-9.5l3.3,10.8l3.3-6.5l3.3,1.2l3.3-11l3.4,7.2l3.3-18.3l3.3,14.8l3.3-1.2l3.3-25l3.3,40.6l3.4-3.1l3.3-6.2l3.3,11l3.3-4.9l3.3,6.2l3.4,3l3.3,3.9l3.3-0l3.3,1l3.3-5.1l3.3-6.4l3.4,0.7l3.3,6.3l3.3,0.7l3.3-14.6l3.3,12.1l3.4,0.5l3.3,3.6l3.3-2.4l3.3-3.1l3.3,4.3l3.4-22.1l3.3,9.5l3.3,8.9l3.3,3.9l3.3,5.7l3.3-4.4l3.4,4.2l3.3-3.5l3.3-6.7l3.3-5.3l3.3-0.1l3.4-1l3.3,9.9l3.3-4.2l3.3,4.2l3.3-2.7l3.3-9.9l3.4,4.9l3.3,9.4l3.3,2.1l3.3-7.1l3.3-13l3.4,1.6l3.3,0.1l3.3,10.1l3.3,1.7l3.3-3.3l3.4,6.7l3.3-9.1l3.3-3.7l3.3,2.6l3.3-0.1l3.3,6.8l3.4-3.4l3.3-6.9l3.3,8.4l3.3-6l3.3,4.9l3.4-10l3.3-9.1l3.3,14.2l3.3,6.2l3.3,0.6l3.3-4.9l3.4-9.3l3.3,17.6l3.3,1l3.3-0.2l3.3-21.8l3.4,15.6l3.3,3.1l3.3,8.3l3.3,0.2l3.3-4.9l3.4-2.4l3.3,0.3l3.3-6.3l3.3-5.6l3.3,9l3.3,6.2l3.4-7.5l3.3,3.3l3.3-5.7" fill="none" stroke="#6ed0e0" stroke-width="1.2" stroke-linejoin="round" stroke-opacity="0.9"/><path d="M1426.0,658.2l3.3,1.6l3.3,2.7l3.4,0.9l3.3-0.8l3.3-4.8l3.3-0.8l3.3,2.5l3.3-3l3.4,5.9l3.3-11l3.3,5.3l3.3,2.8l3.3-6.8l3.4,8.6l3.3,2.3l3.3-12.8l3.3,11.1l3.3,1.7l3.4,1.3l3.3-13.3l3.3,3.7l3.3,3.3l3.3-3.4l3.3,2.3l3.4-18.7l3.3-6.3l3.3,4.1l3.3,8.8l3.3-15.7l3.4,3.8l3.3,24.5l3.3-17.9l3.3-14.1l3.3,4.1l3.3-6.6l3.4-17.1l3.3,26.9l3.3-16.3l3.3,1.1l3.3,15.1l3.4,4.7l3.3-7.2l3.3-14.6l3.3,9.7l3.3-3.2l3.4-26l3.3,43.6l3.3-10.7l3.3,10.3l3.3-7.5l3.3,14.4l3.4-9.6l3.3,9.8l3.3-24.7l3.3,10.6l3.3,18.5l3.4,1.1l3.3,8.3l3.3-3.9l3.3,4.7l3.3-22.5l3.3,5.4l3.4-1.8l3.3,10.4l3.3-10l3.3-14.9l3.3,24.6l3.4,5l3.3-13.5l3.3,12l3.3-4.8l3.3-0.5l3.4-8.7l3.3,3.3l3.3,3l3.3,10.9l3.3,3.7l3.3-0.3l3.4-1.6l3.3-0.2l3.3-12.9l3.3,4l3.3,7.6l3.4-5.9l3.3-6.3l3.3,1.8l3.3,4.3l3.3,2.5l3.3-16.9l3.4-1.9l3.3,14.2l3.3,2.1l3.3,0.4l3.3-20.2l3.4,3l3.3,3.8l3.3,1.5l3.3,11.8l3.3,9.4l3.4-9.9l3.3-3.2l3.3-7.3l3.3-4l3.3-3l3.3,4.9l3.4,14.9l3.3,2.8l3.3-6.7l3.3-14.3l3.3,5.3l3.4,2.8l3.3-2.1l3.3-2.2l3.3,7.2l3.3-9.4l3.3,15l3.4-0.9l3.3,5.5l3.3-4.1l3.3-2.2l3.3-9.2l3.4,3.3l3.3,10.8l3.3,3l3.3-14.7l3.3-6.4l3.4,14.1l3.3-9.7l3.3-14.1l3.3,10.3l3.3,5.4l3.3,7.7l3.4-9.6l3.3-0.7l3.3,2.3" fill="none" stroke="#ef843c" stroke-width="1.2" stroke-linejoin="round" stroke-opacity="0.9"/><path d="M1426.0,658.4l3.3-2.8l3.3,2.8l3.4,7.7l3.3-2l3.3-16.2l3.3,12.5l3.3-2.5l3.3-7.9l3.4,8.7l3.3,1.8l3.3-6.1l3.3,6.8l3.3,1.4l3.4-0.3l3.3,1.7l3.3,0l3.3-1.2l3.3,1.3l3.4,0.3l3.3-4.8l3.3,1.1l3.3,2.1l3.3-5.6l3.3,1.9l3.4-12.8l3.3-28.7l3.3,29.3l3.3-8.8l3.3,17.5l3.4,1.6l3.3-20.4l3.3,6.1l3.3-45l3.3,34.6l3.3-8l3.4,9.2l3.3,13.1l3.3,4.7l3.3-7.2l3.3,3.9l3.4-11.2l3.3-0.5l3.3,1.8l3.3,0.9l3.3-13.9l3.4,11.7l3.3-5.3l3.3-0.8l3.3-1.7l3.3,7.8l3.3,1l3.4,3.3l3.3-1.4l3.3-11.5l3.3,9.8l3.3,14.2l3.4,5.4l3.3,1.2l3.3,2l3.3,0.2l3.3-7.1l3.3,2.2l3.4-4.4l3.3-8.4l3.3-3.1l3.3,10.5l3.3,4.3l3.4,5.6l3.3-1.9l3.3-2.4l3.3,0.1l3.3-4.1l3.4-13.7l3.3,10.4l3.3-1.4l3.3,13.2l3.3,1.8l3.3,2.9l3.4-1.9l3.3-4.8l3.3-9.9l3.3-10l3.3,19.8l3.4-2.8l3.3,1l3.3,0.7l3.3-17.1l3.3,12.6l3.3-0.7l3.4-2.6l3.3,6.3l3.3-6.1l3.3-8.2l3.3-22.1l3.4,19.8l3.3-7.6l3.3,16.5l3.3,6.2l3.3,8.2l3.4-2.7l3.3-31.3l3.3-8.6l3.3,18.8l3.3,10.5l3.3,3.9l3.4-1.2l3.3,6.2l3.3-10.6l3.3,2.9l3.3-17.4l3.4,4.3l3.3,11.5l3.3-3l3.3-15.3l3.3,23.2l3.3-6.8l3.4,4.5l3.3,9.4l3.3-0.6l3.3-4.5l3.3-2.1l3.4-3.9l3.3,7.9l3.3,4.2l3.3,0.6l3.3-5l3.4-15.1l3.3-19.9l3.3,17.3l3.3,7.6l3.3,5l3.3,4.7l3.4-8.8l3.3-4.1l3.3,1" fill="none" stroke="#1f78c1" stroke-width="1.2" stroke-linejoin="round" stroke-opacity="0.9"/><path d="M1426.0,655.7l3.3,0.8l3.3,6l3.4,3.1l3.3-3.7l3.3-1.7l3.3-2l3.3-3.8l3.3,2.3l3.4,4.8l3.3-2.7l3.3-0.1l3.3,1.5l3.3,4.4l3.4-0.7l3.3,0l3.3-2.4l3.3,2l3.3,3l3.4-11.1l3.3,4l3.3,2.4l3.3-2.8l3.3-7.8l3.3,4.8l3.4-23.1l3.3-3.6l3.3,9l3.3,10.8l3.3,5.1l3.4-5.6l3.3,6.7l3.3-4.5l3.3-24.8l3.3,1.1l3.3,3.9l3.4-33l3.3,40.9l3.3,14.3l3.3-11.2l3.3-1l3.4-5.4l3.3,5.4l3.3-12l3.3,5.6l3.3,3.5l3.4-0.7l3.3,6.1l3.3-21.6l3.3,15.1l3.3-6.1l3.3,19.9l3.4-9.7l3.3,4.9l3.3,4l3.3-5.9l3.3-4.6l3.4,18.1l3.3-2.3l3.3-0.2l3.3,5.3l3.3-6.8l3.3-2.8l3.4-6.5l3.3-0.6l3.3,8.5l3.3-17.4l3.3,18.3l3.4,4.8l3.3,0.3l3.3-4.6l3.3-4.5l3.3,2.1l3.4-3.2l3.3-2.2l3.3,11l3.3-0.5l3.3-5.8l3.3,5.8l3.4,6.4l3.3-3.5l3.3-18.7l3.3,1.5l3.3,15.7l3.4,0.9l3.3-7.1l3.3,6.5l3.3-4.2l3.3-3l3.3-5.6l3.4-4.7l3.3-8.1l3.3,29l3.3-14.2l3.3-4.6l3.4,3l3.3-8.1l3.3,8.9l3.3,10.9l3.3-12l3.4,2.9l3.3-8.3l3.3,0.5l3.3,8.8l3.3-10l3.3,10.2l3.4,0.3l3.3-9.4l3.3,10.4l3.3-9.3l3.3,9.8l3.4-1.2l3.3-2.8l3.3,3.4l3.3-12.8l3.3,10.9l3.3-1.5l3.4,10l3.3,1.4l3.3,0.8l3.3-5.8l3.3-3.8l3.4,4.1l3.3,3.2l3.3,3.9l3.3-17.2l3.3,0.8l3.4,10.2l3.3-8.2l3.3-0.6l3.3,1.4l3.3,6.6l3.3-22.6l3.4,15.2l3.3,3.8l3.3-29" fill="none" stroke="#e24d42" stroke-width="1.2" stroke-linejoin="round" stroke-opacity="0.9"/><path d="M1426.0,657.2l3.3-1.9l3.3,7.3l3.4,4l3.3-9.2l3.3-0.2l3.3,1.4l3.3-1.8l3.3,0.5l3.4,6.1l3.3,0.5l3.3-6l3.3,2.6l3.3,2.8l3.4-8.8l3.3,10.3l3.3-9.1l3.3,9.8l3.3,1l3.4-11.8l3.3,8l3.3,0.7l3.3-3.4l3.3,2.3l3.3-6.4l3.4-6.3l3.3-31.8l3.3,23.1l3.3,7.6l3.3,4.6l3.4,7.4l3.3-5.1l3.3-7.7l3.3-14.3l3.3,8.5l3.3-0.8l3.4-27.3l3.3,32.3l3.3,8.1l3.3-2.7l3.3-11.7l3.4,5.4l3.3-4.6l3.3-4.5l3.3,0.9l3.3-15.2l3.4,18.2l3.3-1l3.3-0.9l3.3-14.2l3.3-1.6l3.3,28.5l3.4,0.4l3.3-5.8l3.3-21l3.3,22.9l3.3-7.1l3.4,0.8l3.3,6.1l3.3,6.6l3.3,7.6l3.3-5.8l3.3-5.8l3.4,7l3.3-1.8l3.3,0.5l3.3-1.9l3.3-0.5l3.4-5.6l3.3,16.5l3.3-5.3l3.3-3.9l3.3,3.7l3.4-1.1l3.3-9.2l3.3,2.8l3.3-3l3.3,6.7l3.3,9.2l3.4,1.7l3.3-12l3.3,2.5l3.3-0.8l3.3,7.4l3.4-12.1l3.3,1.5l3.3,3.9l3.3,3.6l3.3-3.7l3.3-1.6l3.4-10.6l3.3,12.4l3.3,2.2l3.3-1.1l3.3-10.2l3.4,0.5l3.3-18.6l3.3,23l3.3,8.6l3.3-9.4l3.4-4.5l3.3,0.2l3.3-14.4l3.3,17.9l3.3-3.1l3.3-7l3.4,19.1l3.3,2.5l3.3-7.9l3.3-0.7l3.3,1.6l3.4-3.3l3.3,2.3l3.3,2.8l3.3-22.6l3.3,7.8l3.3,9.2l3.4,5.2l3.3,6.3l3.3-1l3.3-6.1l3.3-4.1l3.4-0.1l3.3-0.4l3.3,13.2l3.3,0.3l3.3-5.4l3.4-2l3.3-4.9l3.3-3.3l3.3-16.8l3.3,23.8l3.3,4.9l3.4-5.1l3.3-6.2l3.3-0.3" fill="none" stroke="#cca300" stroke-width="1.2" stroke-linejoin="round" stroke-opacity="0.9"/><path d="M1426.0,651.0l3.3,6.2l3.3,6.5l3.4-6.7l3.3,7.3l3.3-7l3.3-8.8l3.3,1l3.3,7.9l3.4,0l3.3-1l3.3-3.4l3.3,2.5l3.3-1.8l3.4,11.2l3.3-3.5l3.3-2l3.3,1.5l3.3-4.2l3.4,8.5l3.3-7.1l3.3-2.2l3.3,2.4l3.3,1l3.3-7.7l3.4-12.5l3.3-27.2l3.3,18.8l3.3,16l3.3-22.3l3.4,16l3.3,16.7l3.3-19.7l3.3-12.7l3.3-3.4l3.3,1.7l3.4,11.9l3.3,13l3.3-3.2l3.3,0.4l3.3-17.7l3.4,15l3.3-31.9l3.3,14l3.3-1.8l3.3,8.7l3.4-16l3.3,11.8l3.3-2l3.3,10.5l3.3,1.2l3.3-21.3l3.4-0.3l3.3,25.1l3.3,3.7l3.3-2.4l3.3,7.4l3.4,9.2l3.3-2.8l3.3,2.8l3.3,3.6l3.3-8.2l3.3-19.1l3.4,10.5l3.3,1.9l3.3-2.6l3.3,8.8l3.3,3.2l3.4-0.1l3.3,2.4l3.3-4.1l3.3-7.1l3.3,7.1l3.4-11.7l3.3-2.4l3.3,12.3l3.3,3.4l3.3-6.4l3.3,13.2l3.4,1.4l3.3-6.2l3.3-3.6l3.3-4.2l3.3,7.7l3.4-0.1l3.3-8.7l3.3,7.4l3.3-7l3.3,7.8l3.3-39.8l3.4,14.3l3.3,10.9l3.3,12.1l3.3-9l3.3-27.9l3.4,20.4l3.3,11.8l3.3,2l3.3,2.1l3.3,6.3l3.4-8.7l3.3-7.4l3.3-2.8l3.3-9.9l3.3-4.3l3.3,2.6l3.4,15.3l3.3,2.2l3.3-9.3l3.3,3.3l3.3,3.9l3.4,7.7l3.3-8.9l3.3,9.3l3.3-2.9l3.3-3.2l3.3,7.2l3.4,0.7l3.3,1.5l3.3,2.3l3.3-13.7l3.3,2.5l3.4-17.1l3.3,17.7l3.3,11.6l3.3-2.7l3.3-4.8l3.4-19.1l3.3,16.5l3.3-6.3l3.3-1.8l3.3,5.1l3.3,7.5l3.4-0.7l3.3-0.4l3.3-19.5" fill="none" stroke="#447ebc" stroke-width="1.2" stroke-linejoin="round" stroke-opacity="0.9"/><path d="M1426.0,654.4l3.3,6.2l3.3,1.4l3.4,3.3l3.3-1l3.3-1.1l3.3-5.7l3.3,0.2l3.3,0.1l3.4,3.3l3.3-2.7l3.3-4.1l3.3,4.6l3.3,3.8l3.4-3.5l3.3,1.4l3.3,0.8l3.3-0.3l3.3,3.8l3.4,0.8l3.3-4.3l3.3-5.9l3.3-2.3l3.3,3.8l3.3,1.6l3.4-12.6l3.3-23.6l3.3,19l3.3-18l3.3,7.3l3.4,26l3.3,0.6l3.3-12.9l3.3-18.1l3.3-6l3.3,16.4l3.4,1.7l3.3-8.5l3.3-1.7l3.3,16.7l3.3,0.6l3.4,3l3.3-17.6l3.3,11.5l3.3-4.1l3.3,1.9l3.4-21.5l3.3,11.2l3.3,12.2l3.3-29.6l3.3,18.3l3.3,7.3l3.4,7.6l3.3,5.7l3.3-10.2l3.3-10l3.3,24l3.4-0.9l3.3,3.6l3.3,2.4l3.3-10.3l3.3-3.9l3.3,7l3.4-0.6l3.3-13.7l3.3,4.4l3.3,6.3l3.3-13.8l3.4,24l3.3,2.1l3.3-6l3.3-8.5l3.3-2.9l3.4,7.2l3.3-9.7l3.3,10.1l3.3,9.2l3.3,3l3.3,0.9l3.4-0.2l3.3-5l3.3-11.2l3.3,6.4l3.3,3.8l3.4-6.5l3.3-1.6l3.3,7.7l3.3-19.3l3.3,0.1l3.3,7.2l3.4,2.8l3.3,2.9l3.3,5.9l3.3-6.1l3.3-17.9l3.4,7.7l3.3,1.8l3.3,3.8l3.3,8.1l3.3-3.4l3.4,7.5l3.3-30.6l3.3,10.4l3.3-1.3l3.3,4.5l3.3,3.7l3.4,8.5l3.3,2.5l3.3-1.5l3.3-6.1l3.3-1.5l3.4,5.1l3.3-1.5l3.3-7.6l3.3,9.2l3.3-1.6l3.3-4.6l3.4-15.5l3.3,29.3l3.3,0.9l3.3-4.5l3.3-14.6l3.4,9.7l3.3-9.1l3.3-3.5l3.3,22.8l3.3-4.9l3.4-5.8l3.3,1.1l3.3-4.6l3.3-2.3l3.3,10.6l3.3,0.3l3.4-11.3l3.3,3l3.3-18.1" fill="none" stroke="#508642" stroke-width="1.2" stroke-linejoin="round" stroke-opacity="0.9"/><path d="M1426.0,662.0l3.3-5l3.3,8.7l3.4-8.7l3.3,7.2l3.3-1.9l3.3,0.9l3.3-3.4l3.3-0.4l3.4-8.4l3.3,13.6l3.3-1.8l3.3-3.2l3.3,6.4l3.4-0.9l3.3-6.1l3.3,5.7l3.3,1.2l3.3,0.1l3.4-1.7l3.3-0.9l3.3-3l3.3,3l3.3-1.8l3.3-4.1l3.4-27.8l3.3,3.5l3.3,11.7l3.3,10.4l3.3,0.8l3.4,8l3.3-6.7l3.3-3.9l3.3-6l3.3-6.8l3.3,0.1l3.4-10l3.3,21l3.3,6.5l3.3-3.4l3.3-10.8l3.4,3.9l3.3-10.9l3.3-1.3l3.3,13.8l3.3-18.4l3.4,3.3l3.3,15.5l3.3-8.4l3.3-1l3.3,1.4l3.3,4.2l3.4,9.3l3.3-10.6l3.3-3.9l3.3,8.6l3.3,8.9l3.4,3.5l3.3-1.1l3.3,1.7l3.3,2l3.3-6.7l3.3-6.3l3.4,5.4l3.3-2.2l3.3,5.7l3.3-16.1l3.3,12.4l3.4,3.8l3.3-12.6l3.3,11l3.3-0.8l3.3-0.5l3.4,1.1l3.3-5.7l3.3,3.5l3.3,3.9l3.3,4.8l3.3-15l3.4,14.7l3.3-1.4l3.3-3.9l3.3-17l3.3,16.1l3.4,0.4l3.3-0.1l3.3,1.5l3.3-4.6l3.3,5.3l3.3-9.1l3.4,2l3.3-18.6l3.3,19.1l3.3,4.8l3.3-9.1l3.4-6.5l3.3,7.5l3.3-1.2l3.3,11.1l3.3,3.5l3.4-2.1l3.3-9.1l3.3-20.7l3.3,19.3l3.3-11.4l3.3-9.3l3.4,14.4l3.3-5.9l3.3,14.8l3.3-14.5l3.3,18.9l3.4-7.3l3.3,3.1l3.3-4.9l3.3,3.9l3.3-1.9l3.3,7.2l3.4-12.4l3.3,12l3.3,4.4l3.3-1.8l3.3-9.6l3.4-17.9l3.3,27.6l3.3,0.4l3.3,3.1l3.3-6l3.4-3.2l3.3-0.7l3.3-5.3l3.3-0.1l3.3,8.9l3.3,1.5l3.4-7.4l3.3-1.3l3.3,4.7" fill="none" stroke="#c15c17" stroke-width="1.2" stroke-linejoin="round" stroke-opacity="0.9"/><path d="M1426.0,659.2l3.3,0.5l3.3,5.2l3.4,1.3l3.3-1l3.3-0.9l3.3-0.9l3.3-1.7l3.3,1.6l3.4-0.7l3.3,2l3.3-2.9l3.3,2.4l3.3,1.6l3.4-0.3l3.3-1.5l3.3,0.3l3.3,1.7l3.3,0.6l3.4-1.6l3.3-2.3l3.3,0.4l3.3,1l3.3-1.6l3.3-1.1l3.4-7.2l3.3-12.2l3.3,12.9l3.3,0.2l3.3,2.9l3.4,4.3l3.3-3.8l3.3-2l3.3-16.8l3.3-3.5l3.3,15l3.4-2.9l3.3,0l3.3,9.5l3.3,0.7l3.3-8.8l3.4-1.8l3.3,4.8l3.3-12.6l3.3,9.6l3.3-7.9l3.4-5.6l3.3,16.2l3.3-10l3.3,6.7l3.3-5.4l3.3,10.3l3.4-1.9l3.3-4.5l3.3,4.3l3.3,3.2l3.3,5.5l3.4,0.3l3.3,2.8l3.3-0.2l3.3-0.6l3.3-1l3.3-4.1l3.4-2.8l3.3,3.4l3.3-0.2l3.3-2.6l3.3,3.9l3.4,4.9l3.3-1.2l3.3-3.3l3.3-2.5l3.3,3.6l3.4-5.8l3.3-2.8l3.3,3l3.3,5.6l3.3,6l3.3-1.7l3.4-0.6l3.3-1.3l3.3-9l3.3,1.3l3.3,5.4l3.4-0.8l3.3-3.3l3.3,4.6l3.3-4l3.3,4.1l3.3-2.8l3.4-5.3l3.3,6.7l3.3,0.8l3.3-5.1l3.3-2.1l3.4-5.2l3.3,3.1l3.3,3.7l3.3,7.3l3.3,1.7l3.4-1.3l3.3-8.3l3.3-10.1l3.3,1.9l3.3,8.8l3.3,1.5l3.4,3.8l3.3,1.8l3.3-5.5l3.3-2.8l3.3,4l3.4,2.2l3.3-7.5l3.3,3.4l3.3,4.5l3.3-0.9l3.3-0.8l3.4,3.3l3.3,0.6l3.3-1.2l3.3-0.3l3.3-10.2l3.4,6.5l3.3,3.2l3.3,4.5l3.3-3.4l3.3,0.8l3.4-1.9l3.3-2l3.3-4.5l3.3-7.7l3.3,10.6l3.3,2.7l3.4-1.3l3.3,0.3l3.3-5.6" fill="none" stroke="#890f02" stroke-width="1.2" stroke-linejoin="round" stroke-opacity="0.9"/><path d="M1426.0,663.8l3.3-1.7l3.3,2.4l3.4,3l3.3-1.3l3.3-3l3.3,1.4l3.3-3.3l3.3,2.4l3.4,1.2l3.3-1l3.3-1.9l3.3-0.4l3.3,5.6l3.4,0.3l3.3-0.9l3.3-1.7l3.3,1.7l3.3,0.7l3.4-1l3.3-2.4l3.3,0.5l3.3,1l3.3-2.5l3.3-3.3l3.4-7.6l3.3-5.3l3.3,4.2l3.3,7.8l3.3,1.3l3.4,4.8l3.3-5l3.3-6.1l3.3-1.6l3.3-14.8l3.3,13.4l3.4,4.3l3.3,0.4l3.3,1.6l3.3,2l3.3-11.9l3.4,6.8l3.3-4.5l3.3-2.1l3.3,1.9l3.3-3.2l3.4,1l3.3,5.7l3.3,0l3.3-1.5l3.3,2.1l3.3-2.1l3.4,3.9l3.3-4l3.3,1.3l3.3,4.3l3.3-2.3l3.4,8.6l3.3,0.4l3.3,1.1l3.3,1.1l3.3-2l3.3-8.9l3.4,4.5l3.3-2.9l3.3,1.9l3.3-3l3.3,5.2l3.4,2.1l3.3,3.3l3.3-2.9l3.3-0.8l3.3-2.2l3.4-4.7l3.3,3.1l3.3,1.2l3.3,2.8l3.3,3.7l3.3,0.4l3.4,0.2l3.3-3.3l3.3-2.5l3.3,0.6l3.3,0.4l3.4,1.1l3.3-0.5l3.3-5.1l3.3,5.9l3.3-2.8l3.3-6.3l3.4,4.3l3.3-0.7l3.3,4l3.3-4.7l3.3-7l3.4,0.3l3.3,8.6l3.3-2.3l3.3,3.8l3.3,4.3l3.4-3.8l3.3-6.1l3.3-2l3.3,1.9l3.3,2.1l3.3-3l3.4,4.1l3.3,1.9l3.3-1.3l3.3,0.2l3.3-1.2l3.4-1.9l3.3,3.4l3.3,1l3.3,0l3.3,1.5l3.3-4.7l3.4,1.6l3.3,3.1l3.3,1.3l3.3-3.9l3.3,0.7l3.4-3.2l3.3,5.4l3.3,3.6l3.3-0.2l3.3-2.5l3.4-4.3l3.3-1.8l3.3-3l3.3,3l3.3,5.3l3.3-2.3l3.4-3.6l3.3,2.8l3.3-4.5" fill="none" stroke="#0a437c" stroke-width="1.2" stroke-linejoin="round" stroke-opacity="0.9"/><path d="M1426.0,659.1l3.3,1.5l3.3,3.4l3.4,1.6l3.3,0.2l3.3-4.3l3.3-0.9l3.3,0.5l3.3-1.9l3.4,5l3.3-2.9l3.3,0.3l3.3,0.4l3.3,2.6l3.4-0.2l3.3-0.8l3.3-0.9l3.3,1.9l3.3,2.6l3.4-1l3.3-5.1l3.3,2.6l3.3-2.6l3.3-0.4l3.3-4.4l3.4-12.9l3.3-13l3.3,22.6l3.3-4.4l3.3,6.7l3.4,6.3l3.3-0.5l3.3-10l3.3-2l3.3-2.9l3.3-6.2l3.4,7.8l3.3,1.8l3.3,10.4l3.3-10.4l3.3,4l3.4-8l3.3-2l3.3-0.1l3.3-6.9l3.3,4.8l3.4-9.6l3.3,12.9l3.3,5.9l3.3-7.5l3.3-2.4l3.3,12.8l3.4,0.1l3.3,1.8l3.3-3l3.3-3.5l3.3,6.2l3.4,3.5l3.3,4.6l3.3-0.4l3.3-1.9l3.3-5l3.3-2.7l3.4,0.6l3.3,3.1l3.3,1.5l3.3-6.6l3.3,8.9l3.4,0.1l3.3,3l3.3-3.5l3.3-1l3.3-4.3l3.4-0.9l3.3-4.8l3.3,9.2l3.3,1.6l3.3,3.9l3.3,1.3l3.4,0.3l3.3-5.1l3.3-7.6l3.3,4.4l3.3,4l3.4-1.1l3.3-1.9l3.3-1.6l3.3,3l3.3-1.1l3.3-3l3.4-0.7l3.3,2.5l3.3,2.8l3.3-3.7l3.3-13.4l3.4,1.4l3.3,3.2l3.3,4.7l3.3,8.5l3.3,2.4l3.4-6.2l3.3-8.9l3.3-6.3l3.3,10.6l3.3-0.2l3.3-0.4l3.4,3.9l3.3,5.8l3.3-4.4l3.3-1.5l3.3,1.6l3.4-1l3.3-8.3l3.3,3.8l3.3,5.8l3.3-3.2l3.3-1l3.4,4.5l3.3,5.4l3.3-2.6l3.3-3.6l3.3-2.1l3.4,2.1l3.3,5.6l3.3,0.8l3.3-0.4l3.3-4.3l3.4-5.3l3.3,0.1l3.3-1.3l3.3-7.8l3.3,14.6l3.3-2.6l3.4-1.9l3.3,3.9l3.3-0.5" fill="none" stroke="#584477" stroke-width="1.2" stroke-linejoin="round" stroke-opacity="0.9"/><path d="M1426.0,662.7l3.3-10.1l3.3,13.2l3.4-0l3.3-0.1l3.3-2.6l3.3,0.6l3.3-5.3l3.3-7l3.4,11.9l3.3,1.6l3.3-7.5l3.3,6.2l3.3,1.2l3.4-0.7l3.3,1.2l3.3-9l3.3,7.5l3.3-3.3l3.4-1.2l3.3,2.3l3.3-0l3.3-4.6l3.3,3.5l3.3,1.5l3.4-21.3l3.3,0.8l3.3-43.9l3.3,51.8l3.3,7.6l3.4,5.7l3.3-14.1l3.3-0.2l3.3-16.3l3.3,7.4l3.3,8l3.4,2.2l3.3-19.3l3.3,25.3l3.3-3.7l3.3-4.8l3.4,6.4l3.3-4l3.3-14.3l3.3,12.5l3.3-18.9l3.4,7l3.3,8.9l3.3-5.2l3.3-1.5l3.3,12.4l3.3-0.5l3.4-10.5l3.3,6.2l3.3-1.4l3.3,7.2l3.3-0.1l3.4,9.5l3.3,1.2l3.3-13.5l3.3,14.5l3.3-3.4l3.3-7.3l3.4-4.3l3.3-0l3.3,10.3l3.3,0.3l3.3-12.6l3.4,15.9l3.3,0.1l3.3-0.2l3.3-4.8l3.3-1.8l3.4-1l3.3,2.9l3.3-0.7l3.3,4.6l3.3,5.6l3.3-10l3.4,8.9l3.3-15.3l3.3,5.6l3.3-8.5l3.3,16.1l3.4-17.6l3.3,12l3.3-2.2l3.3,2.2l3.3,3.8l3.3-10.1l3.4,0.3l3.3,7.6l3.3-0.1l3.3-7.5l3.3-8l3.4-1.6l3.3,11.7l3.3-2.8l3.3,11.4l3.3,1.7l3.4-4.1l3.3-13.7l3.3,6.4l3.3,0.4l3.3-2.6l3.3,1.6l3.4,4.9l3.3-12l3.3,14.4l3.3-9.9l3.3,5.9l3.4,2.6l3.3-3.1l3.3-21.1l3.3,23.5l3.3,2.4l3.3-2.7l3.4-0.6l3.3,2.5l3.3,1.8l3.3-17.7l3.3,9.6l3.4,4.9l3.3,5.5l3.3,0.2l3.3,1.2l3.3-7.8l3.4-8.7l3.3,6.4l3.3,0.9l3.3-11.2l3.3,9.3l3.3,7.5l3.4-4.2l3.3-4.1l3.3-13.5" fill="none" stroke="#705da0" stroke-width="1.2" stroke-linejoin="round" stroke-opacity="0.9"/><path d="M1426.0,658.5l3.3,3.8l3.3,2.5l3.4,1l3.3-1.6l3.3,0.4l3.3-2.2l3.3-1l3.3,0l3.4,0.5l3.3,1.2l3.3-3l3.3,1.6l3.3,4.6l3.4-2.3l3.3-0.2l3.3,0.1l3.3,0.3l3.3,3l3.4-0.9l3.3-4.3l3.3-2.1l3.3,4.3l3.3-5l3.3-3.9l3.4-15.7l3.3-7.4l3.3,12.1l3.3,13.1l3.3-0.8l3.4,2.7l3.3,1.7l3.3-9.7l3.3-8.2l3.3-9.4l3.3,5.4l3.4,9.8l3.3-1.2l3.3,11.1l3.3-4.1l3.3-11.8l3.4,1.7l3.3,2.4l3.3-5.1l3.3-2.2l3.3-0.6l3.4-5.1l3.3,5.7l3.3,11.7l3.3-5.8l3.3-4.5l3.3,6l3.4,3.5l3.3-4.7l3.3,5.5l3.3,5.6l3.3,0.5l3.4,0.7l3.3,1.1l3.3,2.7l3.3,2.1l3.3-2.2l3.3-10.6l3.4-0l3.3,7l3.3,0.9l3.3-7.8l3.3,7.3l3.4,0.2l3.3,2.7l3.3-4.8l3.3,1.4l3.3-0.3l3.4-5.6l3.3,2.7l3.3-2.5l3.3,6.5l3.3,7l3.3-2.2l3.4,1.7l3.3-4l3.3-9.5l3.3,6.1l3.3,1.6l3.4,2.4l3.3-8.8l3.3,0.4l3.3,3.4l3.3,1.3l3.3-1.4l3.4-7.2l3.3,9.3l3.3,1.3l3.3-5.8l3.3-4.9l3.4-7.1l3.3,11.7l3.3-4l3.3,12.3l3.3,2.2l3.4-2.2l3.3-7.8l3.3-5.8l3.3,1.7l3.3-4l3.3,7.3l3.4,3.4l3.3,4.8l3.3-6.5l3.3-5.1l3.3,0.1l3.4,5.4l3.3-6.5l3.3,2.9l3.3,3.9l3.3,2.9l3.3-5.8l3.4,5.5l3.3,0.6l3.3,3.6l3.3-7.4l3.3-4.5l3.4,5.3l3.3,7.4l3.3,0.8l3.3-0l3.3-4.3l3.4-2.5l3.3-1.5l3.3-5.4l3.3,3l3.3,4.3l3.3,2.5l3.4-8.9l3.3-2l3.3,3.9" fill="none" stroke="#6d1f62" stroke-width="1.2" stroke-linejoin="round" stroke-opacity="0.9"/><path d="M1426.0,654.6l3.3,4.1l3.3,5.9l3.4,2.3l3.3-0.2l3.3-5.6l3.3,1.4l3.3-0.1l3.3,0.5l3.4-0.5l3.3-1.3l3.3,1.2l3.3-0.7l3.3,4l3.4-1l3.3-11.1l3.3,11.5l3.3-12.6l3.3,14.6l3.4-2l3.3-8.2l3.3,5.8l3.3-2.2l3.3,0.4l3.3,0.7l3.4-11.4l3.3-9.1l3.3,5.5l3.3,9.2l3.3-10.1l3.4,16.5l3.3,0.1l3.3-4.9l3.3-36.7l3.3,23.7l3.3-6.7l3.4,1.5l3.3-65.8l3.3,79.4l3.3,0.2l3.3-8.9l3.4,4.9l3.3-8.2l3.3-5.3l3.3,5.4l3.3,5.5l3.4-8.1l3.3-8.4l3.3,19.8l3.3-10.3l3.3,7.2l3.3,0.1l3.4,7.8l3.3-2l3.3-12.9l3.3,14.8l3.3-2.2l3.4,8.4l3.3,3.5l3.3-1.7l3.3,1.3l3.3-3.2l3.3-2.9l3.4-1.6l3.3-0.7l3.3,0.4l3.3-2.6l3.3,5.1l3.4,3.6l3.3,2.9l3.3-3.1l3.3-6.5l3.3,1.3l3.4,0.8l3.3-2.6l3.3,0.8l3.3,7.6l3.3,2.8l3.3-6.8l3.4,6l3.3-5.2l3.3-16.7l3.3,5.1l3.3,11.6l3.4-0.9l3.3-4.3l3.3,0.2l3.3,5.9l3.3-0.1l3.3-10.6l3.4-1.9l3.3-12l3.3,28.1l3.3-15l3.3-4.2l3.4,2.4l3.3,4.9l3.3,3.7l3.3,6.8l3.3,2.3l3.4-3.6l3.3-17.5l3.3,5.5l3.3-4.4l3.3,10.3l3.3,2.6l3.4,0.1l3.3,2.3l3.3-3.1l3.3-27.1l3.3,24.1l3.4-1.3l3.3-4.9l3.3,6.4l3.3,4.5l3.3-2.7l3.3-3.4l3.4,7.7l3.3-1.4l3.3,4.3l3.3-5l3.3-5.5l3.4,3.6l3.3,3.4l3.3-17l3.3-1.9l3.3,18.7l3.4-2.9l3.3,0.9l3.3-12.1l3.3,6.7l3.3,4.6l3.3,0.3l3.4-5.5l3.3,2.9l3.3,3" fill="none" stroke="#ba43a9" stroke-width="1.2" stroke-linejoin="round" stroke-opacity="0.9"/></g><text x="1817.5" y="712.3" font-size="12" fill="#33b5e5" font-weight="bold" text-anchor="end" textLength="19.3" lengthAdjust="spacingAndGlyphs" >avg</text><text x="1868.5" y="712.3" font-size="12" fill="#33b5e5" font-weight="bold" text-anchor="end" textLength="39.5" lengthAdjust="spacingAndGlyphs" >current</text><path d="M1867.5,705.8 h7 l-3.5,3.5 Z" fill="#33b5e5" stroke="none" stroke-width="1" /><rect x="1404" y="731" width="12.5" height="3" rx="0" fill="#ba43a9" /><text x="1424.4" y="735.4" font-size="12" fill="#d0d2d4" font-weight="normal" text-anchor="start" >Core 22</text><text x="1817.5" y="735.4" font-size="12" fill="#fff" font-weight="normal" text-anchor="end" stroke="#fff" stroke-width="0.3" >20%</text><text x="1874.0" y="735.4" font-size="12" fill="#fff" font-weight="normal" text-anchor="end" stroke="#fff" stroke-width="0.3" >35%</text><rect x="1404" y="756.7" width="12.5" height="3.0" rx="0" fill="#7eb26d" /><text x="1424.4" y="761.1" font-size="12" fill="#d0d2d4" font-weight="normal" text-anchor="start" >Core 16</text><text x="1817.5" y="761.1" font-size="12" fill="#fff" font-weight="normal" text-anchor="end" stroke="#fff" stroke-width="0.3" >18%</text><text x="1874.0" y="761.1" font-size="12" fill="#fff" font-weight="normal" text-anchor="end" stroke="#fff" stroke-width="0.3" >29%</text><rect x="1885" y="702" width="6" height="32" rx="3" fill="rgba(180,190,200,0.45)" /><path d="M1892,769 H1897 V763.5" fill="none" stroke="#fff" stroke-width="2" /><rect x="84" y="828" width="749" height="172" rx="3" fill="rgba(0,0,0,0.27)" /><text x="458.3" y="847.9" font-size="13.3" fill="#fff" font-weight="bold" text-anchor="middle" textLength="53.8" lengthAdjust="spacingAndGlyphs">Network</text><text x="825.1" y="847.9" font-size="12.2" fill="#33b5e5" font-weight="bold" text-anchor="end" textLength="86.7" lengthAdjust="spacingAndGlyphs">Last 30 minutes</text><circle cx="729.8" cy="843.5" r="4.5" fill="none" stroke="#33b5e5" stroke-width="1.6"/><path d="M729.8,840.85 V843.8 H727.574" fill="none" stroke="#33b5e5" stroke-width="1.4" /><line x1="141.9" y1="876.8" x2="810.6" y2="876.8" stroke="rgba(255,255,255,0.16)" stroke-width="1" /><line x1="141.9" y1="910.0" x2="810.6" y2="910.0" stroke="rgba(255,255,255,0.16)" stroke-width="1" /><line x1="141.9" y1="943.3" x2="810.6" y2="943.3" stroke="rgba(255,255,255,0.16)" stroke-width="1" /><line x1="160.3" y1="876.8" x2="160.3" y2="947" stroke="rgba(255,255,255,0.16)" stroke-width="1" /><line x1="271.7" y1="876.8" x2="271.7" y2="947" stroke="rgba(255,255,255,0.16)" stroke-width="1" /><line x1="383.2" y1="876.8" x2="383.2" y2="947" stroke="rgba(255,255,255,0.16)" stroke-width="1" /><line x1="494.6" y1="876.8" x2="494.6" y2="947" stroke="rgba(255,255,255,0.16)" stroke-width="1" /><line x1="606" y1="876.8" x2="606" y2="947" stroke="rgba(255,255,255,0.16)" stroke-width="1" /><line x1="717.5" y1="876.8" x2="717.5" y2="947" stroke="rgba(255,255,255,0.16)" stroke-width="1" /><text x="136.8" y="879.8" font-size="12" fill="#e6e7e8" font-weight="normal" text-anchor="end" letter-spacing="-0.25" stroke="#e6e7e8" stroke-width="0.3" textLength="43" lengthAdjust="spacingAndGlyphs" >6.0 MBs</text><text x="136.8" y="913.0" font-size="12" fill="#e6e7e8" font-weight="normal" text-anchor="end" letter-spacing="-0.25" stroke="#e6e7e8" stroke-width="0.3" textLength="43" lengthAdjust="spacingAndGlyphs" >4.0 MBs</text><text x="136.8" y="946.3" font-size="12" fill="#e6e7e8" font-weight="normal" text-anchor="end" letter-spacing="-0.25" stroke="#e6e7e8" stroke-width="0.3" textLength="43" lengthAdjust="spacingAndGlyphs" >2.0 MBs</text><path d="M475.0,948.0 L476.3,936.3 L479.8,942.0 L483.0,941.3 L485.0,948.0 L485.0,960.0 L475.0,960.0 Z" fill="rgba(120,30,40,0.30)" stroke="none" stroke-width="1" /><path d="M475.0,948.0 L476.3,936.3 L479.8,942.0 L483.0,941.3 L485.0,948.0" fill="none" stroke="#b1261b" stroke-width="1.7" stroke-linejoin="round"/><path d="M543.5,948.0 L547.4,922.6 L551.3,929.6 L558.0,914.0 L562.0,932.3 L565.8,894.4 L572.8,931.6 L580.7,929.6 L586.5,922.6 L592.4,914.0 L597.1,919.4 L600.2,919.4 L604.2,928.4 L608.0,927.3 L612.0,933.5 L619.8,933.5 L625.6,932.3 L631.5,942.0 L635.4,948.0 L635.4,960.0 L543.5,960.0 Z" fill="rgba(120,30,40,0.30)" stroke="none" stroke-width="1" /><path d="M543.5,948.0 L547.4,922.6 L551.3,929.6 L558.0,914.0 L562.0,932.3 L565.8,894.4 L572.8,931.6 L580.7,929.6 L586.5,922.6 L592.4,914.0 L597.1,919.4 L600.2,919.4 L604.2,928.4 L608.0,927.3 L612.0,933.5 L619.8,933.5 L625.6,932.3 L631.5,942.0 L635.4,948.0" fill="none" stroke="#b1261b" stroke-width="1.7" stroke-linejoin="round"/><path d="M640.0,948.0 L645.2,944.0 L655.0,942.0 L660.8,944.0 L666.7,942.0 L674.5,944.0 L680.4,940.2 L686.3,944.0 L698.0,942.0 L705.8,936.3 L709.8,924.5 L712.5,932.3 L717.6,910.8 L722.3,918.7 L726.2,934.3 L731.2,940.2 L735.2,934.3 L740.2,934.3 L744.9,940.2 L748.8,936.3 L753.5,930.4 L760.6,936.3 L766.4,930.4 L772.3,934.3 L778.2,938.2 L782.1,933.5 L787.9,932.3 L793.8,938.2 L799.7,932.3 L805.5,928.4 L806.8,928.4 L806.8,960.0 L640.0,960.0 Z" fill="rgba(120,30,40,0.30)" stroke="none" stroke-width="1" /><path d="M640.0,948.0 L645.2,944.0 L655.0,942.0 L660.8,944.0 L666.7,942.0 L674.5,944.0 L680.4,940.2 L686.3,944.0 L698.0,942.0 L705.8,936.3 L709.8,924.5 L712.5,932.3 L717.6,910.8 L722.3,918.7 L726.2,934.3 L731.2,940.2 L735.2,934.3 L740.2,934.3 L744.9,940.2 L748.8,936.3 L753.5,930.4 L760.6,936.3 L766.4,930.4 L772.3,934.3 L778.2,938.2 L782.1,933.5 L787.9,932.3 L793.8,938.2 L799.7,932.3 L805.5,928.4 L806.8,928.4" fill="none" stroke="#b1261b" stroke-width="1.7" stroke-linejoin="round"/><rect x="845" y="828" width="293" height="172" rx="3" fill="#299c46" /><text x="991.3" y="847.9" font-size="13.3" fill="#fff" font-weight="bold" text-anchor="middle" textLength="46" lengthAdjust="spacingAndGlyphs">Uptime</text><text x="891.5" y="966.0" font-size="50" fill="#fff" font-weight="bold" text-anchor="start" textLength="201" lengthAdjust="spacingAndGlyphs" >1 month, 1</text><rect x="1149" y="828" width="751" height="172" rx="3" fill="rgba(0,0,0,0.27)" /><text x="1523.5" y="847.9" font-size="13.3" fill="#fff" font-weight="bold" text-anchor="middle" textLength="53" lengthAdjust="spacingAndGlyphs">Memory</text><text x="1890.5" y="847.9" font-size="12.2" fill="#33b5e5" font-weight="bold" text-anchor="end" textLength="86.7" lengthAdjust="spacingAndGlyphs">Last 30 minutes</text><circle cx="1795.2" cy="843.5" r="4.5" fill="none" stroke="#33b5e5" stroke-width="1.6"/><path d="M1795.2,840.85 V843.8 H1792.974" fill="none" stroke="#33b5e5" stroke-width="1.4" /><line x1="1264.6" y1="877.2" x2="1622.3" y2="877.2" stroke="rgba(255,255,255,0.16)" stroke-width="1" /><line x1="1264.6" y1="905.6" x2="1622.3" y2="905.6" stroke="rgba(255,255,255,0.16)" stroke-width="1" /><line x1="1264.6" y1="934" x2="1622.3" y2="934" stroke="rgba(255,255,255,0.16)" stroke-width="1" /><text x="1256.0" y="880.2" font-size="12" fill="#e6e7e8" font-weight="normal" text-anchor="end" letter-spacing="-0.25" stroke="#e6e7e8" stroke-width="0.3" textLength="74.3" lengthAdjust="spacingAndGlyphs" >70.000000 GB</text><text x="1256.0" y="908.6" font-size="12" fill="#e6e7e8" font-weight="normal" text-anchor="end" letter-spacing="-0.25" stroke="#e6e7e8" stroke-width="0.3" textLength="74.3" lengthAdjust="spacingAndGlyphs" >60.000000 GB</text><text x="1256.0" y="937.0" font-size="12" fill="#e6e7e8" font-weight="normal" text-anchor="end" letter-spacing="-0.25" stroke="#e6e7e8" stroke-width="0.3" textLength="74.3" lengthAdjust="spacingAndGlyphs" >50.000000 GB</text><path d="M1264.6,882.2 L1267.0,882.2 L1269.4,882.2 L1271.8,882.2 L1274.2,882.2 L1276.6,882.2 L1279.0,882.2 L1281.3,882.2 L1283.7,882.2 L1286.1,882.2 L1288.5,882.2 L1290.9,882.2 L1293.3,882.2 L1295.7,882.2 L1298.1,882.2 L1300.5,882.2 L1302.9,882.2 L1305.3,882.2 L1307.7,882.2 L1310.0,882.2 L1312.4,882.2 L1314.8,882.2 L1317.2,882.2 L1319.6,882.2 L1322.0,882.2 L1324.4,882.2 L1326.8,882.2 L1329.2,882.2 L1331.6,882.2 L1334.0,882.2 L1336.4,882.2 L1338.8,882.2 L1341.1,882.2 L1343.5,882.2 L1345.9,882.2 L1348.3,882.2 L1350.7,882.2 L1353.1,882.2 L1355.5,882.2 L1357.9,882.2 L1360.3,882.2 L1362.7,882.2 L1365.1,882.2 L1367.5,882.2 L1369.8,882.2 L1372.2,882.2 L1374.6,882.2 L1377.0,882.2 L1379.4,882.2 L1381.8,882.2 L1384.2,882.2 L1386.6,882.2 L1389.0,882.2 L1391.4,882.2 L1393.8,882.2 L1396.2,882.2 L1398.5,882.2 L1400.9,882.2 L1403.3,882.2 L1405.7,882.2 L1408.1,882.2 L1410.5,882.2 L1412.9,882.2 L1415.3,882.2 L1417.7,882.2 L1420.1,882.2 L1422.5,882.2 L1424.9,882.2 L1427.3,882.2 L1429.6,882.2 L1432.0,882.2 L1434.4,882.2 L1436.8,882.2 L1439.2,882.2 L1441.6,882.2 L1444.0,882.2 L1446.4,882.2 L1448.8,882.2 L1451.2,882.2 L1453.6,882.2 L1456.0,882.2 L1458.3,882.2 L1460.7,882.2 L1463.1,882.2 L1465.5,882.2 L1467.9,882.2 L1470.3,882.2 L1472.7,882.2 L1475.1,882.2 L1477.5,882.2 L1479.9,882.2 L1482.3,882.2 L1484.7,882.2 L1487.1,882.2 L1489.4,882.2 L1491.8,882.2 L1494.2,882.2 L1496.6,882.2 L1499.0,882.2 L1501.4,882.2 L1503.8,882.2 L1506.2,882.2 L1508.6,882.2 L1511.0,882.2 L1513.4,882.2 L1515.8,882.2 L1518.1,882.2 L1520.5,882.2 L1522.9,882.2 L1525.3,882.2 L1527.7,882.2 L1530.1,882.2 L1532.5,882.2 L1534.9,882.2 L1537.3,882.2 L1539.7,882.2 L1542.1,882.2 L1544.5,882.2 L1546.8,882.2 L1549.2,882.2 L1551.6,882.2 L1554.0,882.2 L1556.4,882.2 L1558.8,882.2 L1561.2,882.2 L1563.6,882.2 L1566.0,882.2 L1568.4,882.2 L1570.8,882.2 L1573.2,882.2 L1575.6,882.2 L1577.9,882.2 L1580.3,882.2 L1582.7,882.2 L1585.1,882.2 L1587.5,882.2 L1589.9,882.2 L1592.3,882.2 L1594.7,882.2 L1597.1,882.2 L1599.5,882.2 L1601.9,882.2 L1604.3,882.2 L1606.6,882.2 L1609.0,882.2 L1611.4,882.2 L1613.8,882.2 L1616.2,882.2 L1618.6,882.2 L1621.0,882.2 L1621.0,960.0 L1264.6,960.0 Z" fill="#ef843c" stroke="none" stroke-width="1" /><path d="M1264.6,886.0 L1267.0,886.0 L1269.4,886.0 L1271.8,886.0 L1274.2,886.0 L1276.6,886.0 L1279.0,886.0 L1281.3,886.0 L1283.7,886.0 L1286.1,886.0 L1288.5,886.0 L1290.9,886.0 L1293.3,886.0 L1295.7,886.0 L1298.1,886.0 L1300.5,886.0 L1302.9,886.0 L1305.3,886.0 L1307.7,886.0 L1310.0,886.0 L1312.4,886.0 L1314.8,886.0 L1317.2,886.0 L1319.6,886.0 L1322.0,886.0 L1324.4,886.0 L1326.8,886.0 L1329.2,886.0 L1331.6,886.0 L1334.0,886.0 L1336.4,886.0 L1338.8,886.0 L1341.1,886.0 L1343.5,886.0 L1345.9,886.0 L1348.3,886.0 L1350.7,886.0 L1353.1,886.0 L1355.5,886.0 L1357.9,886.0 L1360.3,886.0 L1362.7,886.0 L1365.1,886.0 L1367.5,886.0 L1369.8,886.0 L1372.2,886.0 L1374.6,886.0 L1377.0,886.0 L1379.4,886.0 L1381.8,886.0 L1384.2,886.0 L1386.6,886.0 L1389.0,886.0 L1391.4,886.0 L1393.8,886.0 L1396.2,886.0 L1398.5,886.0 L1400.9,886.0 L1403.3,886.0 L1405.7,886.0 L1408.1,886.0 L1410.5,886.0 L1412.9,886.0 L1415.3,886.0 L1417.7,886.0 L1420.1,886.0 L1422.5,886.0 L1424.9,886.0 L1427.3,886.0 L1429.6,886.0 L1432.0,886.0 L1434.4,886.0 L1436.8,886.0 L1439.2,886.0 L1441.6,886.0 L1444.0,886.0 L1446.4,886.0 L1448.8,886.0 L1451.2,886.0 L1453.6,886.0 L1456.0,886.0 L1458.3,886.0 L1460.7,886.0 L1463.1,886.0 L1465.5,886.0 L1467.9,886.0 L1470.3,886.0 L1472.7,886.0 L1475.1,886.0 L1477.5,886.0 L1479.9,886.0 L1482.3,886.0 L1484.7,886.0 L1487.1,886.0 L1489.4,886.0 L1491.8,886.0 L1494.2,886.0 L1496.6,886.0 L1499.0,886.0 L1501.4,886.0 L1503.8,886.0 L1506.2,886.0 L1508.6,886.0 L1511.0,886.0 L1513.4,886.0 L1515.8,886.0 L1518.1,886.0 L1520.5,886.0 L1522.9,886.0 L1525.3,886.0 L1527.7,886.0 L1530.1,886.0 L1532.5,886.0 L1534.9,886.0 L1537.3,886.0 L1539.7,886.0 L1542.1,886.0 L1544.5,886.0 L1546.8,886.0 L1549.2,886.0 L1551.6,886.0 L1554.0,886.0 L1556.4,886.0 L1558.8,886.0 L1561.2,886.0 L1563.6,886.0 L1566.0,886.0 L1568.4,886.0 L1570.8,886.0 L1573.2,886.0 L1575.6,886.0 L1577.9,886.0 L1580.3,886.0 L1582.7,886.0 L1585.1,886.0 L1587.5,886.0 L1589.9,886.0 L1592.3,886.0 L1594.7,886.0 L1597.1,886.0 L1599.5,886.0 L1601.9,886.0 L1604.3,886.0 L1606.6,886.0 L1609.0,886.0 L1611.4,886.0 L1613.8,886.0 L1616.2,886.0 L1618.6,886.0 L1621.0,886.0 L1621.0,960.0 L1264.6,960.0 Z" fill="#9a5a33" stroke="none" stroke-width="1" /><path d="M1264.6,889.9 L1267.0,889.8 L1269.4,889.7 L1271.8,890.1 L1274.2,889.8 L1276.6,889.9 L1279.0,889.7 L1281.3,889.5 L1283.7,889.7 L1286.1,889.6 L1288.5,889.7 L1290.9,889.5 L1293.3,889.6 L1295.7,889.3 L1298.1,889.0 L1300.5,888.9 L1302.9,889.3 L1305.3,888.9 L1307.7,889.1 L1310.0,889.1 L1312.4,888.6 L1314.8,889.1 L1317.2,888.5 L1319.6,889.0 L1322.0,889.0 L1324.4,888.5 L1326.8,888.8 L1329.2,888.7 L1331.6,888.3 L1334.0,888.5 L1336.4,887.8 L1338.8,888.1 L1341.1,887.7 L1343.5,887.8 L1345.9,887.0 L1348.3,888.9 L1350.7,890.9 L1353.1,890.9 L1355.5,890.4 L1357.9,890.7 L1360.3,890.4 L1362.7,889.7 L1365.1,889.4 L1367.5,889.5 L1369.8,890.6 L1372.2,891.8 L1374.6,891.9 L1377.0,891.9 L1379.4,891.6 L1381.8,891.6 L1384.2,891.8 L1386.6,891.9 L1389.0,891.6 L1391.4,891.8 L1393.8,891.6 L1396.2,891.8 L1398.5,891.6 L1400.9,891.4 L1403.3,891.2 L1405.7,891.2 L1408.1,891.1 L1410.5,891.7 L1412.9,891.3 L1415.3,890.7 L1417.7,889.7 L1420.1,889.6 L1422.5,889.1 L1424.9,889.4 L1427.3,889.1 L1429.6,889.0 L1432.0,888.7 L1434.4,888.4 L1436.8,888.5 L1439.2,888.4 L1441.6,887.8 L1444.0,887.8 L1446.4,887.9 L1448.8,887.8 L1451.2,887.5 L1453.6,887.4 L1456.0,887.7 L1458.3,887.1 L1460.7,887.0 L1463.1,887.3 L1465.5,887.0 L1467.9,887.4 L1470.3,886.9 L1472.7,887.3 L1475.1,886.9 L1477.5,887.2 L1479.9,887.1 L1482.3,887.0 L1484.7,886.6 L1487.1,886.6 L1489.4,886.4 L1491.8,886.5 L1494.2,886.8 L1496.6,886.3 L1499.0,886.4 L1501.4,886.6 L1503.8,886.4 L1506.2,886.5 L1508.6,886.4 L1511.0,886.7 L1513.4,886.3 L1515.8,886.9 L1518.1,886.7 L1520.5,886.7 L1522.9,886.6 L1525.3,886.6 L1527.7,886.9 L1530.1,886.9 L1532.5,886.8 L1534.9,886.2 L1537.3,886.6 L1539.7,886.9 L1542.1,886.7 L1544.5,886.6 L1546.8,886.7 L1549.2,886.3 L1551.6,886.7 L1554.0,886.8 L1556.4,886.3 L1558.8,886.6 L1561.2,886.6 L1563.6,886.4 L1566.0,886.7 L1568.4,886.8 L1570.8,886.8 L1573.2,886.4 L1575.6,886.3 L1577.9,886.8 L1580.3,886.6 L1582.7,886.8 L1585.1,886.8 L1587.5,886.4 L1589.9,886.6 L1592.3,886.4 L1594.7,886.7 L1597.1,886.7 L1599.5,886.3 L1601.9,886.5 L1604.3,886.6 L1606.6,886.3 L1609.0,886.3 L1611.4,886.5 L1613.8,886.2 L1616.2,886.5 L1618.6,886.8 L1621.0,886.7 L1621.0,960.0 L1264.6,960.0 Z" fill="#4a95ab" stroke="none" stroke-width="1" /><path d="M1264.6,889.9 L1267.0,889.8 L1269.4,889.7 L1271.8,890.1 L1274.2,889.8 L1276.6,889.9 L1279.0,889.7 L1281.3,889.5 L1283.7,889.7 L1286.1,889.6 L1288.5,889.7 L1290.9,889.5 L1293.3,889.6 L1295.7,889.3 L1298.1,889.0 L1300.5,888.9 L1302.9,889.3 L1305.3,888.9 L1307.7,889.1 L1310.0,889.1 L1312.4,888.6 L1314.8,889.1 L1317.2,888.5 L1319.6,889.0 L1322.0,889.0 L1324.4,888.5 L1326.8,888.8 L1329.2,888.7 L1331.6,888.3 L1334.0,888.5 L1336.4,887.8 L1338.8,888.1 L1341.1,887.7 L1343.5,887.8 L1345.9,887.0 L1348.3,888.9 L1350.7,890.9 L1353.1,890.9 L1355.5,890.4 L1357.9,890.7 L1360.3,890.4 L1362.7,889.7 L1365.1,889.4 L1367.5,889.5 L1369.8,890.6 L1372.2,891.8 L1374.6,891.9 L1377.0,891.9 L1379.4,891.6 L1381.8,891.6 L1384.2,891.8 L1386.6,891.9 L1389.0,891.6 L1391.4,891.8 L1393.8,891.6 L1396.2,891.8 L1398.5,891.6 L1400.9,891.4 L1403.3,891.2 L1405.7,891.2 L1408.1,891.1 L1410.5,891.7 L1412.9,891.3 L1415.3,890.7 L1417.7,889.7 L1420.1,889.6 L1422.5,889.1 L1424.9,889.4 L1427.3,889.1 L1429.6,889.0 L1432.0,888.7 L1434.4,888.4 L1436.8,888.5 L1439.2,888.4 L1441.6,887.8 L1444.0,887.8 L1446.4,887.9 L1448.8,887.8 L1451.2,887.5 L1453.6,887.4 L1456.0,887.7 L1458.3,887.1 L1460.7,887.0 L1463.1,887.3 L1465.5,887.0 L1467.9,887.4 L1470.3,886.9 L1472.7,887.3 L1475.1,886.9 L1477.5,887.2 L1479.9,887.1 L1482.3,887.0 L1484.7,886.6 L1487.1,886.6 L1489.4,886.4 L1491.8,886.5 L1494.2,886.8 L1496.6,886.3 L1499.0,886.4 L1501.4,886.6 L1503.8,886.4 L1506.2,886.5 L1508.6,886.4 L1511.0,886.7 L1513.4,886.3 L1515.8,886.9 L1518.1,886.7 L1520.5,886.7 L1522.9,886.6 L1525.3,886.6 L1527.7,886.9 L1530.1,886.9 L1532.5,886.8 L1534.9,886.2 L1537.3,886.6 L1539.7,886.9 L1542.1,886.7 L1544.5,886.6 L1546.8,886.7 L1549.2,886.3 L1551.6,886.7 L1554.0,886.8 L1556.4,886.3 L1558.8,886.6 L1561.2,886.6 L1563.6,886.4 L1566.0,886.7 L1568.4,886.8 L1570.8,886.8 L1573.2,886.4 L1575.6,886.3 L1577.9,886.8 L1580.3,886.6 L1582.7,886.8 L1585.1,886.8 L1587.5,886.4 L1589.9,886.6 L1592.3,886.4 L1594.7,886.7 L1597.1,886.7 L1599.5,886.3 L1601.9,886.5 L1604.3,886.6 L1606.6,886.3 L1609.0,886.3 L1611.4,886.5 L1613.8,886.2 L1616.2,886.5 L1618.6,886.8 L1621.0,886.7" fill="none" stroke="#65c6dc" stroke-width="1.6" /><line x1="1273" y1="877.2" x2="1273" y2="947" stroke="rgba(255,255,255,0.13)" stroke-width="1" /><line x1="1333" y1="877.2" x2="1333" y2="947" stroke="rgba(255,255,255,0.13)" stroke-width="1" /><line x1="1393.4" y1="877.2" x2="1393.4" y2="947" stroke="rgba(255,255,255,0.13)" stroke-width="1" /><line x1="1452.8" y1="877.2" x2="1452.8" y2="947" stroke="rgba(255,255,255,0.13)" stroke-width="1" /><line x1="1512.3" y1="877.2" x2="1512.3" y2="947" stroke="rgba(255,255,255,0.13)" stroke-width="1" /><line x1="1572.7" y1="877.2" x2="1572.7" y2="947" stroke="rgba(255,255,255,0.13)" stroke-width="1" /><text x="1803.0" y="887.3" font-size="12" fill="#33b5e5" font-weight="bold" text-anchor="end" textLength="23" lengthAdjust="spacingAndGlyphs" >max</text><text x="1874.0" y="887.3" font-size="12" fill="#33b5e5" font-weight="bold" text-anchor="end" textLength="39" lengthAdjust="spacingAndGlyphs" >current</text><rect x="1654" y="906.7" width="13" height="3.0" rx="0" fill="#7eb26d" /><text x="1675.0" y="910.1" font-size="12" fill="#d0d2d4" font-weight="normal" text-anchor="start" >Used</text><text x="1803.0" y="910.1" font-size="12" fill="#fff" font-weight="normal" text-anchor="end" stroke="#fff" stroke-width="0.3" >14.7 GB</text><text x="1874.0" y="910.1" font-size="12" fill="#fff" font-weight="normal" text-anchor="end" stroke="#fff" stroke-width="0.3" >14.7 GB</text><rect x="1654" y="932.5" width="13" height="3.0" rx="0" fill="#eab839" /><text x="1675.0" y="935.9" font-size="12" fill="#d0d2d4" font-weight="normal" text-anchor="start" >Buffered</text><text x="1803.0" y="935.9" font-size="12" fill="#fff" font-weight="normal" text-anchor="end" stroke="#fff" stroke-width="0.3" >3 MB</text><text x="1874.0" y="935.9" font-size="12" fill="#fff" font-weight="normal" text-anchor="end" stroke="#fff" stroke-width="0.3" >3 MB</text><rect x="1911" y="63" width="6" height="291" rx="3" fill="rgba(190,200,210,0.35)" /></svg></body></html>
